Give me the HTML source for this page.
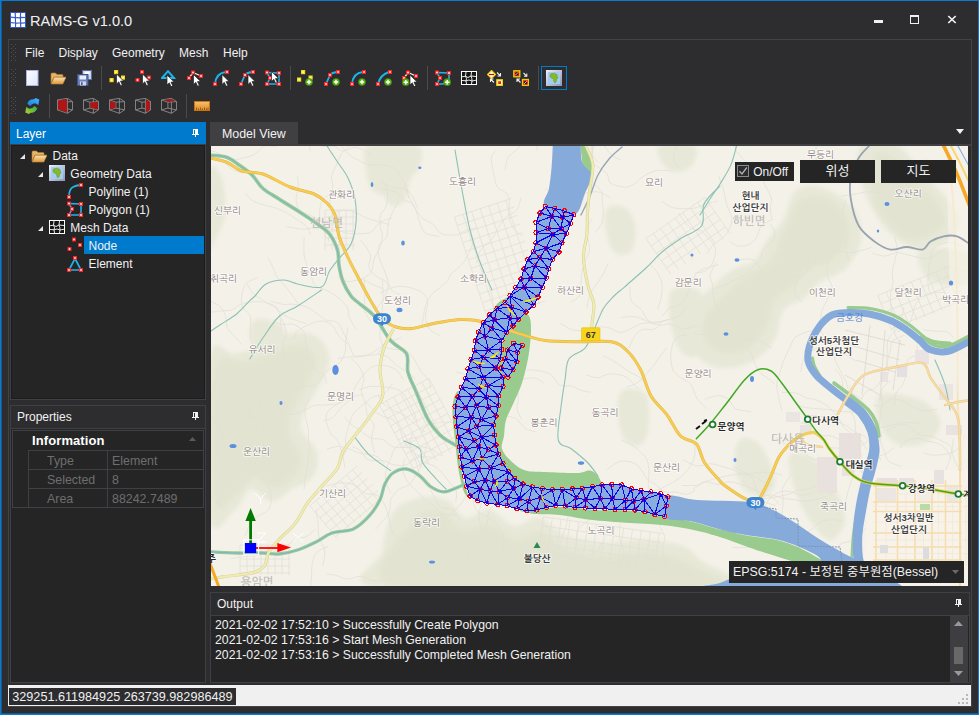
<!DOCTYPE html>
<html lang="ko">
<head>
<meta charset="utf-8">
<title>RAMS-G v1.0.0</title>
<style>
*{box-sizing:border-box;margin:0;padding:0}
html,body{width:979px;height:715px;overflow:hidden;background:#2d2d30}
body{font-family:"Liberation Sans","Noto Sans CJK KR",sans-serif;font-size:12px;color:#f1f1f1;position:relative}
.abs{position:absolute}
#win{position:absolute;left:0;top:0;width:979px;height:715px;border:1px solid #0a7bd4;background:#2d2d30;box-shadow:inset 1px -1px 0 0 #1c5587}
#title{position:absolute;left:30px;top:11px;font-size:14.6px;line-height:20px;color:#f1f1f1;white-space:nowrap}
#frame{position:absolute;left:8px;top:39px;width:964px;height:668px;border:1px solid #434346;background:#2d2d30}
.menu span{position:absolute;top:45px;font-size:12px;line-height:16px;color:#f1f1f1;white-space:nowrap}
.grip{position:absolute;width:5px;background-image:radial-gradient(circle at 1px 1px,#5a5a5f 0.8px,transparent 1px);background-size:3px 3px}
.sep{position:absolute;width:1px;background:#4a4a4f}
.phead{position:absolute;height:22px;line-height:24px;font-size:12px;padding-left:6px;white-space:nowrap}
.panel{position:absolute;background:#252526;border:1px solid #3f3f46}
.tree div{position:absolute;font-size:12px;line-height:18px;height:18px;white-space:nowrap;color:#f1f1f1}
.pg{position:absolute;font-size:12.4px;line-height:18px;color:#6e6e6e;white-space:nowrap}
.out{position:absolute;left:215px;font-size:12.25px;line-height:15px;color:#f1f1f1;white-space:nowrap}
.mapbtn{position:absolute;background:#252526;color:#f1f1f1;font-size:13px;text-align:center;white-space:nowrap}
</style>
</head>
<body>
<div id="win"></div>

<svg class="abs" style="left:10px;top:12px" width="16" height="16" viewBox="0 0 16 16"><rect width="16" height="16" fill="#3558c4"/><g fill="#fff"><path d="M1 1h3.6l.2 4L1 4.6z"/><path d="M5.8 1h4.2l-.2 4.2L6 5z"/><path d="M11.2 1H15v4l-4-.2z"/><path d="M1 5.8l3.8.4.2 4.200L1 10z"/><path d="M6 6.200l3.800.200.200 4L6 10.600z"/><path d="M11 6.200L15 6v4.200l-3.800.4z"/><path d="M1 11.200l4 .4V15H1z"/><path d="M6.200 11.800l3.800-.2.200 3.400H6z"/><path d="M11.200 11.800l3.800-.4V15h-3.600z"/></g></svg>
<div id="title">RAMS-G v1.0.0</div>
<div class="abs" style="left:874px;top:20px;width:9px;height:3px;background:#f1f1f1"></div>
<div class="abs" style="left:910px;top:15px;width:9px;height:9px;border:1px solid #f1f1f1;border-top-width:2px"></div>
<svg class="abs" style="left:947px;top:15px" width="10" height="9" viewBox="0 0 10 9"><path d="M1.300 1 L8.700 8 M8.700 1 L1.300 8" stroke="#f1f1f1" stroke-width="1.7" fill="none"/></svg>
<div id="frame"></div>
<svg class="abs" style="left:11px;top:44px" width="5" height="17" viewBox="0 0 5 17"><g fill="#505056"><rect x="0" y="0" width="1" height="1"/><rect x="4" y="0" width="1" height="1"/><rect x="2" y="2" width="1" height="1"/><rect x="0" y="4" width="1" height="1"/><rect x="4" y="4" width="1" height="1"/><rect x="2" y="6" width="1" height="1"/><rect x="0" y="8" width="1" height="1"/><rect x="4" y="8" width="1" height="1"/><rect x="2" y="10" width="1" height="1"/><rect x="0" y="12" width="1" height="1"/><rect x="4" y="12" width="1" height="1"/><rect x="2" y="14" width="1" height="1"/><rect x="0" y="16" width="1" height="1"/><rect x="4" y="16" width="1" height="1"/></g></svg>
<div class="menu">
<span style="left:25px">File</span>
<span style="left:58.5px">Display</span>
<span style="left:112px">Geometry</span>
<span style="left:179px">Mesh</span>
<span style="left:223px">Help</span>
</div>
<svg class="abs" style="left:11px;top:69px" width="5" height="17" viewBox="0 0 5 17"><g fill="#505056"><rect x="0" y="0" width="1" height="1"/><rect x="4" y="0" width="1" height="1"/><rect x="2" y="2" width="1" height="1"/><rect x="0" y="4" width="1" height="1"/><rect x="4" y="4" width="1" height="1"/><rect x="2" y="6" width="1" height="1"/><rect x="0" y="8" width="1" height="1"/><rect x="4" y="8" width="1" height="1"/><rect x="2" y="10" width="1" height="1"/><rect x="0" y="12" width="1" height="1"/><rect x="4" y="12" width="1" height="1"/><rect x="2" y="14" width="1" height="1"/><rect x="0" y="16" width="1" height="1"/><rect x="4" y="16" width="1" height="1"/></g></svg>
<svg class="abs" style="left:11px;top:97px" width="5" height="17" viewBox="0 0 5 17"><g fill="#505056"><rect x="0" y="0" width="1" height="1"/><rect x="4" y="0" width="1" height="1"/><rect x="2" y="2" width="1" height="1"/><rect x="0" y="4" width="1" height="1"/><rect x="4" y="4" width="1" height="1"/><rect x="2" y="6" width="1" height="1"/><rect x="0" y="8" width="1" height="1"/><rect x="4" y="8" width="1" height="1"/><rect x="2" y="10" width="1" height="1"/><rect x="0" y="12" width="1" height="1"/><rect x="4" y="12" width="1" height="1"/><rect x="2" y="14" width="1" height="1"/><rect x="0" y="16" width="1" height="1"/><rect x="4" y="16" width="1" height="1"/></g></svg>
<svg class="abs" style="left:24px;top:70px" width="16" height="16" viewBox="0 0 16 16"><defs><linearGradient id="gn" x1="0" y1="0" x2="1" y2="1"><stop offset="0" stop-color="#fff"/><stop offset="1" stop-color="#dfe4fb"/></linearGradient></defs><rect x="2.5" y="0.5" width="11.5" height="15" fill="url(#gn)" stroke="#a9b2e6"/></svg>
<svg class="abs" style="left:50px;top:70px" width="16" height="16" viewBox="0 0 16 16"><defs><linearGradient id="gf" x1="0" y1="0" x2="0" y2="1"><stop offset="0" stop-color="#fbe2b0"/><stop offset="1" stop-color="#e09a3c"/></linearGradient></defs><path d="M1 4 Q1 3 2 3 H5.5 L7 4.5 H12 Q13 4.5 13 5.5 V7 H4 L1 13 Z" fill="#e7b569" stroke="#b77a2a" stroke-width="0.6"/><path d="M4.2 7.2 H16 L12.8 14 H1.2 Z" fill="url(#gf)" stroke="#c48a3a" stroke-width="0.6"/></svg>
<svg class="abs" style="left:76px;top:70px" width="16" height="16" viewBox="0 0 16 16"><rect x="6.5" y="0.5" width="9" height="9" fill="#c9d4ec" stroke="#5b6e9e"/><rect x="8.5" y="1.5" width="5" height="4" fill="#fff"/><rect x="1.5" y="4.5" width="10.5" height="11" fill="#6c81b6" stroke="#3f5288"/><rect x="3.5" y="5.5" width="6.5" height="4" fill="#e8eefc"/><rect x="4" y="11.5" width="6" height="4" fill="#cfd8ee"/><rect x="5" y="12.3" width="1.6" height="2.6" fill="#3f5288"/></svg>
<svg class="abs" style="left:109px;top:70px" width="16" height="16" viewBox="0 0 16 16"><rect x="5" y="0" width="4.2" height="4.2" fill="#f2d91a"/><rect x="6.2" y="1.2" width="1.8000000000000003" height="1.8000000000000003" fill="#fff8a0"/><rect x="0.5" y="8" width="4.2" height="4.2" fill="#f2d91a"/><rect x="1.7" y="9.2" width="1.8000000000000003" height="1.8000000000000003" fill="#fff8a0"/><rect x="12" y="5.5" width="4.2" height="4.2" fill="#f2d91a"/><rect x="13.2" y="6.7" width="1.8000000000000003" height="1.8000000000000003" fill="#fff8a0"/><path d="M7.5 4 v10 l2.3 -2.2 l1.8 4 l1.7 -.8 l-1.8 -3.9 h3.2 z" fill="#fff" stroke="#222" stroke-width="0.7" stroke-linejoin="round"/></svg>
<svg class="abs" style="left:135px;top:70px" width="16" height="16" viewBox="0 0 16 16"><rect x="5" y="0" width="4" height="4" fill="#f22"/><rect x="6.2" y="1.2" width="1.6" height="1.6" fill="#fff"/><rect x="0.5" y="8" width="4" height="4" fill="#f22"/><rect x="1.7" y="9.2" width="1.6" height="1.6" fill="#fff"/><rect x="12" y="5.5" width="4" height="4" fill="#f22"/><rect x="13.2" y="6.7" width="1.6" height="1.6" fill="#fff"/><path d="M7.5 4 v10 l2.3 -2.2 l1.8 4 l1.7 -.8 l-1.8 -3.9 h3.2 z" fill="#fff" stroke="#222" stroke-width="0.7" stroke-linejoin="round"/></svg>
<svg class="abs" style="left:161px;top:70px" width="16" height="16" viewBox="0 0 16 16"><path d="M7 1.2 L13 8 H1 Z" fill="none" stroke="#1eb4ea" stroke-width="2"/><path d="M6 5 v10 l2.3 -2.2 l1.8 4 l1.7 -.8 l-1.8 -3.9 h3.2 z" fill="#fff" stroke="#222" stroke-width="0.7" stroke-linejoin="round"/></svg>
<svg class="abs" style="left:187px;top:70px" width="16" height="16" viewBox="0 0 16 16"><path d="M2 8 L6 2.5 L14 6" stroke="#eee" stroke-width="1.3" fill="none"/><rect x="0" y="6" width="4" height="4" fill="#f22"/><rect x="1.2" y="7.2" width="1.6" height="1.6" fill="#fff"/><rect x="4" y="0.5" width="4" height="4" fill="#f22"/><rect x="5.2" y="1.7" width="1.6" height="1.6" fill="#fff"/><rect x="12" y="4" width="4" height="4" fill="#f22"/><rect x="13.2" y="5.2" width="1.6" height="1.6" fill="#fff"/><path d="M6.5 4.5 v10 l2.3 -2.2 l1.8 4 l1.7 -.8 l-1.8 -3.9 h3.2 z" fill="#fff" stroke="#222" stroke-width="0.7" stroke-linejoin="round"/></svg>
<svg class="abs" style="left:213px;top:70px" width="16" height="16" viewBox="0 0 16 16"><path d="M2 14 Q3 3 13 2" stroke="#1eb4ea" stroke-width="1.8" fill="none"/><rect x="0" y="12" width="4" height="4" fill="#f22"/><rect x="1.2" y="13.2" width="1.6" height="1.6" fill="#fff"/><rect x="12" y="0" width="4" height="4" fill="#f22"/><rect x="13.2" y="1.2" width="1.6" height="1.6" fill="#fff"/><path d="M9 4.5 v10 l2.3 -2.2 l1.8 4 l1.7 -.8 l-1.8 -3.9 h3.2 z" fill="#fff" stroke="#222" stroke-width="0.7" stroke-linejoin="round"/></svg>
<svg class="abs" style="left:239px;top:70px" width="16" height="16" viewBox="0 0 16 16"><path d="M2 14 L6 5 Q8 2.5 13 2" stroke="#1eb4ea" stroke-width="1.8" fill="none"/><rect x="0" y="12" width="4" height="4" fill="#f22"/><rect x="1.2" y="13.2" width="1.6" height="1.6" fill="#fff"/><rect x="4" y="3" width="4" height="4" fill="#f22"/><rect x="5.2" y="4.2" width="1.6" height="1.6" fill="#fff"/><rect x="12" y="0" width="4" height="4" fill="#f22"/><rect x="13.2" y="1.2" width="1.6" height="1.6" fill="#fff"/><path d="M9 4.5 v10 l2.3 -2.2 l1.8 4 l1.7 -.8 l-1.8 -3.9 h3.2 z" fill="#fff" stroke="#222" stroke-width="0.7" stroke-linejoin="round"/></svg>
<svg class="abs" style="left:265px;top:70px" width="16" height="16" viewBox="0 0 16 16"><path d="M2 2.5 L14 3 V14 H2 L5 8 Z" stroke="#1eb4ea" stroke-width="1.6" fill="none"/><rect x="0" y="0.5" width="4" height="4" fill="#f22"/><rect x="1.2" y="1.7" width="1.6" height="1.6" fill="#fff"/><rect x="12" y="1" width="4" height="4" fill="#f22"/><rect x="13.2" y="2.2" width="1.6" height="1.6" fill="#fff"/><rect x="12" y="12" width="4" height="4" fill="#f22"/><rect x="13.2" y="13.2" width="1.6" height="1.6" fill="#fff"/><rect x="0" y="12" width="4" height="4" fill="#f22"/><rect x="1.2" y="13.2" width="1.6" height="1.6" fill="#fff"/><rect x="3" y="6" width="4" height="4" fill="#f22"/><rect x="4.2" y="7.2" width="1.6" height="1.6" fill="#fff"/><path d="M6.5 1.5 v10 l2.3 -2.2 l1.8 4 l1.7 -.8 l-1.8 -3.9 h3.2 z" fill="#fff" stroke="#222" stroke-width="0.7" stroke-linejoin="round"/></svg>
<svg class="abs" style="left:297px;top:70px" width="16" height="16" viewBox="0 0 16 16"><rect x="4" y="0" width="4.2" height="4.2" fill="#f2d91a"/><rect x="5.2" y="1.2" width="1.8000000000000003" height="1.8000000000000003" fill="#fff8a0"/><rect x="0" y="7.5" width="4.2" height="4.2" fill="#f2d91a"/><rect x="1.2" y="8.7" width="1.8000000000000003" height="1.8000000000000003" fill="#fff8a0"/><rect x="11.5" y="5.5" width="4.2" height="4.2" fill="#f2d91a"/><rect x="12.7" y="6.7" width="1.8000000000000003" height="1.8000000000000003" fill="#fff8a0"/><circle cx="12" cy="12" r="3.6" fill="#58b010" stroke="#3c8a08" stroke-width="0.6"/><path d="M12 9.8 V14.2 M9.8 12 H14.2" stroke="#fff" stroke-width="1.4"/></svg>
<svg class="abs" style="left:324px;top:70px" width="16" height="16" viewBox="0 0 16 16"><path d="M2 14 L6 5 Q8 2.5 13 2" stroke="#1eb4ea" stroke-width="1.8" fill="none"/><rect x="0" y="12" width="4" height="4" fill="#f22"/><rect x="1.2" y="13.2" width="1.6" height="1.6" fill="#fff"/><rect x="4" y="3" width="4" height="4" fill="#f22"/><rect x="5.2" y="4.2" width="1.6" height="1.6" fill="#fff"/><rect x="12" y="0" width="4" height="4" fill="#f22"/><rect x="13.2" y="1.2" width="1.6" height="1.6" fill="#fff"/><circle cx="12" cy="12" r="3.6" fill="#58b010" stroke="#3c8a08" stroke-width="0.6"/><path d="M12 9.8 V14.2 M9.8 12 H14.2" stroke="#fff" stroke-width="1.4"/></svg>
<svg class="abs" style="left:350px;top:70px" width="16" height="16" viewBox="0 0 16 16"><path d="M2 14 Q3 3 13 2" stroke="#1eb4ea" stroke-width="1.8" fill="none"/><rect x="0" y="12" width="4" height="4" fill="#f22"/><rect x="1.2" y="13.2" width="1.6" height="1.6" fill="#fff"/><rect x="12" y="0" width="4" height="4" fill="#f22"/><rect x="13.2" y="1.2" width="1.6" height="1.6" fill="#fff"/><circle cx="12" cy="12" r="3.6" fill="#58b010" stroke="#3c8a08" stroke-width="0.6"/><path d="M12 9.8 V14.2 M9.8 12 H14.2" stroke="#fff" stroke-width="1.4"/></svg>
<svg class="abs" style="left:376px;top:70px" width="16" height="16" viewBox="0 0 16 16"><path d="M2 14 Q4 5 13 2" stroke="#1eb4ea" stroke-width="2" fill="none"/><rect x="0" y="12" width="4" height="4" fill="#f22"/><rect x="1.2" y="13.2" width="1.6" height="1.6" fill="#fff"/><rect x="12" y="0" width="4" height="4" fill="#f22"/><rect x="13.2" y="1.2" width="1.6" height="1.6" fill="#fff"/><circle cx="12" cy="12" r="3.6" fill="#58b010" stroke="#3c8a08" stroke-width="0.6"/><path d="M12 9.8 V14.2 M9.8 12 H14.2" stroke="#fff" stroke-width="1.4"/></svg>
<svg class="abs" style="left:402px;top:70px" width="16" height="16" viewBox="0 0 16 16"><path d="M2 8 L6 2.5 L14 6" stroke="#eee" stroke-width="1.3" fill="none"/><rect x="0" y="6" width="4" height="4" fill="#f22"/><rect x="1.2" y="7.2" width="1.6" height="1.6" fill="#fff"/><rect x="4" y="0.5" width="4" height="4" fill="#f22"/><rect x="5.2" y="1.7" width="1.6" height="1.6" fill="#fff"/><rect x="12" y="4" width="4" height="4" fill="#f22"/><rect x="13.2" y="5.2" width="1.6" height="1.6" fill="#fff"/><circle cx="3.8" cy="12.2" r="3.6" fill="#58b010" stroke="#3c8a08" stroke-width="0.6"/><path d="M3.8 10.0 V14.399999999999999 M1.5999999999999996 12.2 H6.0" stroke="#fff" stroke-width="1.4"/><path d="M8 5 v10 l2.3 -2.2 l1.8 4 l1.7 -.8 l-1.8 -3.9 h3.2 z" fill="#fff" stroke="#222" stroke-width="0.7" stroke-linejoin="round"/></svg>
<svg class="abs" style="left:435px;top:70px" width="16" height="16" viewBox="0 0 16 16"><path d="M2 2.5 L14 3 V11 L8 14 H2 L5 8 Z" stroke="#1eb4ea" stroke-width="1.6" fill="none"/><rect x="0" y="0.5" width="4" height="4" fill="#f22"/><rect x="1.2" y="1.7" width="1.6" height="1.6" fill="#fff"/><rect x="12" y="1" width="4" height="4" fill="#f22"/><rect x="13.2" y="2.2" width="1.6" height="1.6" fill="#fff"/><rect x="0" y="12" width="4" height="4" fill="#f22"/><rect x="1.2" y="13.2" width="1.6" height="1.6" fill="#fff"/><rect x="3" y="6" width="4" height="4" fill="#f22"/><rect x="4.2" y="7.2" width="1.6" height="1.6" fill="#fff"/><circle cx="12.2" cy="12.2" r="3.6" fill="#58b010" stroke="#3c8a08" stroke-width="0.6"/><path d="M12.2 10.0 V14.399999999999999 M10.0 12.2 H14.399999999999999" stroke="#fff" stroke-width="1.4"/></svg>
<svg class="abs" style="left:461px;top:70px" width="16" height="16" viewBox="0 0 16 16"><rect x="0.5" y="1.5" width="15" height="13" fill="#151515" stroke="#fff" stroke-width="1"/><path d="M1 6.800 L4.500 6.200 L7 7.500 L10 6 L15 6.500 M1 10.500 L5 10.800 L8 10 L11 11 L15 10.200 M5 2 L4.500 6.200 L5.500 8.500 L5 10.800 L5.500 14 M10.500 2 L10 6 L10.800 8.500 L11 11 L10.500 14" stroke="#fff" stroke-width="0.9" fill="none"/></svg>
<svg class="abs" style="left:487px;top:70px" width="16" height="16" viewBox="0 0 16 16"><path d="M4.5 0.5 L8.5 4.5 L4.5 8.5 L0.5 4.5 Z" fill="#fff" stroke="#f2d000" stroke-width="1.2"/><path d="M2 4.5 H7" stroke="#c00" stroke-width="1.2"/><rect x="9.8" y="9.8" width="5.6" height="5.6" fill="#fff" stroke="#f2d000" stroke-width="1.3"/><rect x="11.2" y="11.2" width="2.8" height="2.8" fill="#e22"/><path d="M10 2.5 L13.5 6 M13.5 3 V6 H10.5 M7 12.5 L3.5 9 M3.5 12 V9 H6.5" stroke="#eee" stroke-width="1.1" fill="none"/></svg>
<svg class="abs" style="left:513px;top:70px" width="16" height="16" viewBox="0 0 16 16"><rect x="0.8" y="0.8" width="6" height="6" fill="#e22" stroke="#f2d000" stroke-width="1.3"/><circle cx="3.8" cy="3.8" r="1.6" fill="#111"/><path d="M2.5 5 L5 2.5" stroke="#fff" stroke-width="0.8"/><rect x="9.5" y="9.5" width="6" height="6" fill="#e22" stroke="#f2d000" stroke-width="1.3"/><circle cx="12.5" cy="12.5" r="1.6" fill="#111"/><path d="M11.2 13.8 L13.8 11.2" stroke="#fff" stroke-width="0.8"/><path d="M10.5 3 L13.8 6.3 M13.8 3.5 V6.3 H11 M7.5 12.5 L4 9 M4 12 V9 H7" stroke="#eee" stroke-width="1.1" fill="none"/></svg>
<svg class="abs" style="left:546px;top:70px" width="16" height="16" viewBox="0 0 16 16"><g transform="translate(0 0) scale(1)"><defs><linearGradient id="gaf" x1="0" y1="0" x2="1" y2="1"><stop offset="0" stop-color="#eef0fb"/><stop offset="1" stop-color="#9094b8"/></linearGradient></defs><rect x="0" y="0" width="16" height="16" fill="url(#gaf)"/><rect x="2" y="2" width="12" height="12" fill="#a2ccf0"/><path d="M4.800 3.800 L8.500 3.200 L11.200 4.800 L11 6.600 L12.200 7.200 L10.600 9.400 L10.200 11.800 L8.600 12.800 L7.600 10.800 L7.800 8.800 L6 8.400 L4.200 7 L4 5 Z" fill="#86b82c" stroke="#5f9a1c" stroke-width="0.5"/></g></svg>
<div class="sep" style="left:101px;top:66px;height:24px"></div>
<div class="sep" style="left:290px;top:66px;height:24px"></div>
<div class="sep" style="left:427px;top:66px;height:24px"></div>
<div class="sep" style="left:538px;top:66px;height:24px"></div>
<div class="abs" style="left:541px;top:66px;width:26px;height:24px;border:1px solid #007acc"></div>
<svg class="abs" style="left:24px;top:98px" width="16" height="16" viewBox="0 0 16 16"><defs><linearGradient id="grb" x1="0" y1="1" x2="1" y2="0"><stop offset="0" stop-color="#1680e0"/><stop offset="1" stop-color="#45b4ff"/></linearGradient><linearGradient id="grg" x1="1" y1="0" x2="0" y2="1"><stop offset="0" stop-color="#2aa848"/><stop offset="1" stop-color="#b4d22c"/></linearGradient></defs><path d="M3.300 5.700 Q5 1 10 1.300 L11.600 0.100 L15.300 1.500 L14.400 7 L11.200 5.200 Q8 5.500 6.100 7.900 Z" fill="url(#grb)"/><path d="M13.300 10.300 Q11.600 15 6.600 14.700 L5 15.900 L1.300 14.500 L2.200 9 L5.400 10.800 Q8.600 10.500 10.500 8.100 Z" fill="url(#grg)"/></svg>
<svg class="abs" style="left:57px;top:98px" width="16" height="16" viewBox="0 0 16 16"><path d="M0.500 2 L10.400 0.300 L15.500 3.600 V11.900 L10.400 15.300 L0.500 11.900 Z M10.400 0.300 V15.300 M0.500 2 L6.900 4.200 L15.500 3.600 M6.900 4.200 V10.100 M0.500 11.900 L6.900 10.100 L15.500 11.900" stroke="#8c8c8c" stroke-width="0.9" fill="none"/><path d="M1.100 2.600 L10 1 V14.600 L1.100 11.600 Z" fill="#b01515"/></svg>
<svg class="abs" style="left:83px;top:98px" width="16" height="16" viewBox="0 0 16 16"><path d="M0.500 2 L10.400 0.300 L15.500 3.600 V11.900 L10.400 15.300 L0.500 11.900 Z M10.400 0.300 V15.300 M0.500 2 L6.900 4.200 L15.500 3.600 M6.900 4.200 V10.100 M0.500 11.900 L6.900 10.100 L15.500 11.900" stroke="#8c8c8c" stroke-width="0.9" fill="none"/><path d="M7.400 4.600 L14.800 4.100 V11.400 L7.400 9.800 Z" fill="#b01515"/></svg>
<svg class="abs" style="left:109px;top:98px" width="16" height="16" viewBox="0 0 16 16"><path d="M0.500 2 L10.400 0.300 L15.500 3.600 V11.900 L10.400 15.300 L0.500 11.900 Z M10.400 0.300 V15.300 M0.500 2 L6.900 4.200 L15.500 3.600 M6.900 4.200 V10.100 M0.500 11.900 L6.900 10.100 L15.500 11.900" stroke="#8c8c8c" stroke-width="0.9" fill="none"/><path d="M1.200 2.800 L6.500 4.600 V9.800 L1.200 11.400 Z" fill="#b01515"/></svg>
<svg class="abs" style="left:135px;top:98px" width="16" height="16" viewBox="0 0 16 16"><path d="M0.500 2 L10.400 0.300 L15.500 3.600 V11.900 L10.400 15.300 L0.500 11.900 Z M10.400 0.300 V15.300 M0.500 2 L6.900 4.200 L15.500 3.600 M6.900 4.200 V10.100 M0.500 11.900 L6.900 10.100 L15.500 11.900" stroke="#8c8c8c" stroke-width="0.9" fill="none"/><path d="M10.900 1.200 L15 3.900 V11.600 L10.900 14.300 Z" fill="#b01515"/></svg>
<svg class="abs" style="left:161px;top:98px" width="16" height="16" viewBox="0 0 16 16"><path d="M0.500 2 L10.400 0.300 L15.500 3.600 V11.900 L10.400 15.300 L0.500 11.900 Z M10.400 0.300 V15.300 M0.500 2 L6.900 4.200 L15.500 3.600 M6.900 4.200 V10.100 M0.500 11.900 L6.900 10.100 L15.500 11.900" stroke="#8c8c8c" stroke-width="0.9" fill="none"/><path d="M2.600 2.100 L10.300 0.900 L14.200 3.300 L7 3.800 Z" fill="#b01515"/></svg>
<svg class="abs" style="left:193.5px;top:98px" width="16" height="16" viewBox="0 0 16 16"><defs><linearGradient id="gr" x1="0" y1="0" x2="0" y2="1"><stop offset="0" stop-color="#f6c073"/><stop offset="1" stop-color="#e08a1e"/></linearGradient></defs><rect x="0.5" y="3.5" width="15" height="9" fill="url(#gr)" stroke="#c87514"/><path d="M2.5 12 V9.5 M4.5 12 V10.5 M6.5 12 V9.5 M8.5 12 V10.5 M10.5 12 V9.5 M12.5 12 V10.5 M14 12 V9.5" stroke="#8a4d08" stroke-width="0.8"/></svg>
<div class="sep" style="left:49px;top:94px;height:24px"></div>
<div class="sep" style="left:186px;top:94px;height:24px"></div>
<div class="phead" style="left:10px;top:122px;width:196px;background:#007acc;color:#fff">Layer</div>
<svg class="abs" style="left:192px;top:129px" width="7" height="8" viewBox="0 0 7 8" shape-rendering="crispEdges"><path d="M1 0 H6 V5 H7 V6 H4 V8 H3 V6 H0 V5 H1 Z M2 1 V5 H3 V1 Z" fill="#ffffff" fill-rule="evenodd"/></svg>
<div class="panel" style="left:10px;top:144px;width:196px;height:256px"></div>
<div class="abs" style="left:11px;top:145px;width:194px;height:254px;border:1px solid #1c1c1c"></div>
<div class="tree">
<div style="left:84px;top:236px;width:120px;background:#007acc"></div>
<div style="left:52.5px;top:147px">Data</div>
<div style="left:70.3px;top:165px">Geometry Data</div>
<div style="left:88.5px;top:183px">Polyline (1)</div>
<div style="left:88.5px;top:201px">Polygon (1)</div>
<div style="left:70.3px;top:219px">Mesh Data</div>
<div style="left:88.5px;top:237px">Node</div>
<div style="left:88.5px;top:255px">Element</div>
</div>
<svg class="abs" style="left:20px;top:154px" width="5" height="5" viewBox="0 0 5 5"><path d="M5 0 V5 H0 Z" fill="#e8e8e8"/></svg>
<svg class="abs" style="left:38px;top:172px" width="5" height="5" viewBox="0 0 5 5"><path d="M5 0 V5 H0 Z" fill="#e8e8e8"/></svg>
<svg class="abs" style="left:38px;top:226px" width="5" height="5" viewBox="0 0 5 5"><path d="M5 0 V5 H0 Z" fill="#e8e8e8"/></svg>
<svg class="abs" style="left:31px;top:148px" width="16" height="16" viewBox="0 0 16 16"><defs><linearGradient id="gf" x1="0" y1="0" x2="0" y2="1"><stop offset="0" stop-color="#fbe2b0"/><stop offset="1" stop-color="#e09a3c"/></linearGradient></defs><path d="M1 4 Q1 3 2 3 H5.5 L7 4.5 H12 Q13 4.5 13 5.5 V7 H4 L1 13 Z" fill="#e7b569" stroke="#b77a2a" stroke-width="0.6"/><path d="M4.2 7.2 H16 L12.8 14 H1.2 Z" fill="url(#gf)" stroke="#c48a3a" stroke-width="0.6"/></svg>
<svg class="abs" style="left:49px;top:165px" width="16" height="16" viewBox="0 0 16 16"><g transform="translate(0 0) scale(1)"><defs><linearGradient id="gaf" x1="0" y1="0" x2="1" y2="1"><stop offset="0" stop-color="#eef0fb"/><stop offset="1" stop-color="#9094b8"/></linearGradient></defs><rect x="0" y="0" width="16" height="16" fill="url(#gaf)"/><rect x="2" y="2" width="12" height="12" fill="#a2ccf0"/><path d="M4.800 3.800 L8.500 3.200 L11.200 4.800 L11 6.600 L12.200 7.200 L10.600 9.400 L10.200 11.800 L8.600 12.800 L7.600 10.800 L7.800 8.800 L6 8.400 L4.200 7 L4 5 Z" fill="#86b82c" stroke="#5f9a1c" stroke-width="0.5"/></g></svg>
<svg class="abs" style="left:67px;top:183px" width="16" height="16" viewBox="0 0 16 16"><path d="M2 14 Q2 6 6 4 Q9 2.5 13 2" stroke="#1eb4ea" stroke-width="1.8" fill="none"/><rect x="0" y="12" width="4" height="4" fill="#f22"/><rect x="1.2" y="13.2" width="1.6" height="1.6" fill="#fff"/><rect x="12" y="0" width="4" height="4" fill="#f22"/><rect x="13.2" y="1.2" width="1.6" height="1.6" fill="#fff"/></svg>
<svg class="abs" style="left:67px;top:201px" width="16" height="16" viewBox="0 0 16 16"><path d="M2 2.5 L14 3 V14 H2 L5 8 Z" stroke="#1eb4ea" stroke-width="1.6" fill="none"/><rect x="0" y="0.5" width="4" height="4" fill="#f22"/><rect x="1.2" y="1.7" width="1.6" height="1.6" fill="#fff"/><rect x="12" y="1" width="4" height="4" fill="#f22"/><rect x="13.2" y="2.2" width="1.6" height="1.6" fill="#fff"/><rect x="12" y="12" width="4" height="4" fill="#f22"/><rect x="13.2" y="13.2" width="1.6" height="1.6" fill="#fff"/><rect x="0" y="12" width="4" height="4" fill="#f22"/><rect x="1.2" y="13.2" width="1.6" height="1.6" fill="#fff"/><rect x="3" y="6" width="4" height="4" fill="#f22"/><rect x="4.2" y="7.2" width="1.6" height="1.6" fill="#fff"/></svg>
<svg class="abs" style="left:49px;top:219px" width="16" height="16" viewBox="0 0 16 16"><rect x="0.5" y="1.5" width="15" height="13" fill="#151515" stroke="#fff" stroke-width="1"/><path d="M1 6.800 L4.500 6.200 L7 7.500 L10 6 L15 6.500 M1 10.500 L5 10.800 L8 10 L11 11 L15 10.200 M5 2 L4.500 6.200 L5.500 8.500 L5 10.800 L5.500 14 M10.500 2 L10 6 L10.800 8.500 L11 11 L10.500 14" stroke="#fff" stroke-width="0.9" fill="none"/></svg>
<svg class="abs" style="left:67px;top:237px" width="16" height="16" viewBox="0 0 16 16"><rect x="5" y="0.5" width="4" height="4" fill="#f22"/><rect x="6.2" y="1.7" width="1.6" height="1.6" fill="#fff"/><rect x="0.5" y="10" width="4" height="4" fill="#f22"/><rect x="1.7" y="11.2" width="1.6" height="1.6" fill="#fff"/><rect x="11" y="6" width="4" height="4" fill="#f22"/><rect x="12.2" y="7.2" width="1.6" height="1.6" fill="#fff"/></svg>
<svg class="abs" style="left:67px;top:255.5px" width="16" height="16" viewBox="0 0 16 16"><path d="M8 2.5 L14 14 H2 Z" stroke="#1eb4ea" stroke-width="1.7" fill="none"/><rect x="6" y="0" width="4" height="4" fill="#f22"/><rect x="7.2" y="1.2" width="1.6" height="1.6" fill="#fff"/><rect x="0" y="12" width="4" height="4" fill="#f22"/><rect x="1.2" y="13.2" width="1.6" height="1.6" fill="#fff"/><rect x="12" y="12" width="4" height="4" fill="#f22"/><rect x="13.2" y="13.2" width="1.6" height="1.6" fill="#fff"/></svg>
<div class="panel" style="left:10px;top:405px;width:196px;height:278px"></div>
<div class="phead" style="left:11px;top:406px;width:194px;background:#2d2d30;color:#f1f1f1;line-height:23px">Properties</div>
<svg class="abs" style="left:192px;top:412px" width="7" height="8" viewBox="0 0 7 8" shape-rendering="crispEdges"><path d="M1 0 H6 V5 H7 V6 H4 V8 H3 V6 H0 V5 H1 Z M2 1 V5 H3 V1 Z" fill="#f1f1f1" fill-rule="evenodd"/></svg>
<div class="abs" style="left:11px;top:428px;width:194px;height:1px;background:#3f3f46"></div>
<div class="abs" style="left:12px;top:430px;width:192px;height:78px;border:1px solid #3f3f46;border-bottom:none;background:#252526"></div>
<div class="abs" style="left:28px;top:450px;width:176px;height:58px;border-left:1px solid #3f3f46"></div>
<div class="abs" style="left:28px;top:450px;width:176px;height:1px;background:#3f3f46"></div>
<div class="abs" style="left:28px;top:469px;width:176px;height:1px;background:#3f3f46"></div>
<div class="abs" style="left:28px;top:488px;width:176px;height:1px;background:#3f3f46"></div>
<div class="abs" style="left:12px;top:507px;width:192px;height:1px;background:#3f3f46"></div>
<div class="abs" style="left:107px;top:450px;width:1px;height:58px;background:#3f3f46"></div>
<div class="abs" style="left:32px;top:431px;font-size:13px;font-weight:bold;line-height:19px;color:#fff;white-space:nowrap;letter-spacing:0.1px">Information</div>
<svg class="abs" style="left:189px;top:437px" width="7" height="4" viewBox="0 0 7 4"><path d="M0 4 H7 L3.5 0 Z" fill="#5a5a5a"/></svg>
<div class="pg" style="left:47px;top:452px">Type</div><div class="pg" style="left:112px;top:452px">Element</div>
<div class="pg" style="left:47px;top:471px">Selected</div><div class="pg" style="left:112px;top:471px">8</div>
<div class="pg" style="left:47px;top:490px">Area</div><div class="pg" style="left:112px;top:490px">88242.7489</div>
<div class="phead" style="left:210px;top:122px;width:88px;background:#404043;padding-left:12px;font-size:12.400px">Model View</div>
<div class="abs" style="left:210px;top:144px;width:761px;height:2px;background:#404043"></div>
<svg class="abs" style="left:956px;top:129px" width="8" height="5" viewBox="0 0 8 5"><path d="M0 0 H8 L4 5 Z" fill="#f1f1f1"/></svg>
<svg class="abs" style="left:211px;top:146px" width="757" height="440" viewBox="211 146 757 440" font-family="Liberation Sans, NanumGothic, Noto Sans CJK KR, sans-serif">
<defs><filter id="bl" x="-20%" y="-20%" width="140%" height="140%"><feGaussianBlur stdDeviation="2.2"/></filter></defs>
<rect x="200" y="140" width="780" height="460" fill="#f4f1e9"/>
<g fill="#e7e8d7" filter="url(#bl)">
<path d="M369.0 146.0C377.5 142.0 408.5 142.8 417.0 146.0C425.5 149.2 421.2 159.3 420.0 165.0C418.8 170.7 412.5 174.2 410.0 180.0C407.5 185.8 408.0 195.7 405.0 200.0C402.0 204.3 395.5 206.7 392.0 206.0C388.5 205.3 387.3 198.7 384.0 196.0C380.7 193.3 375.0 194.3 372.0 190.0C369.0 185.7 366.5 177.3 366.0 170.0C365.5 162.7 360.5 150.0 369.0 146.0Z"/>
<path d="M606.0 210.0C608.7 204.5 619.2 204.5 624.0 207.0C628.8 209.5 633.7 217.8 635.0 225.0C636.3 232.2 634.8 245.2 632.0 250.0C629.2 254.8 622.0 255.7 618.0 254.0C614.0 252.3 610.0 247.3 608.0 240.0C606.0 232.7 603.3 215.5 606.0 210.0Z"/>
<path d="M659.0 146.0C664.0 142.8 688.5 142.8 694.0 146.0C699.5 149.2 695.0 160.7 692.0 165.0C689.0 169.3 680.7 172.0 676.0 172.0C671.3 172.0 666.8 169.3 664.0 165.0C661.2 160.7 654.0 149.2 659.0 146.0Z"/>
<path d="M795.6 191.0C801.8 185.5 810.4 184.2 820.0 187.0C829.6 189.8 846.2 198.8 853.0 207.7C859.8 216.6 862.3 230.4 861.0 240.6C859.7 250.8 851.8 262.1 845.0 269.0C838.2 275.9 826.8 276.9 820.0 281.7C813.2 286.5 810.2 293.2 804.0 298.0C797.8 302.8 787.8 303.7 783.0 310.5C778.2 317.3 779.8 330.8 775.0 339.0C770.2 347.2 762.7 355.2 754.5 360.0C746.3 364.8 734.6 368.0 725.7 368.0C716.8 368.0 707.2 364.8 701.0 360.0C694.8 355.2 690.1 347.2 688.7 339.0C687.3 330.8 688.7 319.4 692.8 310.5C696.9 301.6 706.5 292.7 713.4 285.8C720.3 278.9 727.1 273.1 734.0 269.0C740.9 264.9 749.0 265.7 754.5 261.0C760.0 256.3 762.0 247.4 766.8 240.6C771.5 233.8 778.2 228.3 783.0 220.0C787.8 211.7 789.4 196.5 795.6 191.0Z"/>
<path d="M861.0 146.0C867.2 140.5 888.3 141.9 898.0 146.0C907.7 150.1 911.4 162.5 919.0 170.7C926.6 178.9 936.9 186.8 943.7 195.0C950.5 203.2 959.3 212.4 960.0 220.0C960.7 227.6 954.6 235.8 947.8 240.6C941.0 245.4 928.0 249.5 919.0 248.8C910.0 248.1 901.5 242.7 894.0 236.5C886.5 230.3 879.3 221.4 873.8 211.8C868.3 202.2 863.1 190.0 861.0 179.0C858.9 168.0 854.8 151.5 861.0 146.0Z"/>
<path d="M919.0 252.0C922.3 247.7 936.5 248.5 945.0 249.0C953.5 249.5 965.8 249.5 970.0 255.0C974.2 260.5 974.2 277.0 970.0 282.0C965.8 287.0 952.5 286.2 945.0 285.0C937.5 283.8 929.3 280.5 925.0 275.0C920.7 269.5 915.7 256.3 919.0 252.0Z"/>
<path d="M672.0 290.0C677.0 285.3 694.5 285.3 700.0 292.0C705.5 298.7 705.7 319.3 705.0 330.0C704.3 340.7 700.2 352.7 696.0 356.0C691.8 359.3 684.3 356.0 680.0 350.0C675.7 344.0 671.3 330.0 670.0 320.0C668.7 310.0 667.0 294.7 672.0 290.0Z"/>
<path d="M622.0 391.0C626.7 387.7 641.7 388.5 646.0 395.0C650.3 401.5 649.0 421.7 648.0 430.0C647.0 438.3 643.8 443.3 640.0 445.0C636.2 446.7 628.7 445.0 625.0 440.0C621.3 435.0 618.5 423.2 618.0 415.0C617.5 406.8 617.3 394.3 622.0 391.0Z"/>
<path d="M210.0 357.7C214.1 330.3 225.8 355.7 234.7 353.6C243.6 351.5 253.9 348.4 263.5 345.0C273.1 341.6 283.1 334.3 292.0 333.0C300.9 331.7 310.8 332.9 317.0 337.0C323.2 341.1 328.3 350.2 329.0 357.7C329.7 365.2 324.4 374.4 321.0 382.0C317.6 389.6 312.1 395.4 308.7 403.0C305.3 410.6 299.1 419.4 300.5 427.6C301.9 435.8 314.9 443.8 317.0 452.0C319.1 460.2 317.0 470.8 312.8 477.0C308.6 483.2 298.9 484.9 292.0 489.0C285.1 493.1 278.5 501.6 271.7 501.6C264.9 501.6 257.2 487.6 251.0 489.0C244.8 490.4 241.5 505.2 234.7 510.0C227.9 514.8 214.1 543.4 210.0 518.0C205.9 492.6 205.9 385.1 210.0 357.7Z"/>
<path d="M395.0 510.0C401.9 501.1 415.1 498.9 424.0 497.5C432.9 496.1 441.7 498.2 448.5 501.6C455.3 505.0 458.1 516.6 465.0 518.0C471.9 519.4 481.4 508.7 489.6 510.0C497.8 511.3 505.8 524.7 514.0 526.0C522.2 527.3 530.7 516.6 539.0 518.0C547.3 519.4 553.5 530.4 563.7 534.5C573.9 538.6 587.3 541.9 600.0 542.8C612.7 543.7 626.7 539.6 640.0 540.0C653.3 540.4 670.0 541.7 680.0 545.0C690.0 548.3 693.3 552.5 700.0 560.0C706.7 567.5 772.2 585.0 720.0 590.0C667.8 595.0 443.2 596.5 387.0 590.0C330.8 583.5 381.4 564.3 382.7 551.0C384.0 537.7 388.1 518.9 395.0 510.0Z"/>
<path d="M740.0 440.0C744.2 436.7 754.2 438.3 760.0 445.0C765.8 451.7 774.2 471.7 775.0 480.0C775.8 488.3 770.0 493.3 765.0 495.0C760.0 496.7 750.0 495.0 745.0 490.0C740.0 485.0 735.8 473.3 735.0 465.0C734.2 456.7 735.8 443.3 740.0 440.0Z"/>
<path d="M790.0 455.0C793.3 450.0 807.5 454.2 815.0 460.0C822.5 465.8 830.0 480.0 835.0 490.0C840.0 500.0 845.8 511.7 845.0 520.0C844.2 528.3 835.8 540.0 830.0 540.0C824.2 540.0 815.8 528.3 810.0 520.0C804.2 511.7 798.3 500.8 795.0 490.0C791.7 479.2 786.7 460.0 790.0 455.0Z"/>
<path d="M880.0 395.0C886.7 390.8 910.0 395.8 920.0 400.0C930.0 404.2 938.3 413.3 940.0 420.0C941.7 426.7 936.7 435.8 930.0 440.0C923.3 444.2 908.3 447.5 900.0 445.0C891.7 442.5 883.3 433.3 880.0 425.0C876.7 416.7 873.3 399.2 880.0 395.0Z"/>
<path d="M210.0 170.0C212.0 159.2 219.5 172.5 222.0 180.0C224.5 187.5 226.2 205.0 225.0 215.0C223.8 225.0 217.5 235.0 215.0 240.0C212.5 245.0 210.8 256.7 210.0 245.0C209.2 233.3 208.0 180.8 210.0 170.0Z"/>
<path d="M255.0 320.0C260.0 317.8 275.0 320.8 280.0 325.0C285.0 329.2 288.0 340.8 285.0 345.0C282.0 349.2 267.8 351.2 262.0 350.0C256.2 348.8 251.2 343.0 250.0 338.0C248.8 333.0 250.0 322.2 255.0 320.0Z"/>
</g>
<g fill="#dfe2cd" filter="url(#bl)" opacity="0.55">
<path d="M800.0 200.0C805.8 196.7 817.5 195.5 825.0 198.0C832.5 200.5 841.2 208.0 845.0 215.0C848.8 222.0 850.5 232.2 848.0 240.0C845.5 247.8 836.3 257.3 830.0 262.0C823.7 266.7 815.8 264.2 810.0 268.0C804.2 271.8 800.8 279.7 795.0 285.0C789.2 290.3 780.0 292.5 775.0 300.0C770.0 307.5 770.0 321.7 765.0 330.0C760.0 338.3 752.2 346.3 745.0 350.0C737.8 353.7 728.7 353.7 722.0 352.0C715.3 350.3 707.8 345.7 705.0 340.0C702.2 334.3 701.7 325.5 705.0 318.0C708.3 310.5 717.8 302.2 725.0 295.0C732.2 287.8 740.5 280.5 748.0 275.0C755.5 269.5 764.7 267.8 770.0 262.0C775.3 256.2 776.7 247.3 780.0 240.0C783.3 232.7 786.7 224.7 790.0 218.0C793.3 211.3 794.2 203.3 800.0 200.0Z"/>
<path d="M875.0 155.0C878.8 148.8 888.3 153.8 895.0 158.0C901.7 162.2 908.3 173.0 915.0 180.0C921.7 187.0 930.0 193.0 935.0 200.0C940.0 207.0 945.8 216.0 945.0 222.0C944.2 228.0 936.7 233.3 930.0 236.0C923.3 238.7 912.5 240.7 905.0 238.0C897.5 235.3 890.5 227.2 885.0 220.0C879.5 212.8 873.7 205.8 872.0 195.0C870.3 184.2 871.2 161.2 875.0 155.0Z"/>
<path d="M215.0 370.0C220.0 347.0 235.0 365.0 245.0 362.0C255.0 359.0 265.8 354.8 275.0 352.0C284.2 349.2 293.3 344.0 300.0 345.0C306.7 346.0 313.7 351.8 315.0 358.0C316.3 364.2 311.3 374.2 308.0 382.0C304.7 389.8 298.3 397.0 295.0 405.0C291.7 413.0 287.2 421.7 288.0 430.0C288.8 438.3 298.8 447.5 300.0 455.0C301.2 462.5 299.2 469.5 295.0 475.0C290.8 480.5 281.7 487.5 275.0 488.0C268.3 488.5 261.7 476.8 255.0 478.0C248.3 479.2 241.7 491.3 235.0 495.0C228.3 498.7 218.3 520.8 215.0 500.0C211.7 479.2 210.0 393.0 215.0 370.0Z"/>
<path d="M410.0 525.0C416.7 512.0 431.3 511.2 440.0 512.0C448.7 512.8 453.7 527.8 462.0 530.0C470.3 532.2 481.2 523.3 490.0 525.0C498.8 526.7 506.7 538.8 515.0 540.0C523.3 541.2 531.7 530.7 540.0 532.0C548.3 533.3 555.0 544.0 565.0 548.0C575.0 552.0 585.8 555.3 600.0 556.0C614.2 556.7 635.0 550.5 650.0 552.0C665.0 553.5 680.8 558.7 690.0 565.0C699.2 571.3 753.3 585.8 705.0 590.0C656.7 594.2 449.2 600.8 400.0 590.0C350.8 579.2 403.3 538.0 410.0 525.0Z"/>
</g>
<path d="M454.5 217.0L488.5 321.6M463.0 214.2L497.0 318.8M471.6 211.4L505.6 316.0M480.2 208.6L514.1 313.2M488.7 205.8L522.7 310.5M497.3 203.1L531.3 307.7M505.8 200.3L539.8 304.9M454.5 217.0L511.5 198.4M457.3 225.5L514.3 207.0M460.0 234.1L517.1 215.5M462.8 242.6L519.9 224.1M465.6 251.2L522.7 232.7M468.4 259.8L525.4 241.2M471.2 268.3L528.2 249.8M473.9 276.9L531.0 258.3M476.7 285.4L533.8 266.9M479.5 294.0L536.6 275.5M482.3 302.6L539.3 284.0M485.1 311.1L542.1 292.6M487.8 319.7L544.9 301.1M379.4 404.6L415.1 471.7M386.5 400.8L422.2 467.9M393.6 397.1L429.2 464.2M400.6 393.3L436.3 460.4M407.7 389.6L443.4 456.7M414.8 385.8L450.4 452.9M421.8 382.1L457.5 449.2M428.9 378.3L464.6 445.4M379.4 404.6L428.9 378.3M383.2 411.7L432.6 385.4M386.9 418.7L436.4 392.4M390.7 425.8L440.1 399.5M394.5 432.8L443.9 406.6M398.2 439.9L447.7 413.6M402.0 447.0L451.4 420.7M405.7 454.0L455.2 427.7M409.5 461.1L458.9 434.8M413.2 468.2L462.7 441.9M309.8 505.8L336.8 538.0M315.9 500.7L342.9 532.9M322.0 495.6L349.0 527.7M328.1 490.4L355.1 522.6M334.3 485.3L361.3 517.4M340.4 480.1L367.4 512.3M346.5 475.0L373.5 507.2M352.7 469.8L379.6 502.0M309.8 505.8L357.2 466.0M314.9 512.0L362.4 472.1M320.0 518.1L367.5 478.2M325.2 524.2L372.7 484.4M330.3 530.4L377.8 490.5M335.5 536.5L383.0 496.6M543.4 516.8L537.8 556.5M552.3 518.1L546.7 557.7M561.2 519.3L555.6 559.0M570.1 520.6L564.5 560.2M579.0 521.9L573.5 561.5M587.9 523.1L582.4 562.7M596.8 524.4L591.3 564.0M605.8 525.6L600.2 565.2M614.7 526.9L609.1 566.5M623.6 528.1L618.0 567.7M632.5 529.4L626.9 569.0M641.4 530.6L635.8 570.2M650.3 531.9L644.7 571.5M659.2 533.1L653.7 572.7M543.4 516.8L662.2 533.5M542.1 525.8L660.9 542.5M540.9 534.7L659.7 551.4M539.6 543.6L658.4 560.3M538.4 552.5L657.2 569.2M645.9 238.6L671.1 274.7M653.3 233.5L678.5 269.5M660.6 228.3L685.9 264.3M668.0 223.1L693.2 259.2M675.4 218.0L700.6 254.0M682.8 212.8L708.0 248.9M690.1 207.7L715.4 243.7M697.5 202.5L722.7 238.5M704.9 197.3L730.1 233.4M645.9 238.6L704.9 197.3M651.1 246.0L710.0 204.7M656.2 253.4L715.2 212.1M661.4 260.7L720.4 219.4M666.5 268.1L725.5 226.8M325.0 210.0L325.0 250.0M332.0 210.0L332.0 250.0M339.0 210.0L339.0 250.0M346.0 210.0L346.0 250.0M353.0 210.0L353.0 250.0M325.0 210.0L355.0 210.0M325.0 217.0L355.0 217.0M325.0 224.0L355.0 224.0M325.0 231.0L355.0 231.0M325.0 238.0L355.0 238.0M325.0 245.0L355.0 245.0M240.0 545.0L240.0 575.0M247.0 545.0L247.0 575.0M254.0 545.0L254.0 575.0M261.0 545.0L261.0 575.0M268.0 545.0L268.0 575.0M275.0 545.0L275.0 575.0M282.0 545.0L282.0 575.0M289.0 545.0L289.0 575.0M240.0 545.0L290.0 545.0M240.0 552.0L290.0 552.0M240.0 559.0L290.0 559.0M240.0 566.0L290.0 566.0M240.0 573.0L290.0 573.0M877.8 295.4L892.0 330.6M886.1 292.0L900.4 327.2M894.5 288.6L908.7 323.9M902.8 285.3L917.1 320.5M911.2 281.9L925.4 317.1M919.5 278.5L933.8 313.7M927.9 275.1L942.1 310.4M936.2 271.8L950.4 307.0M944.6 268.4L958.8 303.6M877.8 295.4L952.0 265.4M881.2 303.7L955.3 273.7M884.5 312.1L958.7 282.1M887.9 320.4L962.1 290.4M891.3 328.7L965.5 298.8M392.3 384.0C390.9 385.6 387.2 391.5 384.0 393.7C380.7 395.9 376.3 395.2 372.7 397.1C369.1 399.1 365.5 402.4 362.3 405.2C359.1 408.0 355.6 410.5 353.3 414.1C351.0 417.8 349.8 422.9 348.5 427.2C347.2 431.6 345.7 436.8 345.4 440.3C345.0 443.9 347.1 445.7 346.6 448.7C346.0 451.7 342.8 456.7 342.1 458.3M658.1 545.7C656.5 547.1 652.6 552.6 648.6 554.4C644.6 556.2 637.6 554.3 634.0 556.5C630.4 558.6 629.6 564.2 626.9 567.2C624.3 570.3 620.9 572.4 618.3 575.0C615.6 577.6 613.6 580.0 610.8 583.0C608.0 586.0 605.1 590.2 601.2 593.0C597.3 595.7 589.7 598.4 587.4 599.5M953.3 438.6C953.0 440.7 952.6 446.8 951.7 451.1C950.8 455.5 949.4 461.1 947.9 464.6C946.4 468.1 946.0 470.0 942.9 472.0C939.8 474.1 933.6 475.7 929.5 476.7C925.4 477.7 922.3 476.8 918.3 478.1C914.3 479.4 907.6 483.4 905.5 484.4M247.9 414.2C249.8 415.3 255.8 419.1 259.3 420.3C262.9 421.4 266.3 422.1 269.2 421.1C272.0 420.0 272.7 415.3 276.5 414.2C280.4 413.1 287.5 415.2 292.3 414.5C297.1 413.8 301.5 411.4 305.2 409.8C308.9 408.3 311.2 406.1 314.6 405.3C318.0 404.5 321.4 405.5 325.6 405.0C329.9 404.6 335.9 404.7 340.3 402.7C344.7 400.7 350.1 394.6 352.1 393.0M417.1 422.7C416.6 421.1 415.8 416.7 414.1 412.8C412.4 408.9 409.4 402.9 406.9 399.1C404.4 395.3 402.5 392.1 399.1 390.1C395.7 388.1 391.1 387.9 386.5 387.3C381.8 386.7 375.7 386.1 371.2 386.5C366.7 386.8 361.5 389.0 359.6 389.6M926.4 159.1C925.0 160.5 920.5 164.3 918.3 167.3C916.1 170.3 915.1 173.8 913.3 176.9C911.4 180.0 909.3 183.2 907.1 185.8C904.9 188.4 903.0 191.0 900.2 192.5C897.3 194.0 893.3 194.6 890.0 194.7C886.6 194.8 884.1 193.3 880.2 192.9C876.4 192.4 870.7 191.7 866.7 191.9C862.7 192.1 860.3 193.3 856.2 194.0C852.0 194.7 844.1 195.8 841.7 196.2M465.8 429.6C467.0 428.4 470.2 424.6 473.0 422.4C475.8 420.3 478.7 418.2 482.7 416.7C486.7 415.2 493.2 413.7 497.0 413.5C500.8 413.3 502.3 414.7 505.5 415.6C508.8 416.5 513.2 416.9 516.4 419.0C519.7 421.1 521.6 426.0 524.8 428.2C528.1 430.3 534.1 431.4 535.9 432.0M522.9 235.8C521.2 234.5 515.4 231.3 513.0 227.8C510.7 224.4 509.5 219.3 508.9 215.1C508.3 211.0 509.8 206.6 509.4 203.0C509.1 199.4 508.8 196.2 506.7 193.5C504.7 190.8 499.3 190.2 497.1 186.8C494.9 183.4 494.6 177.7 493.6 172.9C492.6 168.1 490.8 161.7 491.2 157.9C491.6 154.2 495.3 151.7 496.2 150.5M770.2 223.9C771.0 225.2 774.2 229.0 774.6 231.8C775.0 234.6 774.5 237.6 772.6 240.6C770.7 243.6 765.1 246.8 763.1 249.8C761.1 252.8 762.1 255.9 760.6 258.5C759.0 261.0 756.3 262.8 754.1 265.3C751.8 267.8 749.9 270.9 746.9 273.3C744.0 275.6 740.1 277.2 736.4 279.2C732.8 281.1 728.8 283.4 725.1 285.0C721.4 286.6 716.0 288.2 714.2 288.8M455.7 502.4C455.8 500.4 457.3 494.2 456.0 490.5C454.8 486.9 450.3 483.5 448.1 480.7C445.9 477.8 444.9 476.1 442.7 473.7C440.4 471.3 438.5 468.4 434.7 466.4C431.0 464.3 422.8 462.2 420.4 461.4M310.1 151.5C310.0 149.6 309.3 144.0 309.4 139.8C309.6 135.7 312.0 130.3 311.1 126.9C310.1 123.5 305.8 122.4 303.8 119.5C301.8 116.6 300.0 111.2 299.3 109.5M923.0 329.9C925.2 330.1 932.2 330.9 936.3 331.3C940.5 331.6 944.4 330.4 947.7 332.1C951.1 333.8 954.1 338.2 956.4 341.5C958.6 344.8 958.3 349.0 961.2 351.8C964.0 354.7 971.5 357.6 973.5 358.8M876.1 490.8C874.6 489.0 869.8 483.6 867.5 480.4C865.2 477.2 864.3 474.7 862.2 471.6C860.1 468.4 857.0 465.3 855.0 461.4C853.1 457.5 852.9 451.4 850.7 448.0C848.6 444.7 845.3 443.4 842.1 441.4C838.8 439.3 834.7 437.0 831.2 436.0C827.7 434.9 824.0 436.7 820.9 435.0C817.7 433.4 815.5 428.3 812.2 426.3C808.8 424.2 802.8 423.2 800.9 422.6M627.2 386.6C628.8 386.0 633.3 385.3 636.5 383.2C639.7 381.1 643.5 377.0 646.3 374.1C649.1 371.1 651.4 368.3 653.5 365.6C655.5 362.9 656.7 360.9 658.9 358.0C661.1 355.1 665.2 349.7 666.5 348.1M771.8 219.1C771.6 217.1 770.3 210.8 770.3 207.3C770.2 203.8 772.3 201.9 771.4 198.1C770.4 194.3 766.7 188.9 764.7 184.6C762.7 180.3 761.7 175.4 759.5 172.4C757.3 169.3 754.1 168.6 751.5 166.5C748.9 164.3 746.6 162.2 744.0 159.5C741.5 156.9 738.0 154.4 736.2 150.5C734.5 146.6 734.1 138.5 733.6 136.1M650.6 264.9C651.8 266.3 655.9 270.0 657.8 273.2C659.7 276.4 661.4 279.9 662.0 284.0C662.5 288.0 661.8 293.3 661.1 297.5C660.4 301.7 658.2 307.4 657.7 309.3M886.8 430.5C889.2 429.6 897.3 425.4 901.0 424.7C904.8 424.0 906.2 424.6 909.3 426.3C912.4 428.1 916.4 433.5 919.8 435.0C923.1 436.6 925.9 434.6 929.5 435.6C933.1 436.5 937.6 438.9 941.2 440.7C944.8 442.6 948.9 444.2 950.8 446.5C952.7 448.8 951.4 451.4 952.6 454.7C953.7 458.0 955.4 463.4 957.8 466.3C960.2 469.2 965.5 471.3 967.1 472.3M241.9 344.5C240.6 343.2 236.8 339.2 234.3 336.4C231.9 333.6 228.8 331.2 227.3 327.7C225.8 324.2 226.8 319.2 225.4 315.5C224.0 311.8 222.3 307.9 218.8 305.4C215.3 302.9 209.4 300.9 204.5 300.5C199.6 300.2 191.9 302.7 189.4 303.2M790.5 475.6C789.2 477.7 783.9 484.4 782.7 488.2C781.4 492.1 783.1 494.9 783.1 498.9C783.0 502.9 782.5 508.3 782.3 512.2C782.0 516.2 782.6 518.8 781.6 522.6C780.6 526.3 778.1 531.3 776.2 534.7C774.3 538.1 773.0 541.2 770.1 543.0C767.2 544.7 763.3 544.5 758.9 545.3C754.5 546.0 748.2 547.3 743.8 547.6C739.4 547.9 734.3 547.3 732.4 547.3M354.2 357.4C353.3 355.3 350.5 348.4 348.9 344.5C347.2 340.6 346.1 337.9 344.2 334.3C342.3 330.6 340.4 324.9 337.4 322.5C334.3 320.1 329.1 321.4 325.7 319.9C322.3 318.4 320.3 315.8 317.0 313.6C313.8 311.4 310.4 308.3 306.2 306.8C302.1 305.2 295.9 304.6 292.1 304.2C288.3 303.8 286.9 304.9 283.3 304.4C279.7 303.9 272.5 301.6 270.4 301.0M355.9 329.2C354.8 327.1 350.5 320.2 349.1 316.6C347.6 312.9 349.0 310.4 347.3 307.3C345.6 304.3 342.2 301.0 338.9 298.2C335.6 295.5 331.5 293.1 327.5 290.9C323.6 288.8 318.0 288.1 315.2 285.3C312.4 282.6 312.3 278.6 310.7 274.5C309.0 270.4 306.4 264.5 305.3 260.6C304.2 256.7 304.1 255.1 303.9 251.2C303.7 247.3 304.1 239.5 304.1 237.1M389.2 224.4C387.3 224.0 381.7 222.7 377.7 221.5C373.7 220.4 369.8 219.3 365.4 217.5C361.0 215.7 356.0 211.9 351.3 210.9C346.5 210.0 340.7 210.5 336.9 211.7C333.2 212.9 330.0 217.0 328.6 218.0M273.0 381.7C274.4 380.3 279.2 376.9 281.3 373.2C283.5 369.5 285.5 364.4 285.7 359.6C286.0 354.9 282.7 348.5 282.8 344.6C282.8 340.8 285.7 339.6 286.0 336.6C286.4 333.7 286.0 330.3 285.0 326.9C284.1 323.5 281.2 318.0 280.4 316.2M844.7 453.5C842.8 454.3 837.0 456.8 833.4 458.0C829.8 459.1 826.7 460.1 823.2 460.2C819.6 460.3 815.7 460.1 812.1 458.7C808.5 457.2 805.3 453.7 801.8 451.4C798.3 449.1 794.4 446.1 791.3 444.8C788.3 443.4 786.0 444.5 783.4 443.3C780.8 442.0 776.9 438.1 775.6 437.1M360.5 240.0C361.5 241.3 365.0 245.2 366.7 248.0C368.4 250.9 370.2 253.7 370.5 257.0C370.9 260.2 368.1 264.2 369.0 267.4C369.9 270.6 372.8 273.6 375.8 276.0C378.7 278.5 383.9 279.6 386.7 282.1C389.5 284.6 390.0 288.9 392.6 291.1C395.1 293.3 400.3 294.8 401.8 295.5M895.0 405.6C895.1 403.6 894.4 397.2 895.6 393.9C896.8 390.6 900.1 389.3 901.9 385.9C903.8 382.6 905.6 377.9 906.6 373.6C907.5 369.3 905.9 363.4 907.5 360.2C909.1 357.0 914.7 356.9 916.3 354.4C917.9 351.9 917.1 346.6 917.2 345.1M242.3 173.2C240.0 172.2 232.5 170.2 228.8 167.0C225.1 163.8 223.3 157.0 220.2 154.2C217.1 151.3 212.8 152.2 210.3 150.1C207.8 148.0 206.3 144.9 205.2 141.7C204.2 138.4 205.1 134.9 204.1 130.6C203.1 126.4 200.1 118.6 199.3 116.2M345.1 468.1C344.6 465.8 343.5 458.7 342.3 454.3C341.1 449.9 340.1 445.5 338.0 441.7C335.9 437.9 331.8 435.6 329.8 431.8C327.8 427.9 326.1 422.2 326.0 418.6C325.9 415.0 327.0 412.4 329.1 409.9C331.3 407.4 335.4 405.4 338.9 403.4C342.4 401.4 346.0 399.3 350.1 397.7C354.1 396.2 361.0 394.8 363.2 394.2M671.1 170.7C668.4 170.7 659.9 169.7 655.1 170.8C650.3 171.8 645.7 174.9 642.1 177.2C638.6 179.4 636.8 182.6 633.8 184.3C630.9 185.9 628.3 187.3 624.4 187.1C620.5 186.9 613.4 185.3 610.5 183.0C607.6 180.8 609.2 176.6 606.8 173.7C604.3 170.8 599.5 168.1 595.8 165.6C592.1 163.0 587.1 161.5 584.5 158.5C581.9 155.4 581.0 149.1 580.3 147.2M678.7 167.8C677.9 166.2 674.3 162.1 673.8 158.6C673.4 155.2 675.9 151.3 675.9 147.2C675.9 143.2 674.0 139.1 673.7 134.5C673.4 129.8 674.6 123.9 674.4 119.5C674.1 115.1 674.2 111.6 672.2 108.1C670.3 104.6 664.7 102.0 662.7 98.5C660.6 94.9 661.2 89.9 660.1 86.6C658.9 83.2 656.4 79.8 655.7 78.4M472.9 358.4C474.3 359.9 477.8 365.9 481.2 367.7C484.6 369.4 490.0 367.6 493.2 368.7C496.4 369.8 497.7 372.4 500.4 374.1C503.0 375.8 506.6 377.1 509.2 379.1C511.7 381.1 514.1 383.2 515.6 386.4C517.2 389.5 518.2 394.1 518.4 397.8C518.7 401.6 516.6 405.1 517.1 408.7C517.6 412.3 520.7 417.6 521.4 419.4M880.8 572.7C879.2 571.7 874.3 567.6 871.3 566.7C868.2 565.9 865.9 566.6 862.5 567.4C859.1 568.2 854.3 569.5 851.0 571.7C847.8 573.8 845.4 576.7 843.2 580.1C841.1 583.6 840.2 589.3 838.1 592.4C835.9 595.4 832.7 596.0 830.4 598.2C828.1 600.4 825.5 602.0 824.3 605.5C823.1 609.0 823.4 616.8 823.2 619.1M942.4 571.2C944.3 570.8 949.2 569.5 953.7 568.8C958.2 568.1 965.2 566.6 969.4 566.9C973.6 567.2 975.4 569.2 978.7 570.5C982.0 571.7 985.4 572.5 989.2 574.3C993.1 576.1 997.6 580.3 1001.8 581.3C1006.1 582.4 1012.7 580.8 1014.8 580.7M230.5 558.5C233.1 558.2 241.4 557.0 246.0 556.5C250.5 555.9 253.5 556.5 257.8 555.3C262.1 554.1 267.0 550.8 271.7 549.2C276.3 547.6 281.4 547.6 285.6 545.9C289.7 544.2 293.0 540.6 296.5 539.0C300.0 537.4 303.4 538.2 306.7 536.5C309.9 534.8 314.4 530.2 315.9 528.9M782.2 392.4C784.6 392.5 792.3 392.2 796.5 393.2C800.7 394.3 804.1 397.4 807.2 398.4C810.3 399.5 811.9 398.1 815.3 399.4C818.7 400.7 823.9 403.3 827.7 406.2C831.4 409.2 835.1 413.7 837.8 417.2C840.5 420.7 841.5 424.6 843.9 427.4C846.3 430.3 850.0 431.4 852.0 434.3C854.1 437.3 854.5 441.1 856.2 445.0C857.9 448.8 861.2 455.2 862.3 457.3M552.1 562.5C553.4 563.4 556.4 566.8 559.5 567.9C562.7 569.0 567.5 569.3 571.1 569.1C574.8 568.8 578.6 568.4 581.4 566.2C584.2 564.1 585.3 558.8 587.9 556.4C590.6 554.0 595.0 554.3 597.3 551.9C599.5 549.4 601.0 543.5 601.7 541.9M775.6 505.4C774.1 505.0 769.4 504.2 766.5 502.6C763.7 501.0 760.5 498.7 758.6 495.9C756.7 493.0 756.4 488.7 755.2 485.6C754.0 482.5 753.9 479.6 751.5 477.1C749.1 474.7 744.2 472.4 741.0 470.7C737.9 468.9 733.9 467.4 732.5 466.7M607.1 469.5C609.2 468.2 615.6 462.6 619.9 461.5C624.3 460.4 629.8 461.4 633.4 462.9C637.0 464.3 639.2 467.5 641.5 470.3C643.9 473.0 645.1 477.0 647.5 479.5C649.9 481.9 653.0 482.9 655.9 485.0C658.8 487.1 661.6 490.9 665.0 492.1C668.4 493.2 672.6 491.7 676.1 492.0C679.7 492.4 683.3 494.6 686.5 494.3C689.6 494.0 693.7 490.9 695.1 490.2M328.3 242.1C328.3 240.4 329.3 234.9 328.7 231.9C328.0 228.9 326.7 226.4 324.4 223.9C322.0 221.5 318.5 219.6 314.5 217.3C310.6 215.1 303.6 213.2 300.5 210.5C297.5 207.7 296.5 204.6 296.1 200.7C295.8 196.9 298.0 191.3 298.2 187.3C298.5 183.3 297.6 178.4 297.5 176.6M772.4 486.2C770.9 485.5 766.4 483.6 763.2 481.9C759.9 480.3 757.1 477.4 753.1 476.2C749.1 474.9 744.0 474.2 739.2 474.2C734.4 474.3 729.2 475.5 724.5 476.4C719.8 477.4 714.5 478.8 710.9 479.9C707.3 481.0 705.7 481.6 702.7 483.1C699.8 484.7 694.7 488.1 693.1 489.1M306.3 323.5C304.2 322.8 297.4 320.9 293.7 319.5C289.9 318.1 286.7 316.9 283.7 314.9C280.6 312.9 278.3 309.6 275.4 307.5C272.4 305.4 269.7 304.7 266.0 302.4C262.4 300.0 256.4 296.3 253.2 293.3C250.1 290.2 248.1 285.5 247.1 283.9M942.7 266.0C945.1 266.9 953.1 270.3 957.5 271.2C961.8 272.1 965.4 272.6 968.9 271.5C972.4 270.4 975.5 267.6 978.4 264.8C981.2 262.1 983.4 257.1 986.0 255.0C988.6 252.9 990.7 253.0 994.2 252.2C997.6 251.4 1003.2 251.5 1006.8 250.4C1010.5 249.2 1013.9 247.5 1016.3 245.3C1018.7 243.2 1020.5 238.9 1021.3 237.7M583.1 200.6C583.4 198.9 584.4 193.9 585.1 190.4C585.8 186.9 585.9 183.3 587.2 179.6C588.6 175.8 592.3 171.7 593.1 167.9C593.9 164.2 592.3 160.3 592.2 157.0C592.2 153.7 593.1 151.2 592.9 148.4C592.7 145.6 591.6 143.6 591.0 140.3C590.4 136.9 589.4 130.1 589.0 128.1M764.4 506.2C765.4 504.9 767.9 500.6 770.5 498.2C773.0 495.8 776.5 492.9 779.7 491.9C783.0 490.8 786.4 491.1 790.0 491.6C793.7 492.2 798.0 494.9 801.7 495.2C805.4 495.5 810.4 493.7 812.2 493.4M835.2 229.0C835.7 231.0 838.6 237.6 838.6 241.2C838.5 244.9 836.7 247.1 834.8 250.8C833.0 254.6 828.5 259.1 827.4 263.5C826.3 268.0 827.2 273.5 828.1 277.5C828.9 281.5 832.3 284.5 832.4 287.6C832.5 290.7 830.5 292.4 828.8 296.0C827.1 299.6 823.5 307.0 822.4 309.2M383.4 288.8C381.4 288.0 375.3 285.7 371.8 284.2C368.3 282.7 366.4 280.1 362.4 279.6C358.4 279.2 352.0 282.0 347.9 281.5C343.9 281.0 339.6 277.6 337.9 276.8M554.7 563.1C555.8 564.4 559.2 568.3 561.0 571.3C562.9 574.3 565.1 577.2 565.9 581.3C566.7 585.5 566.5 592.4 566.0 596.2C565.5 600.0 563.9 601.4 563.0 604.2C562.0 607.1 562.1 610.2 560.6 613.5C559.0 616.9 556.5 621.9 553.9 624.2C551.4 626.5 548.1 626.3 545.2 627.4C542.2 628.4 537.6 630.1 536.1 630.6M243.1 364.5C241.7 364.9 237.7 366.2 234.9 367.4C232.1 368.5 229.4 369.5 226.3 371.4C223.2 373.3 218.5 375.6 216.4 378.7C214.3 381.7 214.7 385.8 213.7 389.8C212.6 393.7 210.6 398.2 210.1 402.4C209.5 406.7 209.3 411.5 210.4 415.3C211.6 419.1 215.0 421.6 216.9 425.2C218.9 428.8 220.7 433.0 222.2 437.1C223.8 441.1 225.7 447.5 226.3 449.5M855.4 360.8C853.8 359.8 849.1 356.5 845.6 354.8C842.1 353.1 838.4 351.8 834.4 350.5C830.4 349.2 825.7 347.0 821.8 347.2C817.9 347.4 814.0 349.6 811.0 351.6C807.9 353.7 805.3 356.0 803.6 359.4C801.9 362.8 801.2 369.8 800.8 371.9M328.2 546.4C326.3 547.4 319.4 549.4 316.8 552.4C314.1 555.4 313.1 559.7 312.2 564.1C311.3 568.6 311.8 574.3 311.3 579.2C310.9 584.1 309.9 591.4 309.6 593.8M772.3 275.3C774.6 275.5 782.4 276.7 786.3 277.0C790.2 277.2 791.9 277.7 795.7 276.6C799.5 275.5 805.4 273.2 808.8 270.5C812.2 267.8 813.1 263.4 815.8 260.4C818.5 257.4 821.4 254.2 825.0 252.6C828.6 251.0 833.1 250.8 837.2 250.8C841.4 250.9 845.7 253.0 850.0 252.9C854.2 252.8 859.1 251.0 862.6 250.1C866.2 249.2 869.8 247.9 871.3 247.4M629.9 285.7C630.1 288.2 629.6 297.0 631.5 301.0C633.5 305.1 638.7 306.7 641.5 310.1C644.4 313.4 645.5 318.6 648.7 321.1C651.9 323.7 657.0 324.7 660.6 325.2C664.2 325.7 666.5 323.3 670.3 323.9C674.1 324.6 679.0 328.6 683.4 328.9C687.8 329.1 694.5 326.2 696.7 325.6M382.9 346.5C384.4 346.9 387.6 348.2 391.6 349.0C395.6 349.8 403.1 349.7 406.9 351.6C410.8 353.4 412.1 356.6 414.6 360.1C417.1 363.7 419.6 369.5 422.0 372.9C424.4 376.3 427.5 377.8 428.9 380.5C430.4 383.1 430.2 387.2 430.5 388.6M536.4 150.6C537.1 148.3 538.8 139.9 540.5 136.4C542.1 132.8 544.1 132.6 546.5 129.4C548.9 126.2 553.3 121.8 555.1 117.3C556.9 112.7 555.9 106.4 557.3 101.9C558.8 97.4 562.8 92.2 563.8 90.3M326.3 383.9C326.0 382.5 326.3 377.9 324.4 375.4C322.6 372.9 317.6 372.0 315.0 369.1C312.4 366.3 310.3 362.4 308.8 358.5C307.3 354.5 307.1 350.0 306.2 345.5C305.3 341.0 305.7 335.0 303.5 331.5C301.4 327.9 296.6 325.5 293.1 324.3C289.6 323.2 285.8 325.1 282.4 324.5C279.0 323.9 274.2 321.4 272.6 320.8M372.5 155.0C370.6 154.0 364.5 150.4 361.3 149.1C358.1 147.9 356.4 147.2 353.4 147.5C350.3 147.8 345.9 151.2 342.8 151.0C339.6 150.8 337.3 147.1 334.4 146.3C331.6 145.5 328.7 146.5 325.6 146.3C322.6 146.1 319.7 145.5 315.9 144.9C312.1 144.2 307.6 143.0 302.9 142.6C298.2 142.3 292.5 143.1 287.8 142.9C283.1 142.7 276.9 141.8 274.7 141.6M347.4 344.4C345.9 342.8 341.1 338.4 338.5 335.2C335.9 331.9 334.5 327.2 331.6 324.8C328.7 322.5 324.7 321.1 321.0 321.0C317.3 321.0 313.5 322.7 309.5 324.4C305.6 326.1 299.7 328.8 297.2 331.2C294.7 333.7 294.8 337.7 294.4 339.0M742.8 523.7C744.0 521.9 747.2 516.7 750.0 513.2C752.8 509.6 757.1 506.0 759.7 502.6C762.2 499.2 763.5 496.0 765.4 492.6C767.4 489.2 770.2 484.0 771.1 482.3M391.9 218.2C390.0 218.8 383.7 219.9 380.4 222.1C377.1 224.3 374.7 229.6 372.0 231.5C369.3 233.4 368.0 233.2 364.2 233.5C360.3 233.9 353.3 234.0 348.7 233.5C344.2 232.9 340.9 231.1 336.8 230.2C332.8 229.3 328.8 228.5 324.4 228.2C320.0 227.9 314.5 228.2 310.5 228.4C306.5 228.5 304.4 229.3 300.5 229.0C296.5 228.7 289.0 227.0 286.7 226.6M570.2 237.2C568.4 238.2 562.0 240.8 559.0 243.2C556.1 245.6 555.5 249.0 552.4 251.7C549.4 254.3 544.1 256.5 540.9 259.3C537.7 262.1 534.4 266.9 533.1 268.5M496.0 502.2C494.8 503.6 490.4 507.9 489.0 511.0C487.6 514.0 488.5 516.7 487.7 520.4C486.8 524.2 484.0 529.6 484.0 533.7C484.0 537.8 486.3 541.5 487.8 545.1C489.2 548.7 490.6 552.3 492.9 555.5C495.2 558.6 498.6 561.3 501.4 564.1C504.1 566.8 508.1 570.8 509.5 572.2M878.8 494.1C878.0 492.8 876.4 488.8 874.3 485.9C872.3 482.9 869.0 479.5 866.5 476.7C864.1 473.9 861.1 472.8 859.7 469.3C858.3 465.9 858.3 460.4 858.1 456.0C857.8 451.6 858.1 445.1 858.1 443.0M597.9 162.5C596.9 161.0 592.7 156.4 591.7 153.5C590.7 150.6 591.1 147.6 592.1 144.8C593.1 142.0 595.1 139.0 597.5 136.7C600.0 134.4 603.7 132.9 606.7 131.0C609.6 129.2 612.0 127.4 615.2 125.5C618.4 123.6 622.6 121.8 625.9 119.6C629.1 117.4 630.9 113.1 634.8 112.0C638.6 110.9 646.4 112.8 648.8 113.0M267.7 257.6C268.5 259.0 270.9 262.8 272.4 266.0C274.0 269.3 275.0 273.8 277.1 277.0C279.2 280.3 282.2 282.5 284.8 285.7C287.4 288.9 290.5 292.8 292.7 296.0C295.0 299.1 297.5 303.2 298.5 304.6M281.0 331.4C280.9 329.3 280.9 322.7 280.1 318.7C279.3 314.6 279.3 309.9 276.4 307.2C273.6 304.4 267.2 303.0 263.2 302.1C259.2 301.3 256.3 301.5 252.6 301.9C248.8 302.3 244.1 303.2 240.6 304.5C237.0 305.9 234.8 308.8 231.3 309.9C227.9 311.0 223.3 310.6 219.9 311.0C216.5 311.3 214.3 312.4 211.0 311.9C207.6 311.3 201.8 308.4 200.0 307.7M599.2 513.9C597.1 515.1 590.6 518.8 587.1 521.4C583.5 524.0 579.6 526.6 577.9 529.7C576.1 532.8 576.4 536.2 576.7 540.1C576.9 543.9 577.5 548.8 579.5 553.0C581.4 557.2 585.4 562.3 588.3 565.1C591.3 567.9 595.7 569.0 597.2 569.8M379.8 293.3C381.4 292.5 385.8 289.9 389.3 288.8C392.8 287.6 396.3 286.2 400.8 286.3C405.3 286.4 412.2 288.0 416.3 289.5C420.4 291.0 423.4 293.1 425.2 295.5C427.1 297.9 427.5 300.3 427.5 303.9C427.5 307.4 425.1 312.7 425.4 316.9C425.8 321.1 427.2 326.0 429.7 329.2C432.2 332.4 438.7 335.0 440.5 336.2M374.7 453.1C374.1 450.6 371.5 442.8 371.4 438.2C371.3 433.5 374.7 429.1 374.0 425.3C373.3 421.4 368.9 418.8 367.4 415.1C365.9 411.4 366.2 407.2 365.2 403.2C364.2 399.2 361.6 395.1 361.3 391.0C361.1 386.8 364.3 382.4 363.9 378.3C363.5 374.3 361.3 370.0 359.2 366.7C357.1 363.4 352.6 359.7 351.3 358.4M891.1 380.3C889.7 381.7 884.1 384.9 882.6 388.6C881.1 392.3 882.5 397.6 882.0 402.5C881.6 407.3 880.6 413.9 880.1 417.9C879.7 421.9 879.3 423.4 879.4 426.7C879.6 430.0 881.9 434.0 881.2 437.5C880.4 441.0 876.0 446.1 874.9 447.8M706.9 408.8C705.3 407.1 699.8 402.8 697.1 398.7C694.4 394.6 693.7 387.9 690.7 384.2C687.7 380.6 682.2 379.2 679.2 376.7C676.2 374.2 674.0 373.0 672.6 369.1C671.3 365.3 670.4 358.6 670.9 353.6C671.3 348.6 672.6 342.4 675.2 339.2C677.8 335.9 684.6 335.1 686.5 334.3M717.9 201.0C715.8 201.5 709.4 203.0 705.6 204.1C701.7 205.3 698.5 207.2 695.0 207.9C691.5 208.7 688.3 208.8 684.5 208.7C680.6 208.6 675.6 208.7 671.8 207.4C668.1 206.2 663.5 202.3 661.9 201.3M263.0 387.7C262.7 389.3 261.7 394.0 261.3 397.1C260.8 400.2 260.3 402.9 260.4 406.4C260.5 410.0 261.6 414.9 262.0 418.2C262.5 421.5 262.9 423.1 263.2 426.2C263.5 429.3 263.7 433.2 263.7 436.8C263.6 440.3 263.8 444.1 262.8 447.6C261.9 451.0 259.7 454.0 258.0 457.4C256.3 460.8 253.7 466.0 252.8 467.8M560.3 323.3C562.3 324.4 568.4 328.5 572.1 329.7C575.8 330.9 578.6 330.9 582.5 330.5C586.5 330.2 591.9 328.0 596.0 327.5C600.1 326.9 603.2 326.5 607.2 327.3C611.2 328.1 616.1 332.0 619.9 332.3C623.6 332.6 625.9 330.7 629.6 329.2C633.3 327.7 637.3 324.5 641.9 323.5C646.6 322.4 652.8 323.5 657.3 322.7C661.9 322.0 667.1 319.8 669.0 319.2M822.1 309.1C821.8 311.3 820.2 318.8 820.1 322.7C820.0 326.6 819.9 329.0 821.7 332.7C823.5 336.4 828.9 340.6 831.1 345.0C833.3 349.3 833.3 354.4 834.9 358.8C836.5 363.3 838.9 368.0 840.8 371.8C842.6 375.5 844.4 378.0 845.9 381.3C847.3 384.5 846.8 388.4 849.5 391.3C852.2 394.2 859.9 397.5 861.9 398.7M484.7 490.7C484.2 492.7 482.6 498.7 481.6 502.7C480.7 506.7 479.2 510.1 479.1 514.6C478.9 519.1 480.9 525.6 480.7 529.6C480.6 533.6 479.9 535.4 478.1 538.8C476.3 542.2 471.9 546.0 470.1 549.9C468.4 553.7 468.1 557.9 467.6 561.9C467.2 565.8 468.1 568.9 467.6 573.5C467.1 578.0 464.5 583.9 464.7 589.0C464.9 594.0 468.1 601.2 468.8 603.7M704.5 399.3C706.8 398.7 714.5 395.7 718.5 395.7C722.5 395.7 725.6 397.1 728.4 399.2C731.3 401.4 731.8 406.6 735.6 408.7C739.3 410.7 748.5 411.1 751.1 411.6M716.1 262.3C715.1 264.4 710.7 271.6 710.1 275.0C709.4 278.5 711.7 280.3 712.2 283.0C712.6 285.8 712.3 287.9 712.8 291.5C713.3 295.0 713.9 300.5 715.3 304.3C716.7 308.1 720.5 311.1 721.2 314.2C722.0 317.3 721.0 320.1 719.7 322.7C718.5 325.3 716.0 327.8 713.6 329.8C711.2 331.7 708.9 333.9 705.4 334.6C701.9 335.2 694.9 333.6 692.8 333.4M779.7 505.0C778.5 503.8 775.7 499.6 772.6 497.6C769.6 495.7 765.1 495.0 761.5 493.4C757.9 491.8 754.6 489.5 751.0 488.0C747.4 486.4 743.7 485.2 740.0 484.2C736.2 483.1 732.1 481.7 728.5 481.7C724.9 481.7 722.2 484.4 718.2 484.4C714.3 484.4 708.3 481.5 704.7 481.7C701.1 481.8 700.3 484.6 696.4 485.3C692.6 485.9 684.1 485.4 681.7 485.5M352.1 446.4C353.5 447.1 357.7 448.5 360.4 450.7C363.1 453.0 364.6 458.3 368.5 459.9C372.3 461.6 379.3 459.7 383.4 460.5C387.5 461.3 389.2 463.8 393.0 464.5C396.7 465.3 401.7 466.0 406.0 464.8C410.2 463.6 413.9 458.7 418.4 457.5C422.9 456.2 430.7 457.3 433.1 457.3M867.1 450.0C866.1 448.4 863.1 443.6 861.2 440.5C859.3 437.3 856.8 434.8 855.7 431.2C854.5 427.5 855.8 422.6 854.4 418.4C852.9 414.1 849.1 409.5 847.1 405.8C845.2 402.0 843.4 400.0 842.6 395.7C841.8 391.3 843.4 384.3 842.2 379.8C841.0 375.3 836.3 370.4 835.1 368.5M620.3 522.7C620.2 525.3 619.1 533.5 619.7 538.4C620.4 543.4 624.0 547.9 624.1 552.3C624.2 556.8 621.0 561.5 620.3 565.2C619.5 568.8 619.8 572.5 619.7 574.0M873.4 404.7C874.8 404.9 879.0 407.0 881.9 406.0C884.7 405.1 887.1 399.9 890.7 399.1C894.3 398.3 899.6 399.9 903.6 401.4C907.6 402.8 911.5 406.1 914.9 407.7C918.3 409.2 920.0 410.6 923.8 410.8C927.6 411.1 935.3 409.4 937.6 409.2M646.6 385.0C645.4 383.7 642.4 379.4 639.7 377.3C636.9 375.2 632.9 373.9 629.9 372.1C627.0 370.4 624.9 368.8 621.9 366.8C619.0 364.8 615.5 362.0 612.3 360.2C609.2 358.3 604.6 356.4 603.1 355.7M508.2 560.3C507.4 558.8 504.5 555.6 503.7 551.6C502.9 547.5 504.4 540.6 503.3 536.1C502.2 531.5 499.9 527.5 497.1 524.2C494.2 521.0 489.8 518.7 486.3 516.4C482.9 514.0 478.8 513.4 476.4 510.1C474.0 506.9 472.7 499.0 471.9 496.8M441.1 456.0C439.7 455.1 436.1 451.6 432.9 450.1C429.7 448.6 426.4 447.3 421.9 446.9C417.4 446.4 410.7 447.4 405.9 447.4C401.1 447.4 397.0 448.1 393.0 446.8C389.1 445.5 386.0 440.9 382.3 439.4C378.7 438.0 374.9 439.8 371.0 438.1C367.0 436.5 362.2 432.0 358.7 429.6C355.3 427.2 352.8 425.9 350.3 423.7C347.9 421.5 345.1 417.6 344.0 416.4M504.5 495.6C505.9 495.0 509.5 492.3 512.7 491.9C515.9 491.6 519.8 493.6 523.8 493.5C527.9 493.3 532.7 492.1 536.9 490.9C541.1 489.7 544.4 487.5 549.0 486.1C553.5 484.7 559.4 483.4 564.1 482.7C568.8 482.0 572.7 481.9 577.1 482.0C581.4 482.2 588.0 483.5 590.2 483.7M580.6 473.2C580.5 475.7 581.2 484.3 580.4 488.2C579.5 492.0 577.1 493.1 575.6 496.2C574.0 499.4 572.3 504.1 571.2 507.2C570.0 510.3 569.4 511.8 568.5 515.1C567.6 518.5 566.9 523.6 565.8 527.4C564.7 531.2 563.0 533.9 561.8 537.9C560.6 542.0 559.1 547.1 558.4 551.6C557.8 556.2 557.6 561.5 558.0 565.1C558.4 568.8 560.5 572.0 560.9 573.3M383.8 182.3C384.3 183.8 386.9 187.1 387.3 191.1C387.7 195.1 387.3 202.1 386.2 206.1C385.0 210.2 381.3 211.8 380.4 215.2C379.4 218.6 380.0 223.2 380.4 226.7C380.7 230.2 382.5 232.7 382.4 236.3C382.3 239.9 381.1 244.4 379.7 248.2C378.3 251.9 375.6 254.8 374.1 258.8C372.7 262.9 373.2 269.3 371.0 272.6C368.9 276.0 362.9 277.9 361.3 278.9M894.6 236.7C895.0 238.8 896.9 245.2 897.1 248.8C897.2 252.4 896.2 254.2 895.4 258.3C894.6 262.3 892.6 269.0 892.2 273.0C891.8 277.0 893.3 279.2 893.1 282.4C892.8 285.6 891.0 288.0 890.7 292.3C890.4 296.6 890.5 303.9 891.0 308.3C891.5 312.7 892.9 314.5 893.5 318.8C894.2 323.0 893.5 329.6 894.8 333.9C896.2 338.2 900.4 342.9 901.5 344.7M735.0 262.0C736.7 261.5 741.6 259.1 745.0 259.0C748.4 258.9 752.6 259.1 755.5 261.3C758.5 263.4 760.4 269.1 762.8 272.0C765.1 275.0 768.0 275.4 769.8 278.9C771.6 282.4 773.1 290.6 773.8 293.0M441.8 535.7C442.3 537.4 445.4 542.5 444.9 546.0C444.5 549.5 441.7 553.6 439.0 556.8C436.3 559.9 432.4 562.8 428.6 565.0C424.8 567.2 419.7 569.4 416.2 569.9C412.6 570.4 410.9 569.3 407.3 567.9C403.7 566.5 398.2 563.5 394.7 561.6C391.2 559.6 387.5 557.1 386.0 556.2M370.6 321.7C369.5 319.7 365.2 313.4 364.2 309.9C363.2 306.3 364.5 303.9 364.6 300.6C364.8 297.3 365.1 293.6 365.0 290.0C364.9 286.3 364.2 280.7 364.1 278.8M222.9 507.5C221.5 506.1 217.4 501.2 214.5 499.3C211.5 497.4 208.4 496.3 205.3 496.2C202.2 496.1 199.2 497.6 195.7 498.7C192.3 499.8 188.7 502.9 184.6 503.0C180.6 503.1 175.6 500.2 171.5 499.4C167.3 498.6 161.5 498.3 159.5 498.1M473.6 241.4C472.8 243.4 470.8 249.4 468.8 253.3C466.8 257.2 464.4 261.7 461.5 265.0C458.7 268.3 454.3 270.4 451.9 273.0C449.5 275.7 449.2 278.3 447.1 280.8C445.0 283.3 441.8 285.9 439.2 288.2C436.5 290.6 433.7 291.7 431.4 294.7C429.1 297.8 426.6 302.7 425.3 306.4C424.0 310.0 424.0 313.2 423.4 316.6C422.8 320.0 422.0 325.1 421.7 326.9M481.4 269.1C482.4 270.9 485.7 277.0 487.0 280.1C488.4 283.2 488.7 284.9 489.6 287.8C490.4 290.8 491.7 293.9 492.4 297.8C493.1 301.8 493.1 306.9 493.9 311.3C494.7 315.8 496.1 320.4 496.9 324.5C497.8 328.6 497.5 332.7 499.2 335.7C501.0 338.8 505.0 340.0 507.6 342.7C510.2 345.3 511.5 349.2 514.6 351.6C517.8 354.0 524.4 356.3 526.3 357.2M923.8 452.7C925.2 453.1 928.3 454.9 932.3 455.1C936.4 455.2 943.6 455.0 948.1 453.7C952.6 452.5 956.4 451.0 959.3 447.6C962.2 444.3 964.4 436.0 965.5 433.7M801.1 423.7C802.7 422.4 807.3 416.9 810.9 415.8C814.5 414.6 819.1 416.1 822.8 416.8C826.4 417.5 829.1 418.6 832.8 420.0C836.6 421.4 841.5 423.0 845.4 425.1C849.3 427.3 852.7 431.0 856.2 433.1C859.6 435.1 863.1 434.7 866.1 437.3C869.1 440.0 871.9 445.1 874.4 449.0C876.9 452.9 880.2 458.7 881.3 460.6M556.8 185.1C559.2 185.1 566.7 185.3 570.8 185.2C574.8 185.0 578.1 186.1 581.1 184.3C584.0 182.6 586.9 178.6 588.6 174.6C590.3 170.7 590.5 165.0 591.3 160.6C592.0 156.1 591.9 152.2 592.9 148.0C593.9 143.8 597.3 139.0 597.4 135.2C597.5 131.4 594.4 129.1 593.6 125.1C592.9 121.0 593.5 115.1 592.8 111.1C592.1 107.1 590.1 102.6 589.5 100.9M835.2 484.1C834.7 485.6 834.7 490.7 832.2 493.1C829.6 495.6 824.3 497.3 819.7 498.7C815.1 500.0 809.0 501.2 804.8 501.3C800.6 501.5 798.2 500.1 794.5 499.6C790.9 499.1 786.9 499.1 782.8 498.3C778.8 497.6 773.6 494.9 770.1 494.8C766.5 494.7 763.1 497.2 761.7 497.7M957.5 469.8C959.3 468.1 964.6 461.8 968.4 459.4C972.2 457.0 977.4 457.8 980.4 455.5C983.4 453.1 984.3 448.6 986.5 445.3C988.7 442.0 992.0 439.4 993.5 435.7C995.1 431.9 995.5 427.3 995.9 422.9C996.2 418.5 995.5 414.0 995.7 409.4C995.8 404.9 995.2 399.7 996.7 395.8C998.3 391.9 1002.5 389.2 1005.0 386.0C1007.5 382.7 1010.7 377.9 1011.8 376.3M545.2 188.6C546.9 189.3 551.3 192.0 555.2 193.2C559.1 194.3 564.9 195.3 568.8 195.5C572.8 195.7 575.6 194.8 578.8 194.3C582.0 193.8 584.6 193.1 587.9 192.7C591.3 192.3 595.1 191.2 598.9 192.0C602.7 192.9 608.8 197.0 610.8 198.0M441.0 523.9C442.7 522.1 447.9 516.5 451.2 513.2C454.5 509.9 457.9 507.8 460.7 504.1C463.5 500.4 466.8 495.4 467.9 491.2C469.1 487.0 467.7 482.9 467.6 478.7C467.5 474.5 467.8 470.5 467.3 465.9C466.7 461.4 464.0 455.2 464.2 451.5C464.4 447.7 466.0 445.6 468.2 443.3C470.4 441.0 475.9 438.8 477.5 437.8M377.5 354.0C378.3 352.7 382.1 349.0 382.5 346.2C383.0 343.3 380.3 340.5 380.0 336.8C379.7 333.1 380.3 328.7 380.7 324.2C381.1 319.6 381.9 314.1 382.3 309.5C382.7 304.8 383.1 301.0 383.1 296.2C383.1 291.4 382.5 283.2 382.4 280.6M775.1 384.6C773.9 383.6 770.5 380.4 768.1 378.5C765.8 376.7 763.0 375.7 760.9 373.4C758.8 371.1 757.2 367.9 755.4 364.5C753.7 361.0 752.9 356.1 750.5 352.7C748.1 349.3 744.6 346.9 741.2 343.9C737.7 340.9 733.5 337.5 729.9 334.6C726.3 331.6 723.3 328.5 719.5 326.4C715.8 324.2 709.5 322.4 707.4 321.6M872.4 253.1C874.6 253.6 881.1 256.2 885.2 256.1C889.3 256.0 892.6 252.6 897.0 252.6C901.4 252.5 906.5 254.8 911.4 255.8C916.3 256.8 922.4 258.7 926.4 258.6C930.5 258.4 932.0 256.6 935.5 254.8C939.0 253.0 945.4 248.7 947.4 247.5M817.2 167.2C817.0 164.7 815.8 157.2 815.7 152.7C815.6 148.2 817.2 144.7 816.5 140.4C815.9 136.0 813.8 130.9 811.7 126.7C809.6 122.6 806.3 119.1 803.9 115.5C801.6 111.8 798.6 106.7 797.5 104.9M593.3 183.2C594.7 184.6 600.3 188.8 601.7 191.6C603.2 194.4 601.8 196.8 602.1 199.8C602.3 202.8 603.2 205.7 603.2 209.6C603.2 213.4 603.3 219.0 601.9 222.9C600.6 226.7 596.1 231.1 594.9 232.8M760.2 498.8C762.4 498.6 768.8 498.2 773.6 497.4C778.4 496.7 784.9 495.3 788.8 494.1C792.8 492.9 794.2 490.9 797.1 490.0C800.1 489.2 802.9 490.2 806.5 489.3C810.2 488.3 815.5 486.6 819.1 484.3C822.7 482.0 826.6 476.9 828.1 475.5M415.5 378.8C414.1 377.7 410.5 374.5 407.1 372.1C403.8 369.7 398.5 366.8 395.4 364.3C392.3 361.9 390.9 359.0 388.3 357.3C385.7 355.7 383.0 354.6 379.9 354.3C376.7 354.0 373.3 355.2 369.2 355.5C365.1 355.8 357.7 355.9 355.4 356.0M384.5 463.5C383.0 462.2 379.5 457.6 375.5 455.9C371.5 454.2 365.5 454.6 360.6 453.3C355.8 452.0 350.6 449.3 346.7 448.1C342.8 447.0 340.7 446.3 337.4 446.5C334.1 446.6 328.8 448.7 327.0 449.2M245.3 535.9C246.1 534.0 247.9 527.8 250.0 524.5C252.0 521.3 254.4 518.7 257.5 516.2C260.7 513.7 266.6 513.0 268.9 509.3C271.1 505.7 271.2 498.4 270.9 494.5C270.7 490.6 269.3 488.5 267.5 485.8C265.7 483.1 262.7 481.2 260.2 478.5C257.7 475.8 254.5 472.8 252.5 469.7C250.5 466.6 248.9 461.5 248.2 459.9M781.8 474.9C779.8 474.5 773.9 472.7 769.6 472.3C765.4 472.0 760.9 472.6 756.3 472.8C751.8 473.0 746.0 474.2 742.2 473.7C738.4 473.2 736.8 471.2 733.5 470.0C730.2 468.8 726.3 467.5 722.5 466.5C718.7 465.5 715.0 463.9 710.7 463.8C706.5 463.7 701.6 466.5 697.0 465.9C692.4 465.2 685.3 460.7 682.9 459.6M365.7 401.6C366.9 402.8 370.0 406.7 372.6 409.0C375.2 411.3 377.7 413.5 381.4 415.5C385.0 417.4 391.3 418.2 394.5 420.9C397.7 423.7 399.1 428.3 400.8 432.0C402.5 435.6 402.4 439.3 404.6 442.7C406.8 446.2 410.5 450.2 413.8 452.7C417.1 455.3 422.6 457.1 424.4 457.9M798.9 536.3C800.8 535.2 807.2 532.2 810.7 529.8C814.2 527.5 816.2 523.8 819.8 522.1C823.5 520.4 828.9 519.8 832.6 519.6C836.3 519.4 840.5 520.8 842.1 521.0M505.1 170.0C505.6 167.8 506.2 160.3 508.4 156.8C510.6 153.2 515.7 151.4 518.1 148.8C520.6 146.2 520.6 143.2 523.1 141.2C525.6 139.1 529.7 137.6 533.2 136.5C536.6 135.3 540.0 135.2 544.0 134.4C547.9 133.6 552.3 132.7 556.8 131.7C561.2 130.7 566.1 130.0 570.6 128.2C575.1 126.5 579.9 123.4 583.9 121.4C587.9 119.3 592.9 116.8 594.8 115.8M901.0 466.6C899.0 465.6 891.3 463.4 888.6 460.9C885.8 458.3 885.9 455.2 884.4 451.4C882.8 447.7 880.8 443.0 879.5 438.5C878.2 434.0 877.8 428.3 876.4 424.3C874.9 420.3 872.9 417.8 870.9 414.3C868.8 410.8 866.9 406.5 864.1 403.4C861.4 400.2 856.9 398.5 854.4 395.5C851.9 392.5 849.9 387.1 849.0 385.4M628.8 348.2C629.9 346.0 632.7 338.5 635.1 335.3C637.4 332.2 639.9 330.4 643.1 329.4C646.3 328.4 651.2 330.4 654.4 329.2C657.5 328.0 660.7 323.3 662.0 322.1M931.7 295.5C931.2 294.0 928.8 290.8 928.3 286.8C927.7 282.9 927.8 276.2 928.2 271.6C928.6 267.1 929.9 262.9 930.5 259.5C931.2 256.1 930.6 253.6 931.9 251.1C933.3 248.7 935.6 246.4 938.7 244.9C941.9 243.5 946.7 242.3 950.8 242.5C955.0 242.8 961.5 245.8 963.6 246.4M426.0 432.2C424.3 431.1 419.8 428.3 416.2 425.5C412.7 422.7 408.4 418.0 404.5 415.4C400.5 412.8 396.0 412.0 392.5 410.0C389.0 408.0 385.7 406.1 383.3 403.6C380.9 401.1 378.9 396.4 378.0 394.9M729.6 241.4C730.8 242.1 734.1 245.2 737.0 245.8C739.9 246.5 743.8 246.4 746.9 245.3C750.0 244.1 753.2 242.3 755.7 239.0C758.1 235.7 758.8 228.7 761.7 225.4C764.7 222.1 771.3 220.3 773.2 219.3M707.3 253.6C708.4 252.1 710.7 247.4 713.5 244.5C716.3 241.7 721.4 239.3 724.1 236.5C726.8 233.6 728.6 230.6 729.9 227.5C731.2 224.3 732.2 221.5 731.7 217.6C731.2 213.8 728.0 209.2 726.7 204.5C725.3 199.9 724.9 194.6 723.5 189.7C722.1 184.9 719.2 177.9 718.4 175.5M659.0 517.0C659.2 518.5 659.3 522.9 660.3 526.3C661.2 529.7 664.4 534.0 664.8 537.6C665.2 541.1 662.8 543.3 662.7 547.3C662.6 551.3 663.4 557.1 664.3 561.5C665.1 566.0 666.2 570.0 667.8 574.2C669.3 578.4 672.9 582.7 673.8 586.7C674.7 590.6 673.2 593.4 673.1 597.8C673.1 602.3 673.5 609.3 673.3 613.4C673.2 617.4 672.5 620.5 672.4 621.9M854.1 412.3C851.6 412.1 843.2 411.7 838.7 411.2C834.2 410.8 830.6 409.9 827.3 409.5C824.1 409.1 822.6 409.2 819.2 408.9C815.7 408.5 810.1 408.2 806.4 407.6C802.8 407.0 798.8 405.5 797.3 405.1M304.1 489.3C304.3 487.4 304.7 481.7 305.3 477.5C305.9 473.4 306.9 469.1 307.7 464.4C308.4 459.7 309.4 453.4 309.6 449.4C309.7 445.3 308.5 443.3 308.3 440.0C308.1 436.7 308.7 433.3 308.3 429.5C307.8 425.8 306.1 421.2 305.6 417.5C305.0 413.9 304.5 410.7 305.1 407.6C305.8 404.5 308.6 400.4 309.3 398.9M951.0 458.2C950.2 456.8 948.4 452.2 946.4 449.8C944.3 447.4 941.8 445.3 938.6 443.8C935.3 442.3 930.3 441.8 927.0 440.9C923.6 440.0 921.9 438.3 918.4 438.4C914.8 438.5 908.6 439.7 905.6 441.3C902.5 442.9 901.0 446.9 900.1 448.0M348.0 327.8C347.6 330.2 346.0 338.2 345.5 342.2C345.1 346.2 346.2 348.6 345.3 351.9C344.5 355.1 342.4 359.1 340.5 361.6C338.5 364.0 336.1 364.6 333.5 366.5C331.0 368.3 328.0 369.6 325.2 372.6C322.3 375.6 320.2 382.1 316.5 384.5C312.8 386.9 306.8 386.1 302.8 387.2C298.9 388.3 296.1 390.3 292.7 391.2C289.3 392.1 284.2 392.5 282.6 392.8M718.3 264.7C716.5 265.2 711.0 266.5 707.5 267.7C704.0 269.0 700.1 269.4 697.4 272.1C694.6 274.8 693.1 279.7 691.2 283.8C689.4 288.0 688.4 293.5 686.4 297.0C684.4 300.5 681.9 303.1 679.1 304.9C676.3 306.8 672.5 306.1 669.6 308.1C666.7 310.1 663.0 315.5 661.7 316.9M426.5 443.3C426.1 445.4 425.3 451.6 424.2 455.6C423.1 459.5 421.3 463.7 419.9 467.0C418.5 470.3 417.9 472.4 416.0 475.4C414.0 478.5 411.4 482.7 408.5 485.1C405.5 487.4 401.3 487.3 398.4 489.7C395.5 492.1 392.5 495.6 390.9 499.4C389.4 503.2 390.6 509.1 389.3 512.7C387.9 516.3 385.0 518.1 382.7 520.9C380.4 523.6 376.7 527.9 375.5 529.3M845.1 503.9C845.8 501.4 847.5 493.0 848.8 488.7C850.0 484.5 851.4 481.8 852.5 478.4C853.7 475.1 853.6 471.3 855.5 468.6C857.4 466.0 861.5 464.4 864.1 462.6C866.7 460.8 867.9 459.3 871.3 457.9C874.8 456.5 881.3 456.0 885.0 454.3C888.7 452.5 892.2 448.6 893.6 447.5M526.7 369.9C528.4 370.0 533.1 369.9 537.1 370.6C541.1 371.3 546.9 371.9 550.6 374.3C554.3 376.6 555.8 382.8 559.5 384.8C563.1 386.8 569.0 385.4 572.5 386.3C576.0 387.1 577.4 389.2 580.4 390.2C583.4 391.2 588.8 391.9 590.5 392.3M638.9 389.2C637.7 388.0 634.0 384.1 631.5 381.9C629.0 379.6 627.6 377.2 623.8 375.9C620.0 374.6 613.2 373.7 608.8 374.0C604.5 374.3 601.7 377.6 597.8 377.8C594.0 377.9 587.9 375.3 585.9 374.8M608.2 262.8C607.4 264.6 605.5 270.0 603.6 273.4C601.8 276.8 599.3 279.9 597.0 283.4C594.8 286.8 591.8 290.1 590.1 294.2C588.4 298.3 587.4 305.7 586.9 308.1M627.6 568.5C629.0 569.3 633.5 571.2 636.1 573.2C638.7 575.2 641.1 577.6 643.1 580.4C645.1 583.3 647.3 586.3 647.9 590.4C648.4 594.6 645.2 601.0 646.3 605.3C647.4 609.5 653.2 614.2 654.5 616.0M326.8 573.9C328.2 574.1 331.9 574.4 335.3 575.2C338.8 576.1 343.3 578.9 347.6 579.1C351.8 579.2 356.6 575.9 360.8 576.2C365.1 576.5 368.5 580.4 373.0 580.9C377.6 581.4 384.0 580.8 388.1 579.2C392.3 577.7 394.8 574.4 397.7 571.6C400.7 568.8 404.5 563.8 405.8 562.2M399.1 201.0C398.1 202.7 394.9 207.5 393.1 211.1C391.4 214.7 389.6 218.4 388.5 222.8C387.4 227.2 388.1 233.7 386.5 237.4C385.0 241.1 380.5 241.8 379.2 245.0C377.9 248.1 377.9 252.2 378.7 256.3C379.6 260.4 382.5 265.1 384.1 269.8C385.7 274.6 388.4 279.9 388.3 284.7C388.2 289.5 385.9 294.6 383.6 298.8C381.4 303.1 376.5 308.3 375.0 310.2M326.2 486.2C328.6 485.7 335.8 483.0 340.6 482.8C345.5 482.7 351.3 483.5 355.3 485.3C359.4 487.0 361.2 491.6 364.8 493.3C368.5 495.0 374.2 493.6 377.4 495.4C380.6 497.2 382.3 500.3 384.2 504.1C386.2 507.9 387.6 513.4 389.0 518.1C390.4 522.9 390.4 528.7 392.6 532.5C394.8 536.4 400.7 539.7 402.3 541.1M543.6 383.0C542.2 382.2 538.9 378.7 535.0 378.1C531.2 377.6 524.8 378.8 520.4 379.6C516.0 380.5 512.8 383.0 508.5 383.3C504.1 383.6 499.0 381.7 494.4 381.2C489.8 380.6 484.6 380.7 480.6 379.9C476.6 379.1 474.4 377.6 470.3 376.3C466.3 374.9 458.8 372.6 456.5 371.8M811.3 242.0C811.0 244.5 810.2 251.9 809.6 256.6C809.0 261.2 809.9 266.0 807.9 270.1C805.8 274.1 799.5 277.2 797.4 281.0C795.3 284.7 794.6 288.9 795.3 292.5C795.9 296.0 800.3 300.6 801.3 302.2M257.6 277.8C255.7 278.8 248.9 280.4 246.2 283.3C243.6 286.2 242.2 291.2 241.7 295.3C241.1 299.4 241.4 304.7 242.7 307.8C244.1 311.0 248.3 311.7 249.6 314.3C250.9 316.9 250.5 319.9 250.7 323.5C250.8 327.1 249.9 331.9 250.3 336.1C250.8 340.2 252.9 346.4 253.4 348.4M478.0 227.6C476.1 228.0 470.0 228.9 466.6 230.0C463.2 231.2 460.6 233.8 457.6 234.6C454.6 235.4 451.4 235.2 448.5 235.0C445.7 234.8 442.9 235.0 440.3 233.2C437.7 231.4 436.0 226.6 433.1 224.2C430.2 221.7 426.0 221.1 423.1 218.6C420.1 216.0 417.6 212.8 415.3 209.1C412.9 205.4 410.7 200.4 408.8 196.3C406.9 192.3 404.6 186.8 403.8 184.9M310.4 235.3C309.9 233.9 309.7 229.8 307.3 227.1C305.0 224.4 299.7 221.4 296.4 219.1C293.1 216.9 290.8 215.3 287.5 213.5C284.3 211.7 280.6 209.7 277.1 208.4C273.6 207.1 270.8 206.9 266.8 205.7C262.9 204.5 256.9 203.1 253.3 201.1C249.6 199.1 246.4 194.7 245.0 193.4M316.0 509.6C316.3 511.9 317.6 518.9 318.0 523.4C318.5 527.9 317.8 532.0 318.9 536.6C320.0 541.2 324.0 546.0 324.7 550.8C325.3 555.7 323.1 563.3 322.7 565.8M332.3 210.5C331.9 208.9 329.7 205.0 329.8 201.1C329.9 197.2 332.7 191.1 333.0 187.1C333.2 183.1 331.0 180.6 331.4 177.1C331.9 173.6 334.0 170.2 335.9 166.1C337.8 161.9 340.1 155.5 342.7 151.9C345.3 148.3 350.0 145.8 351.4 144.6M678.3 213.2C679.5 214.7 683.0 219.8 685.4 222.4C687.7 225.1 689.8 227.8 692.5 229.2C695.2 230.7 698.6 229.4 701.5 231.2C704.4 233.0 707.5 236.9 709.8 239.8C712.1 242.8 715.0 245.0 715.5 248.9C715.9 252.8 714.4 259.6 712.6 263.3C710.9 267.0 708.1 269.4 705.1 271.0C702.2 272.6 696.8 272.6 695.1 273.0M243.4 389.2C244.0 391.3 245.9 397.8 247.0 402.1C248.0 406.5 250.0 410.6 249.5 415.1C249.1 419.6 246.0 425.0 244.2 429.1C242.5 433.3 240.0 436.1 239.0 440.0C237.9 443.8 238.2 448.6 238.0 452.1C237.8 455.5 237.9 459.3 237.9 460.7M945.9 292.8C944.1 292.7 938.5 292.0 935.1 292.4C931.7 292.8 928.5 293.4 925.4 295.2C922.2 296.9 918.4 299.8 916.2 303.0C914.1 306.2 913.8 310.7 912.5 314.4C911.3 318.0 911.3 321.8 908.7 324.7C906.1 327.6 899.1 330.6 897.1 331.8M621.0 159.8C619.5 159.1 614.9 157.9 612.1 155.7C609.4 153.4 606.5 148.9 604.6 146.1C602.6 143.3 602.3 141.4 600.5 138.9C598.6 136.4 595.9 133.6 593.5 131.2C591.1 128.7 588.1 127.5 586.3 124.2C584.4 120.9 582.8 115.8 582.2 111.3C581.7 106.8 583.9 101.3 582.9 97.1C581.9 92.9 577.3 88.1 576.2 86.4M439.4 236.4C437.2 235.9 429.3 235.6 426.1 233.5C422.9 231.4 421.6 226.9 420.1 223.8C418.7 220.7 418.6 218.4 417.4 215.1C416.2 211.8 415.2 206.5 412.9 203.9C410.7 201.4 406.6 202.0 403.7 199.9C400.8 197.9 398.9 193.5 395.3 191.7C391.7 189.8 384.2 189.4 382.0 188.9M644.6 502.4C645.7 500.8 648.7 495.0 651.5 492.7C654.3 490.3 658.0 490.0 661.5 488.3C665.0 486.5 668.9 484.5 672.5 482.3C676.1 480.2 679.7 478.4 682.9 475.3C686.1 472.2 689.6 467.2 691.6 463.8C693.6 460.3 694.2 458.0 694.8 454.7C695.3 451.5 694.7 446.0 694.7 444.2M620.9 439.9C622.2 440.5 625.9 441.7 628.6 443.3C631.4 444.8 634.5 446.6 637.5 449.3C640.5 451.9 644.8 455.2 646.7 459.2C648.7 463.1 648.7 468.3 649.0 473.0C649.3 477.7 647.3 482.8 648.5 487.3C649.7 491.7 653.9 495.7 656.1 499.9C658.2 504.0 660.3 510.1 661.2 512.2M521.0 197.6C520.3 199.7 519.2 206.7 516.6 210.0C514.0 213.4 508.4 214.7 505.4 217.6C502.4 220.4 500.9 223.5 498.7 227.1C496.4 230.6 494.9 235.3 491.9 239.1C489.0 242.9 483.5 245.7 480.9 249.8C478.3 253.8 477.0 261.1 476.3 263.4M845.8 200.3C845.4 202.2 843.2 206.9 843.1 211.3C842.9 215.8 844.1 222.9 844.7 227.0C845.3 231.2 846.5 232.2 846.8 236.2C847.0 240.1 845.7 246.8 846.1 251.0C846.6 255.2 849.0 259.6 849.6 261.4M516.7 486.6C518.9 486.2 525.9 485.2 529.7 484.3C533.5 483.4 535.5 480.6 539.3 481.1C543.2 481.5 548.9 486.1 552.9 487.0C556.9 488.0 559.1 486.6 563.4 486.6C567.7 486.7 574.2 486.9 578.6 487.3C583.0 487.6 585.4 489.0 589.9 488.8C594.3 488.7 600.7 486.7 605.5 486.4C610.4 486.1 616.7 486.8 619.0 486.9M232.2 160.6C233.8 160.2 238.4 159.2 241.8 158.3C245.3 157.4 249.2 157.2 253.0 155.2C256.7 153.2 260.3 147.9 264.2 146.3C268.1 144.8 272.5 147.1 276.6 146.1C280.6 145.0 286.3 140.9 288.3 139.8M403.4 380.0C402.2 378.3 399.2 372.2 396.0 369.8C392.8 367.4 388.1 366.0 384.2 365.5C380.4 365.0 376.3 365.1 372.9 366.6C369.5 368.0 366.8 370.9 363.9 374.2C361.0 377.6 357.8 382.3 355.6 386.4C353.3 390.5 352.9 395.4 350.5 398.8C348.2 402.3 344.2 404.1 341.3 407.2C338.4 410.3 336.0 415.1 333.1 417.3C330.1 419.6 325.2 420.3 323.6 420.8M859.9 401.9C861.0 400.2 864.1 393.7 866.5 391.4C869.0 389.2 872.0 390.7 874.6 388.6C877.1 386.5 879.8 382.5 881.8 378.7C883.8 374.9 885.5 370.3 886.4 365.8C887.3 361.2 886.9 355.9 887.2 351.4C887.5 346.9 886.7 342.4 888.4 338.6C890.0 334.8 894.8 332.5 897.0 328.7C899.3 324.9 900.9 319.3 902.1 315.7C903.2 312.2 903.6 308.8 904.0 307.4M404.7 458.7C404.4 460.9 402.3 467.9 403.1 472.1C403.9 476.3 407.1 480.8 409.3 483.9C411.6 487.0 413.9 488.2 416.5 490.8C419.1 493.4 421.6 496.7 424.7 499.4C427.8 502.1 432.3 504.7 435.0 507.0C437.8 509.3 437.9 511.9 441.4 513.2C444.9 514.6 453.8 514.7 456.2 515.0M904.8 335.1C902.7 336.1 895.0 338.4 892.6 340.9C890.2 343.4 891.3 346.7 890.4 350.0C889.6 353.3 887.9 356.9 887.6 360.9C887.3 364.8 888.3 371.7 888.4 373.8M870.7 524.2C868.9 525.8 863.2 531.1 859.8 533.9C856.5 536.7 853.9 539.1 850.6 540.9C847.3 542.6 842.5 542.3 839.9 544.5C837.4 546.7 836.2 549.7 835.4 554.0C834.6 558.2 834.6 565.2 835.2 569.9C835.8 574.6 838.1 578.1 839.0 582.1C839.9 586.1 840.8 589.9 840.6 593.9C840.3 598.0 838.5 603.0 837.4 606.6C836.3 610.2 834.4 614.2 833.8 615.7M921.2 423.7C919.1 423.5 912.8 422.2 908.6 422.3C904.4 422.4 900.1 423.6 895.8 424.4C891.4 425.2 886.1 426.2 882.4 427.1C878.8 428.1 876.3 427.6 873.7 430.0C871.1 432.5 870.2 438.8 866.8 441.8C863.5 444.9 858.2 447.2 853.7 448.2C849.2 449.3 844.3 448.3 840.0 448.2C835.7 448.1 829.9 447.7 827.9 447.6M408.6 198.3C408.3 196.2 407.6 189.4 406.4 186.0C405.3 182.6 403.4 180.5 401.6 177.8C399.9 175.0 399.2 171.5 396.1 169.4C393.0 167.2 387.5 165.7 383.1 164.9C378.6 164.2 373.4 165.5 369.3 164.7C365.2 163.9 362.3 162.3 358.6 160.3C354.9 158.4 350.5 156.1 347.2 152.9C344.0 149.7 340.6 144.9 339.2 141.1C337.8 137.3 339.0 131.9 338.9 130.1M816.6 330.0C815.0 330.3 811.0 330.4 807.4 331.7C803.8 332.9 798.3 334.5 795.1 337.6C791.9 340.8 790.3 346.8 788.4 350.6C786.5 354.5 785.0 357.3 783.6 360.8C782.2 364.4 781.3 367.8 780.2 371.7C779.0 375.6 777.1 380.1 776.8 384.3C776.5 388.4 777.6 392.2 778.5 396.6C779.3 401.1 781.4 408.5 782.0 410.9M715.8 346.5C717.3 345.4 721.8 341.5 724.8 340.1C727.9 338.6 730.5 338.0 734.1 337.8C737.6 337.6 741.8 338.5 745.9 338.9C750.0 339.3 754.6 338.5 758.9 340.0C763.3 341.6 769.8 346.9 772.0 348.3M570.6 302.6C572.1 301.2 578.3 298.4 580.1 294.5C581.9 290.7 580.7 284.4 581.3 279.4C581.9 274.5 582.2 269.4 583.5 264.9C584.8 260.3 588.2 255.6 589.1 252.0C590.0 248.4 589.4 247.1 588.9 243.3C588.5 239.5 585.7 233.2 586.3 229.0C586.9 224.9 591.4 220.2 592.4 218.4M338.0 358.6C339.5 358.3 343.3 357.4 347.3 357.0C351.2 356.7 357.3 357.3 361.7 356.5C366.1 355.7 369.9 354.2 373.7 352.0C377.5 349.9 381.2 345.6 384.4 343.7C387.7 341.8 390.4 341.7 393.2 340.7C396.0 339.6 400.0 337.9 401.4 337.4M412.0 434.0C411.7 436.3 409.1 443.5 409.7 448.1C410.4 452.7 414.3 457.0 416.1 461.7C417.9 466.4 418.7 472.8 420.6 476.6C422.4 480.4 425.0 481.5 427.2 484.5C429.3 487.6 431.3 491.0 433.5 494.8C435.6 498.5 437.1 504.4 440.3 506.9C443.6 509.4 449.6 507.5 452.9 509.8C456.1 512.0 458.6 518.5 459.8 520.2M453.0 422.6C451.0 422.5 445.4 421.8 440.9 422.3C436.5 422.9 429.8 423.6 426.3 425.8C422.7 428.1 422.8 433.6 419.7 435.9C416.5 438.2 411.4 437.8 407.3 439.8C403.3 441.9 398.0 445.3 395.2 448.3C392.5 451.4 392.4 454.4 390.8 458.1C389.3 461.9 386.9 466.9 386.0 470.8C385.2 474.6 384.9 477.7 385.7 481.4C386.5 485.1 389.8 491.1 390.6 493.0M417.9 208.6C417.3 207.2 415.8 202.9 413.9 199.8C412.1 196.6 410.5 191.8 406.8 189.7C403.1 187.6 396.2 188.7 391.7 187.2C387.2 185.8 381.8 182.0 379.8 181.0M687.4 305.7C685.8 307.5 681.9 313.8 677.9 316.3C673.9 318.8 667.9 319.9 663.3 320.8C658.6 321.8 654.6 322.5 650.0 321.8C645.4 321.2 640.5 317.5 635.6 316.8C630.8 316.1 623.5 317.3 621.1 317.5M339.9 188.3C338.3 189.2 333.6 191.4 330.5 193.7C327.5 195.9 323.3 198.1 321.5 201.9C319.7 205.7 319.5 212.5 319.7 216.2C319.9 220.0 321.9 221.1 322.9 224.6C323.9 228.2 325.2 235.3 325.6 237.4" stroke="#e2dfd6" stroke-width="0.8" fill="none"/>
<path d="M873 470 L970 470 L970 586 L862 586 L866 530 Z" fill="#f7f3ea"/>
<path d="M876 480V566M897.5 480V566M915 480V566M932 480V566M945.5 480V566M873 486H962M873 502H962M873 511.6H962M873 533H962M873 547H962M873 560H962" stroke="#f5dcaa" stroke-width="1.500" fill="none"/>
<path d="M848.0 400.0C849.3 402.0 854.2 407.0 856.0 412.0C857.8 417.0 841.7 424.5 859.0 430.0C876.3 435.5 943.2 419.0 960.0 445.0C976.8 471.0 960.0 562.5 960.0 586.0" stroke="#f5dcaa" stroke-width="0.01" fill="none" stroke-linecap="round" stroke-linejoin="round" />
<path d="M946.0 146.0C947.2 155.0 951.2 174.3 953.0 200.0C954.8 225.7 956.2 266.7 957.0 300.0C957.8 333.3 957.5 376.7 958.0 400.0C958.5 423.3 959.7 408.3 960.0 440.0C960.3 471.7 960.0 565.0 960.0 590.0" stroke="#f5dcaa" stroke-width="2" fill="none" stroke-linecap="round" stroke-linejoin="round" />
<path d="M886 486V566M906 486V566M923.5 486V566M938.5 486V566M952.5 486V566M966 486V566M873 494H970M873 506.5H970M873 522H970M873 540H970M873 553.5H970" stroke="#efe6d2" stroke-width="0.700" fill="none"/>
<path d="M946 146 L970 146 L970 470 L960 470 L958 400 L950 300 Z" fill="#f7f3ea" opacity="0.6"/>
<rect x="877" y="478" width="20" height="7" fill="#e6dfdd"/>
<rect x="899" y="478" width="15" height="7" fill="#e6e0de"/>
<rect x="877" y="488" width="19" height="13" fill="#ece6e2"/>
<rect x="917" y="489" width="14" height="12" fill="#f1ede6"/>
<rect x="934" y="470" width="10" height="14" fill="#e6e2e0"/>
<rect x="947" y="487" width="11" height="14" fill="#ebe7e4"/>
<rect x="839" y="433" width="22" height="26" fill="#e7e0dd"/>
<rect x="817" y="457" width="20" height="36" fill="#e8e1de"/>
<rect x="800" y="425" width="12" height="10" fill="#e9e3e0"/>
<rect x="786" y="412" width="14" height="10" fill="#ebe5e2"/>
<rect x="842" y="462" width="12" height="14" fill="#e9e3e0"/>
<rect x="897" y="365" width="10" height="12" fill="#e3e0e4"/>
<rect x="915" y="350" width="14" height="14" fill="#ebe3e3"/>
<rect x="880" y="372" width="8" height="10" fill="#e9e3e3"/>
<rect x="939" y="384" width="14" height="16" fill="#ebe5e2"/>
<rect x="923" y="547" width="6" height="12" fill="#dcdcdc"/>
<rect x="880" y="545" width="8" height="8" fill="#dedede"/>
<rect x="946" y="425" width="16" height="10" fill="#e8e2e0"/>
<rect x="920" y="504" width="10" height="6" fill="#b9dba8"/>
<path d="M845 330 L905 345M850 345 L900 360M856 360 L895 372M845 375 L880 395M870 325 L862 395M885 330 L880 400M900 340 L893 390" stroke="#dcd8cf" stroke-width="0.8" fill="none"/>
<g fill="#9acb8e">
<path d="M521.0 311.0C523.7 309.3 527.3 312.8 529.0 316.0C530.7 319.2 531.1 323.3 531.0 330.0C530.9 336.7 530.0 347.2 528.5 356.0C527.0 364.8 524.4 375.3 522.0 383.0C519.6 390.7 516.7 395.8 514.0 402.0C511.3 408.2 507.7 414.3 506.0 420.0C504.3 425.7 504.7 431.2 504.0 436.0C503.3 440.8 500.7 444.7 502.0 449.0C503.3 453.3 508.1 458.4 512.0 462.0C515.9 465.6 519.9 468.8 525.6 470.5C531.3 472.2 537.4 471.6 546.0 472.0C554.6 472.4 569.7 473.2 577.0 473.0C584.3 472.8 586.5 470.0 590.0 470.5C593.5 471.0 595.7 473.4 598.0 476.0C600.3 478.6 601.8 484.5 604.0 486.0C606.2 487.5 618.3 484.0 611.0 485.0C603.7 486.0 575.2 491.8 560.0 492.0C544.8 492.2 529.2 489.7 520.0 486.0C510.8 482.3 509.2 476.8 505.0 470.0C500.8 463.2 497.0 452.5 495.0 445.0C493.0 437.5 492.5 432.5 493.0 425.0C493.5 417.5 496.5 406.7 498.0 400.0C499.5 393.3 502.2 390.3 502.0 385.0C501.8 379.7 497.2 373.8 497.0 368.0C496.8 362.2 499.7 355.7 501.0 350.0C502.3 344.3 503.0 338.0 505.0 334.0C507.0 330.0 510.3 329.8 513.0 326.0C515.7 322.2 518.3 312.7 521.0 311.0Z"/>
<path d="M497.0 304.0C499.5 301.2 503.8 299.3 506.0 298.0C508.2 296.7 511.3 294.2 510.0 296.0C508.7 297.8 501.2 305.8 498.0 309.0C494.8 312.2 491.2 315.8 491.0 315.0C490.8 314.2 494.5 306.8 497.0 304.0Z"/>
<path d="M454.0 398.0C455.1 394.2 458.5 388.3 459.0 392.0C459.5 395.7 457.0 410.3 457.0 420.0C457.0 429.7 458.0 440.3 459.0 450.0C460.0 459.7 461.5 470.5 463.0 478.0C464.5 485.5 467.8 492.7 468.0 495.0C468.2 497.3 465.6 496.2 464.0 492.0C462.4 487.8 460.0 478.7 458.5 470.0C457.0 461.3 456.0 449.2 455.0 440.0C454.0 430.8 452.7 422.0 452.5 415.0C452.3 408.0 452.9 401.8 454.0 398.0Z"/>
<path d="M520.0 510.0C521.7 509.0 537.4 508.5 545.0 508.0C552.6 507.5 557.3 506.7 565.6 507.0C573.9 507.3 583.4 509.3 595.0 510.0C606.6 510.7 623.3 509.8 635.0 511.0C646.7 512.2 655.3 515.2 665.0 517.0C674.7 518.8 683.7 519.8 693.0 522.0C702.3 524.2 711.7 527.7 721.0 530.0C730.3 532.3 739.7 534.3 749.0 536.0C758.3 537.7 768.5 538.0 777.0 540.0C785.5 542.0 792.8 544.8 800.0 548.0C807.2 551.2 814.0 556.0 820.0 559.0C826.0 562.0 837.3 564.8 836.0 566.0C834.7 567.2 821.3 567.4 812.0 566.0C802.7 564.6 790.5 560.6 780.0 557.5C769.5 554.4 760.8 551.5 749.0 547.5C737.2 543.5 722.3 537.2 709.0 533.6C695.7 530.0 682.2 527.5 669.0 525.7C655.8 523.9 643.2 524.0 630.0 523.0C616.8 522.0 601.7 521.0 590.0 519.7C578.3 518.4 569.2 516.0 560.0 515.0C550.8 514.0 541.7 514.8 535.0 514.0C528.3 513.2 518.3 511.0 520.0 510.0Z"/>
<path d="M581.0 146.0C581.7 143.7 584.3 143.7 586.0 146.0C587.7 148.3 590.0 155.3 591.0 160.0C592.0 164.7 593.2 172.0 592.0 174.0C590.8 176.0 585.7 174.3 584.0 172.0C582.3 169.7 582.5 164.3 582.0 160.0C581.5 155.7 580.3 148.3 581.0 146.0Z"/>
<path d="M710.0 530.0C713.3 529.5 724.2 529.7 730.0 531.0C735.8 532.3 740.0 536.0 745.0 538.0C750.0 540.0 754.2 542.2 760.0 543.0C765.8 543.8 773.3 542.2 780.0 543.0C786.7 543.8 798.3 546.5 800.0 548.0C801.7 549.5 796.7 552.0 790.0 552.0C783.3 552.0 769.2 550.0 760.0 548.0C750.8 546.0 743.3 542.3 735.0 540.0C726.7 537.7 714.2 535.7 710.0 534.0C705.8 532.3 706.7 530.5 710.0 530.0Z"/>
</g>
<path d="M553.0 140.0C552.8 144.5 552.3 158.9 551.6 167.0C550.9 175.1 550.1 182.0 549.0 188.5C547.9 195.0 540.8 201.6 545.0 206.0C549.2 210.4 567.4 217.0 574.0 215.0C580.6 213.0 581.9 200.5 584.8 193.8C587.7 187.1 592.0 180.3 591.5 175.0C591.0 169.7 583.8 167.8 582.0 162.0C580.2 156.2 581.0 143.7 580.8 140.0Z" fill="#86abdb"/>
<path d="M545.5 206.4 L540.0 213.0 L536.0 222.3 L536.0 232.7 L536.0 242.8 L533.4 251.7 L527.8 259.6 L524.0 269.0 L521.0 279.0 L515.7 287.3 L510.0 295.7 L505.0 302.5 L497.0 308.4 L489.5 314.8 L483.3 322.7 L478.6 332.0 L475.5 340.8 L474.4 350.4 L471.0 359.6 L468.0 368.8 L465.5 378.5 L461.4 387.3 L458.0 397.0 L455.0 406.7 L456.0 416.8 L456.7 426.9 L458.4 437.0 L459.3 447.0 L460.4 457.0 L461.8 467.0 L464.3 476.4 L466.8 486.4 L470.0 496.0 L477.7 500.7 L487.0 503.2 L497.9 504.4 L507.0 505.7 L517.0 508.8 L527.0 510.8 L536.5 510.0 L546.5 507.4 L555.8 505.4 L565.4 506.0 L575.0 507.5 L585.3 508.0 L595.0 508.5 L605.0 508.8 L615.0 509.4 L625.0 509.7 L635.0 510.0 L645.0 511.8 L654.9 514.4 L664.6 516.4 L666.3 506.0 L668.0 496.8 L660.8 493.8 L650.9 491.9 L641.0 490.6 L631.4 488.9 L621.8 484.9 L611.8 484.5 L602.0 484.9 L592.5 486.6 L582.2 488.2 L572.3 488.9 L562.3 489.5 L552.4 489.8 L542.3 488.6 L532.3 487.0 L523.0 484.0 L514.7 478.5 L508.4 471.8 L503.0 463.4 L498.7 454.0 L496.0 445.0 L494.5 435.0 L493.7 425.0 L496.0 416.0 L498.4 405.7 L498.7 396.0 L503.0 386.4 L503.0 377.2 L496.0 368.0 L500.4 359.0 L501.7 349.5 L502.0 340.3 L506.8 332.2 L513.0 326.0 L518.3 319.3 L526.0 312.0 L533.6 305.4 L538.0 297.0 L542.4 287.3 L546.3 278.0 L548.8 268.8 L552.5 259.6 L559.0 252.0 L562.0 242.8 L566.4 233.6 L570.6 223.5 L573.7 214.8 L564.4 210.9 L554.7 208.4Z" fill="#86abdb"/>
<path d="M666.0 496.0C671.2 496.7 683.2 499.0 697.0 500.0C710.8 501.0 736.4 500.4 749.0 502.0C761.6 503.6 764.9 506.2 772.8 509.8C780.7 513.4 788.7 518.7 796.6 523.7C804.5 528.7 812.1 534.6 820.0 539.6C827.9 544.6 837.0 549.8 844.0 553.5C851.0 557.2 856.0 558.4 862.0 562.0C868.0 565.6 875.3 570.3 880.0 575.0C884.7 579.7 888.3 587.5 890.0 590.0 L700 590 " fill="none"/>
<path d="M666.0 496.0C671.7 493.2 683.2 499.0 697.0 500.0C710.8 501.0 736.4 500.4 749.0 502.0C761.6 503.6 764.9 506.2 772.8 509.8C780.7 513.4 788.7 518.7 796.6 523.7C804.5 528.7 812.1 534.6 820.0 539.6C827.9 544.6 837.0 549.8 844.0 553.5C851.0 557.2 856.0 558.4 862.0 562.0C868.0 565.6 875.3 570.3 880.0 575.0C884.7 579.7 920.0 587.5 890.0 590.0C860.0 592.5 728.3 591.2 700.0 590.0C671.7 588.8 713.3 585.5 720.0 583.0C726.7 580.5 731.7 577.2 740.0 575.0C748.3 572.8 760.0 570.8 770.0 570.0C780.0 569.2 791.5 571.7 800.0 570.0C808.5 568.3 820.9 563.8 821.0 560.0C821.1 556.2 808.0 550.9 800.6 547.5C793.2 544.1 785.3 541.6 776.7 539.6C768.1 537.6 758.3 537.2 749.0 535.6C739.7 534.0 730.3 532.0 721.0 529.7C711.7 527.4 702.7 523.8 693.0 521.7C683.3 519.6 667.5 521.3 663.0 517.0C658.5 512.7 660.3 498.8 666.0 496.0Z" fill="#86abdb"/>
<path d="M848.0 307.5C851.7 307.7 862.5 307.2 870.0 308.5C877.5 309.8 886.4 312.2 893.0 315.0C899.6 317.8 904.5 321.5 909.5 325.0C914.5 328.5 919.2 332.8 923.0 336.0C926.8 339.2 927.8 342.8 932.0 344.5C936.2 346.2 942.0 347.3 948.0 346.0C954.0 344.7 964.7 338.1 968.0 336.5" stroke="#9acb8e" stroke-width="3.2" fill="none" stroke-linecap="round" stroke-linejoin="round" />
<path d="M922.0 337.0C924.0 337.8 929.3 340.9 934.0 342.0C938.7 343.1 947.3 343.2 950.0 343.5" stroke="#9acb8e" stroke-width="4" fill="none" stroke-linecap="round" stroke-linejoin="round" />
<path d="M812.5 358.0C812.8 359.3 813.2 363.0 814.5 366.0C815.8 369.0 819.1 374.3 820.0 376.0" stroke="#9acb8e" stroke-width="3" fill="none" stroke-linecap="round" stroke-linejoin="round" />
<path d="M834.0 383.0C837.0 385.2 846.2 392.0 852.0 396.5C857.8 401.0 864.5 405.8 868.5 410.0C872.5 414.2 874.2 417.7 876.0 422.0C877.8 426.3 878.5 433.7 879.0 436.0" stroke="#9acb8e" stroke-width="3.6" fill="none" stroke-linecap="round" stroke-linejoin="round" />
<path d="M866.5 470.0C865.7 473.2 863.0 482.3 861.5 489.0C860.0 495.7 858.8 502.5 857.5 510.0C856.2 517.5 854.4 526.3 853.5 534.0C852.6 541.7 852.2 552.3 852.0 556.0" stroke="#9acb8e" stroke-width="3" fill="none" stroke-linecap="round" stroke-linejoin="round" />
<path d="M975.0 338.0C970.7 340.2 956.4 349.0 949.0 351.0C941.6 353.0 935.4 351.6 930.5 349.8C925.6 348.1 923.8 343.8 919.8 340.5C915.8 337.2 911.4 333.1 906.5 329.8C901.6 326.5 896.8 323.1 890.6 320.5C884.4 317.9 876.5 315.3 869.4 314.0C862.3 312.7 854.2 312.4 848.0 312.6C841.8 312.8 836.8 312.6 832.0 315.0C827.2 317.4 822.7 321.9 819.0 327.0C815.3 332.1 811.4 340.0 809.6 345.8C807.8 351.6 807.2 356.8 808.3 361.7C809.4 366.6 812.5 370.8 816.0 375.0C819.5 379.2 824.2 382.6 829.5 387.0C834.8 391.4 842.2 396.9 848.0 401.5C853.8 406.1 860.0 410.4 864.0 414.8C868.0 419.2 870.2 423.8 872.0 428.0C873.8 432.2 874.0 436.0 874.7 440.0C875.4 444.0 876.5 446.9 876.0 452.0C875.5 457.1 873.5 464.3 872.0 470.5C870.5 476.7 868.2 482.4 866.7 489.0C865.2 495.6 864.0 502.5 862.7 510.0C861.4 517.5 859.6 526.8 858.7 534.0C857.8 541.2 857.2 547.3 857.4 553.0C857.6 558.7 859.6 565.5 860.0 568.0" stroke="#86abdb" stroke-width="7" fill="none" stroke-linecap="round" stroke-linejoin="round" />
<path d="M848.0 401.5C850.4 403.5 858.3 408.7 862.3 413.7C866.3 418.7 870.0 425.4 872.0 431.3C874.0 437.2 874.4 443.1 874.0 449.0C873.6 454.9 871.2 460.7 869.7 466.6C868.2 472.5 866.6 478.3 865.2 484.2C863.8 490.1 862.4 495.7 861.3 501.9C860.2 508.1 859.0 515.0 858.4 521.4C857.8 527.8 857.5 534.2 857.4 540.0C857.3 545.8 857.4 551.0 858.0 556.0C858.6 561.0 860.5 567.7 861.0 570.0" stroke="#86abdb" stroke-width="9.5" fill="none" stroke-linecap="round" stroke-linejoin="round" />
<path d="M205.0 155.0C208.5 155.3 220.3 155.3 226.0 157.0C231.7 158.7 234.7 162.0 239.0 165.0C243.3 168.0 248.0 171.1 252.0 175.0C256.0 178.9 258.5 184.5 263.0 188.5C267.5 192.5 273.2 195.2 279.0 199.0C284.8 202.8 291.8 207.0 298.0 211.0C304.2 215.0 310.8 219.2 316.0 223.0C321.2 226.8 325.9 229.5 329.5 234.0C333.1 238.5 335.9 244.8 337.5 250.0C339.1 255.2 338.1 260.2 339.0 265.5C339.9 270.8 341.0 276.4 343.0 281.5C345.0 286.6 348.4 292.4 351.0 296.0C353.6 299.6 354.8 299.6 358.7 303.0C362.6 306.4 369.4 310.4 374.7 316.6C380.0 322.9 385.3 334.3 390.6 340.5C395.9 346.7 403.6 348.4 406.5 353.7C409.4 358.9 406.4 365.9 407.9 372.0C409.4 378.1 412.2 382.7 415.6 390.6C419.0 398.5 423.9 412.0 428.0 419.4C432.1 426.8 436.3 431.2 440.0 435.0C443.7 438.8 446.5 439.8 450.0 442.0C453.5 444.2 459.2 447.0 461.0 448.0" stroke="#98cc93" stroke-width="3.6" fill="none" stroke-linecap="round" stroke-linejoin="round" />
<path d="M205.0 155.0C208.5 155.3 220.3 155.3 226.0 157.0C231.7 158.7 234.7 162.0 239.0 165.0C243.3 168.0 248.0 171.1 252.0 175.0C256.0 178.9 258.5 184.5 263.0 188.5C267.5 192.5 273.2 195.2 279.0 199.0C284.8 202.8 291.8 207.0 298.0 211.0C304.2 215.0 310.8 219.2 316.0 223.0C321.2 226.8 325.9 229.5 329.5 234.0C333.1 238.5 335.9 244.8 337.5 250.0C339.1 255.2 338.1 260.2 339.0 265.5C339.9 270.8 341.0 276.4 343.0 281.5C345.0 286.6 348.4 292.4 351.0 296.0C353.6 299.6 354.8 299.6 358.7 303.0C362.6 306.4 369.4 310.4 374.7 316.6C380.0 322.9 385.3 334.3 390.6 340.5C395.9 346.7 403.6 348.4 406.5 353.7C409.4 358.9 406.4 365.9 407.9 372.0C409.4 378.1 412.2 382.7 415.6 390.6C419.0 398.5 423.9 412.0 428.0 419.4C432.1 426.8 436.3 431.2 440.0 435.0C443.7 438.8 446.5 439.8 450.0 442.0C453.5 444.2 459.2 447.0 461.0 448.0" stroke="#78aadf" stroke-width="0.9" fill="none" stroke-linecap="round" stroke-linejoin="round" />
<path d="M205.0 551.5C210.3 551.8 226.9 552.8 236.6 553.0C246.3 553.2 255.9 552.8 263.0 553.0C270.1 553.2 273.2 554.5 279.0 554.0C284.8 553.5 291.4 552.0 297.6 550.0C303.8 548.0 310.3 544.8 316.0 542.0C321.7 539.2 325.8 535.2 332.0 533.0C338.2 530.8 347.2 531.9 353.4 529.0C359.6 526.1 365.0 520.6 369.4 515.7C373.8 510.8 377.4 505.0 380.0 499.7C382.6 494.4 382.8 488.2 385.0 483.8C387.2 479.4 389.4 475.5 393.0 473.0C396.6 470.5 402.0 468.5 406.5 469.0C411.0 469.5 415.8 472.9 419.8 475.8C423.8 478.7 426.5 483.8 430.5 486.5C434.5 489.2 438.8 491.8 443.7 491.8C448.6 491.8 455.3 488.3 459.7 486.5C464.1 484.7 468.3 481.9 470.0 481.0" stroke="#98cc93" stroke-width="3.3" fill="none" stroke-linecap="round" stroke-linejoin="round" />
<path d="M205.0 551.5C210.3 551.8 226.9 552.8 236.6 553.0C246.3 553.2 255.9 552.8 263.0 553.0C270.1 553.2 273.2 554.5 279.0 554.0C284.8 553.5 291.4 552.0 297.6 550.0C303.8 548.0 310.3 544.8 316.0 542.0C321.7 539.2 325.8 535.2 332.0 533.0C338.2 530.8 347.2 531.9 353.4 529.0C359.6 526.1 365.0 520.6 369.4 515.7C373.8 510.8 377.4 505.0 380.0 499.7C382.6 494.4 382.8 488.2 385.0 483.8C387.2 479.4 389.4 475.5 393.0 473.0C396.6 470.5 402.0 468.5 406.5 469.0C411.0 469.5 415.8 472.9 419.8 475.8C423.8 478.7 426.5 483.8 430.5 486.5C434.5 489.2 438.8 491.8 443.7 491.8C448.6 491.8 455.3 488.3 459.7 486.5C464.1 484.7 468.3 481.9 470.0 481.0" stroke="#78aadf" stroke-width="0.9" fill="none" stroke-linecap="round" stroke-linejoin="round" />
<path d="M327.0 146.0C328.8 148.7 334.0 156.7 337.5 162.0C341.0 167.3 345.1 171.8 348.0 178.0C350.9 184.2 353.7 191.5 355.0 199.0C356.3 206.5 356.7 215.5 356.0 223.0C355.3 230.5 353.7 238.2 351.0 244.0C348.3 249.8 343.6 253.0 340.0 257.5C336.4 262.0 332.6 266.1 329.5 271.0C326.4 275.9 326.8 284.8 321.5 287.0C316.2 289.2 303.9 285.2 297.6 284.0C291.4 282.8 289.3 280.0 284.0 280.0C278.7 280.0 270.8 281.3 266.0 284.0C261.2 286.7 257.7 293.2 255.0 296.0C252.3 298.8 252.9 297.6 249.8 300.6C246.7 303.6 241.5 310.0 236.6 314.0C231.7 318.0 225.4 321.3 220.6 324.5C215.8 327.7 210.1 331.6 208.0 333.0" stroke="#8cc2b4" stroke-width="1.1" fill="none" stroke-linecap="round" stroke-linejoin="round" />
<path d="M321.5 290.0C317.5 292.7 304.7 301.6 297.6 306.0C290.5 310.4 284.8 311.2 279.0 316.5C273.2 321.8 267.9 330.7 263.0 337.8C258.1 344.9 252.0 355.5 249.8 359.0" stroke="#8cc2b4" stroke-width="1.1" fill="none" stroke-linecap="round" stroke-linejoin="round" />
<path d="M720.0 186.0C717.3 189.0 707.0 197.4 704.0 204.0C701.0 210.6 705.7 219.9 701.7 225.7C697.7 231.5 686.6 234.6 680.0 239.0C673.4 243.4 667.7 247.2 662.0 252.0C656.3 256.8 652.2 262.2 646.0 268.0C639.8 273.8 630.0 282.1 624.7 286.8C619.4 291.5 617.5 292.4 614.0 296.0C610.5 299.6 606.9 302.5 603.4 308.6C599.9 314.7 595.9 325.9 592.8 332.5C589.7 339.1 588.8 344.0 584.8 348.4C580.8 352.8 572.2 353.7 568.9 359.0C565.6 364.3 566.3 372.0 565.0 380.0C563.7 388.0 562.1 397.0 561.0 407.0C559.9 417.0 556.5 433.0 558.3 440.0C560.0 447.0 566.6 445.2 571.5 449.0C576.4 452.8 583.1 458.0 587.5 462.5C591.9 467.0 596.2 473.6 598.0 475.8" stroke="#8cc2b4" stroke-width="1.1" fill="none" stroke-linecap="round" stroke-linejoin="round" />
<path d="M736.5 146.0C735.6 149.1 733.6 158.4 731.0 164.6C728.4 170.8 724.1 177.3 720.6 183.0C717.1 188.7 713.4 193.7 710.0 199.0C706.6 204.3 701.7 212.3 700.0 215.0" stroke="#8cc2b4" stroke-width="1.1" fill="none" stroke-linecap="round" stroke-linejoin="round" />
<path d="M354.7 437.0C357.1 439.9 363.0 449.0 369.0 454.6C375.0 460.2 387.0 467.9 390.6 470.5" stroke="#8cc2b4" stroke-width="1.1" fill="none" stroke-linecap="round" stroke-linejoin="round" />
<path d="M404.0 441.0C406.6 442.3 416.7 445.4 419.8 449.0C422.9 452.6 419.8 457.6 422.5 462.5C425.2 467.4 431.9 474.1 435.8 478.5C439.7 482.9 444.3 487.2 446.0 489.0" stroke="#8cc2b4" stroke-width="1.1" fill="none" stroke-linecap="round" stroke-linejoin="round" />
<path d="M455.0 150.0C456.2 156.7 459.5 176.7 462.0 190.0C464.5 203.3 467.0 218.0 470.0 230.0C473.0 242.0 476.3 252.0 480.0 262.0C483.7 272.0 490.0 285.3 492.0 290.0" stroke="#8cc2b4" stroke-width="1.1" fill="none" stroke-linecap="round" stroke-linejoin="round" />
<path d="M935.0 360.0C936.7 364.2 942.5 376.7 945.0 385.0C947.5 393.3 949.2 405.8 950.0 410.0" stroke="#8cc2b4" stroke-width="1.1" fill="none" stroke-linecap="round" stroke-linejoin="round" />
<ellipse cx="335.5" cy="370" rx="3.2" ry="5" fill="#5b8fe0"/>
<ellipse cx="372" cy="184.5" rx="1.3" ry="2.6" fill="#5b8fe0"/>
<ellipse cx="419.8" cy="167.8" rx="1.6" ry="1.2" fill="#5b8fe0"/>
<ellipse cx="403" cy="243" rx="1.8" ry="2.5" fill="#5b8fe0"/>
<ellipse cx="281" cy="403" rx="1.5" ry="2" fill="#5b8fe0"/>
<ellipse cx="399.5" cy="310" rx="3" ry="2.2" fill="#5b8fe0"/>
<ellipse cx="581" cy="463" rx="3.2" ry="1.8" fill="#5b8fe0"/>
<ellipse cx="735" cy="460" rx="1.5" ry="2" fill="#5b8fe0"/>
<ellipse cx="887" cy="204" rx="2.5" ry="2" fill="#5b8fe0"/>
<ellipse cx="737" cy="260" rx="2.5" ry="1.8" fill="#5b8fe0"/>
<ellipse cx="951" cy="283" rx="2.2" ry="2.5" fill="#5b8fe0"/>
<ellipse cx="726" cy="334" rx="2.5" ry="1.8" fill="#5b8fe0"/>
<ellipse cx="752" cy="379" rx="2" ry="3" fill="#5b8fe0"/>
<ellipse cx="233" cy="446" rx="3.5" ry="2" fill="#5b8fe0"/>
<ellipse cx="432" cy="562" rx="3" ry="1.5" fill="#5b8fe0"/>
<ellipse cx="692" cy="255" rx="1.5" ry="1.5" fill="#5b8fe0"/>
<ellipse cx="878" cy="231" rx="1.2" ry="1.5" fill="#5b8fe0"/>
<path d="M622.0 147.0C619.8 149.0 613.0 154.3 609.0 159.0C605.0 163.7 601.2 168.8 598.0 175.0C594.8 181.2 592.8 189.3 590.0 196.0C587.2 202.7 582.5 211.8 581.0 215.0" stroke="#9aa6b6" stroke-width="1.4" fill="none" stroke-linecap="round" stroke-linejoin="round" />
<path d="M869.0 146.0C867.3 148.0 861.7 152.7 858.7 158.0C855.7 163.3 852.1 171.2 850.8 178.0C849.5 184.8 849.5 191.1 850.8 199.0C852.1 206.9 854.7 218.6 858.7 225.7C862.7 232.8 869.4 237.6 874.7 241.6C880.0 245.6 885.3 248.7 890.6 249.6C895.9 250.5 901.2 247.0 906.5 247.0C911.8 247.0 918.5 250.5 922.5 249.6C926.5 248.7 927.0 243.8 930.5 241.6C934.0 239.4 939.3 237.2 943.7 236.3C948.1 235.4 952.6 235.0 957.0 236.3C961.4 237.6 967.8 243.0 970.0 244.3" stroke="#98a3b0" stroke-width="1.8" fill="none" stroke-linecap="round" stroke-linejoin="round" />
<path d="M760 507 L776 509 L776 518 L798 519 L798 546 L840 547 L842 562" stroke="#7f93b8" stroke-width="1" fill="none" stroke-dasharray="2 1"/>
<path d="M586.0 146.0C587.1 149.1 592.1 157.5 592.8 164.6C593.5 171.7 590.9 180.5 590.0 188.5C589.1 196.5 588.0 204.9 587.5 212.4C587.0 219.9 587.7 226.1 587.0 233.6C586.3 241.1 583.4 249.1 583.5 257.5C583.6 265.9 586.2 277.6 587.5 284.0C588.8 290.4 590.4 292.3 591.5 296.0C592.6 299.7 594.0 300.8 594.0 306.0C594.0 311.2 591.9 323.5 591.5 327.0" stroke="#d3cf98" stroke-width="3.0" fill="none" stroke-linecap="round" stroke-linejoin="round" /><path d="M586.0 146.0C587.1 149.1 592.1 157.5 592.8 164.6C593.5 171.7 590.9 180.5 590.0 188.5C589.1 196.5 588.0 204.9 587.5 212.4C587.0 219.9 587.7 226.1 587.0 233.6C586.3 241.1 583.4 249.1 583.5 257.5C583.6 265.9 586.2 277.6 587.5 284.0C588.8 290.4 590.4 292.3 591.5 296.0C592.6 299.7 594.0 300.8 594.0 306.0C594.0 311.2 591.9 323.5 591.5 327.0" stroke="#f0ecb0" stroke-width="2.1" fill="none" stroke-linecap="round" stroke-linejoin="round" />
<path d="M393.0 330.0C391.5 333.0 386.2 341.3 384.0 348.0C381.8 354.7 380.2 362.0 380.0 370.0C379.8 378.0 384.4 388.1 382.6 396.0C380.8 403.9 373.6 410.8 369.0 417.5C364.4 424.2 359.1 430.2 354.7 436.0C350.3 441.8 345.7 446.7 342.8 452.0C339.9 457.3 340.6 462.6 337.5 467.9C334.4 473.2 328.9 478.1 324.0 483.8C319.1 489.6 312.8 495.8 308.0 502.4C303.2 509.0 299.8 517.4 295.0 523.6C290.2 529.8 283.4 534.7 279.0 539.6C274.6 544.5 270.8 548.6 268.4 553.0C266.0 557.4 267.0 562.7 264.4 566.0C261.8 569.3 259.4 571.0 252.5 572.8C245.6 574.6 230.4 575.7 223.0 576.8C215.6 577.9 210.5 579.0 208.0 579.4" stroke="#d3cf98" stroke-width="3.0" fill="none" stroke-linecap="round" stroke-linejoin="round" /><path d="M393.0 330.0C391.5 333.0 386.2 341.3 384.0 348.0C381.8 354.7 380.2 362.0 380.0 370.0C379.8 378.0 384.4 388.1 382.6 396.0C380.8 403.9 373.6 410.8 369.0 417.5C364.4 424.2 359.1 430.2 354.7 436.0C350.3 441.8 345.7 446.7 342.8 452.0C339.9 457.3 340.6 462.6 337.5 467.9C334.4 473.2 328.9 478.1 324.0 483.8C319.1 489.6 312.8 495.8 308.0 502.4C303.2 509.0 299.8 517.4 295.0 523.6C290.2 529.8 283.4 534.7 279.0 539.6C274.6 544.5 270.8 548.6 268.4 553.0C266.0 557.4 267.0 562.7 264.4 566.0C261.8 569.3 259.4 571.0 252.5 572.8C245.6 574.6 230.4 575.7 223.0 576.8C215.6 577.9 210.5 579.0 208.0 579.4" stroke="#f0ecb0" stroke-width="2.1" fill="none" stroke-linecap="round" stroke-linejoin="round" />
<path d="M837.5 414.8C839.2 411.7 843.6 402.6 848.0 396.0C852.4 389.4 856.0 379.8 864.0 375.0C872.0 370.2 886.2 369.0 896.0 367.0C905.8 365.0 916.8 361.2 922.5 363.0C928.2 364.8 927.0 372.1 930.5 377.6C934.0 383.1 939.3 389.8 943.7 396.0C948.1 402.2 954.3 407.5 957.0 414.8C959.7 422.1 959.2 430.8 959.7 440.0C960.2 449.2 960.0 465.0 960.0 470.0" stroke="#e8c98c" stroke-width="2.5" fill="none" stroke-linecap="round" stroke-linejoin="round" /><path d="M837.5 414.8C839.2 411.7 843.6 402.6 848.0 396.0C852.4 389.4 856.0 379.8 864.0 375.0C872.0 370.2 886.2 369.0 896.0 367.0C905.8 365.0 916.8 361.2 922.5 363.0C928.2 364.8 927.0 372.1 930.5 377.6C934.0 383.1 939.3 389.8 943.7 396.0C948.1 402.2 954.3 407.5 957.0 414.8C959.7 422.1 959.2 430.8 959.7 440.0C960.2 449.2 960.0 465.0 960.0 470.0" stroke="#f7dca6" stroke-width="1.6" fill="none" stroke-linecap="round" stroke-linejoin="round" />
<path d="M945.0 405.0C947.2 404.5 953.5 402.8 958.0 402.0C962.5 401.2 969.7 400.3 972.0 400.0" stroke="#e8c98c" stroke-width="2.5" fill="none" stroke-linecap="round" stroke-linejoin="round" /><path d="M945.0 405.0C947.2 404.5 953.5 402.8 958.0 402.0C962.5 401.2 969.7 400.3 972.0 400.0" stroke="#f7dca6" stroke-width="1.6" fill="none" stroke-linecap="round" stroke-linejoin="round" />
<path d="M800.0 436.0C801.0 437.3 802.3 442.2 806.0 444.0C809.7 445.8 819.3 446.5 822.0 447.0" stroke="#e8c98c" stroke-width="2.5" fill="none" stroke-linecap="round" stroke-linejoin="round" /><path d="M800.0 436.0C801.0 437.3 802.3 442.2 806.0 444.0C809.7 445.8 819.3 446.5 822.0 447.0" stroke="#f7dca6" stroke-width="1.6" fill="none" stroke-linecap="round" stroke-linejoin="round" />
<path d="M205.0 157.0C208.5 157.8 219.8 159.7 226.0 162.0C232.2 164.3 235.8 169.0 242.0 171.0C248.2 173.0 255.0 171.3 263.0 174.0C271.0 176.7 281.5 183.7 290.0 187.0C298.5 190.3 307.8 191.3 314.0 194.0C320.2 196.7 323.5 199.5 327.0 203.0C330.5 206.5 333.0 209.5 335.0 215.0C337.0 220.5 336.8 228.9 339.0 236.0C341.2 243.1 344.7 250.3 348.0 257.5C351.3 264.7 355.7 272.6 359.0 279.0C362.3 285.4 365.8 292.0 368.0 296.0C370.2 300.0 369.6 299.2 372.0 303.0C374.4 306.8 378.6 315.0 382.6 319.0C386.6 323.0 391.1 325.4 396.0 327.0C400.9 328.6 405.3 329.2 411.9 328.5C418.5 327.8 427.8 324.5 435.8 323.0C443.8 321.5 453.3 319.9 460.0 319.5C466.7 319.1 471.6 319.9 476.0 320.5C480.4 321.1 481.7 321.6 486.5 323.0C491.3 324.4 498.8 327.0 505.0 329.0C511.2 331.0 517.0 333.1 523.7 335.0C530.4 336.9 535.7 339.4 545.0 340.5C554.3 341.6 568.4 341.6 579.5 341.8C590.6 342.0 603.4 340.3 611.4 341.8C619.4 343.3 622.4 346.4 627.3 351.0C632.2 355.6 636.6 362.2 640.6 369.7C644.6 377.2 646.6 388.5 651.0 396.0C655.4 403.5 662.1 408.1 667.0 414.8C671.9 421.5 675.6 431.1 680.5 436.0C685.4 440.9 692.4 439.6 696.4 444.0C700.4 448.4 700.5 456.3 704.4 462.5C708.3 468.7 716.4 477.0 720.0 481.0C723.6 485.0 721.9 483.6 726.0 486.5C730.1 489.4 739.5 496.0 744.5 498.4C749.5 500.8 754.1 500.6 756.0 501.0" stroke="#e0b440" stroke-width="3.0" fill="none" stroke-linecap="round" stroke-linejoin="round" /><path d="M205.0 157.0C208.5 157.8 219.8 159.7 226.0 162.0C232.2 164.3 235.8 169.0 242.0 171.0C248.2 173.0 255.0 171.3 263.0 174.0C271.0 176.7 281.5 183.7 290.0 187.0C298.5 190.3 307.8 191.3 314.0 194.0C320.2 196.7 323.5 199.5 327.0 203.0C330.5 206.5 333.0 209.5 335.0 215.0C337.0 220.5 336.8 228.9 339.0 236.0C341.2 243.1 344.7 250.3 348.0 257.5C351.3 264.7 355.7 272.6 359.0 279.0C362.3 285.4 365.8 292.0 368.0 296.0C370.2 300.0 369.6 299.2 372.0 303.0C374.4 306.8 378.6 315.0 382.6 319.0C386.6 323.0 391.1 325.4 396.0 327.0C400.9 328.6 405.3 329.2 411.9 328.5C418.5 327.8 427.8 324.5 435.8 323.0C443.8 321.5 453.3 319.9 460.0 319.5C466.7 319.1 471.6 319.9 476.0 320.5C480.4 321.1 481.7 321.6 486.5 323.0C491.3 324.4 498.8 327.0 505.0 329.0C511.2 331.0 517.0 333.1 523.7 335.0C530.4 336.9 535.7 339.4 545.0 340.5C554.3 341.6 568.4 341.6 579.5 341.8C590.6 342.0 603.4 340.3 611.4 341.8C619.4 343.3 622.4 346.4 627.3 351.0C632.2 355.6 636.6 362.2 640.6 369.7C644.6 377.2 646.6 388.5 651.0 396.0C655.4 403.5 662.1 408.1 667.0 414.8C671.9 421.5 675.6 431.1 680.5 436.0C685.4 440.9 692.4 439.6 696.4 444.0C700.4 448.4 700.5 456.3 704.4 462.5C708.3 468.7 716.4 477.0 720.0 481.0C723.6 485.0 721.9 483.6 726.0 486.5C730.1 489.4 739.5 496.0 744.5 498.4C749.5 500.8 754.1 500.6 756.0 501.0" stroke="#f6cd52" stroke-width="2.1" fill="none" stroke-linecap="round" stroke-linejoin="round" />
<path d="M756.0 501.0C756.8 500.3 758.0 501.2 760.5 497.0C763.0 492.8 767.9 482.5 771.0 475.8C774.1 469.1 775.9 462.3 779.0 457.0C782.1 451.7 786.2 447.5 789.7 444.0C793.2 440.5 798.3 437.3 800.0 436.0" stroke="#e0b440" stroke-width="3.0" fill="none" stroke-linecap="round" stroke-linejoin="round" /><path d="M756.0 501.0C756.8 500.3 758.0 501.2 760.5 497.0C763.0 492.8 767.9 482.5 771.0 475.8C774.1 469.1 775.9 462.3 779.0 457.0C782.1 451.7 786.2 447.5 789.7 444.0C793.2 440.5 798.3 437.3 800.0 436.0" stroke="#f6cd52" stroke-width="2.1" fill="none" stroke-linecap="round" stroke-linejoin="round" />
<path d="M943.7 146.0C945.1 148.8 949.3 157.2 952.0 163.0C954.7 168.8 956.4 172.3 959.7 180.5C963.0 188.7 970.0 206.8 972.0 212.0" stroke="#f5a825" stroke-width="3.6" fill="none" stroke-linecap="round" stroke-linejoin="round" />
<path d="M951.0 146.0C952.5 148.8 957.2 157.3 960.0 163.0C962.8 168.7 966.7 177.2 968.0 180.0" stroke="#f7d774" stroke-width="2" fill="none" stroke-linecap="round" stroke-linejoin="round" />
<path d="M958.0 146.0C959.0 147.8 962.0 153.3 964.0 157.0C966.0 160.7 969.0 166.2 970.0 168.0" stroke="#8fb2e0" stroke-width="1.2" fill="none" stroke-linecap="round" stroke-linejoin="round" />
<path d="M208.0 558.0C209.0 560.7 212.0 568.7 214.0 574.0C216.0 579.3 219.0 587.3 220.0 590.0" stroke="#f5a825" stroke-width="3" fill="none" stroke-linecap="round" stroke-linejoin="round" />
<path d="M800.0 436.0C802.2 435.4 809.5 431.8 813.3 432.3C817.1 432.8 820.3 436.2 823.0 439.0C825.7 441.8 826.7 445.2 829.5 449.0C832.3 452.8 836.0 457.3 840.0 461.8C844.0 466.3 848.5 472.3 853.4 475.8C858.3 479.3 861.2 481.4 869.4 483.0C877.6 484.6 893.8 484.9 902.6 485.7C911.5 486.5 913.2 486.4 922.5 487.8C931.8 489.2 950.0 492.6 958.3 494.0C966.5 495.4 969.7 495.7 972.0 496.0" stroke="#f2cf58" stroke-width="3.2" fill="none" stroke-linecap="round" stroke-linejoin="round" />
<path d="M696.4 438.7C698.7 436.2 705.1 429.8 710.0 424.0C714.9 418.2 720.2 411.3 726.0 404.0C731.8 396.7 739.2 385.7 744.5 380.0C749.8 374.3 753.4 371.2 757.8 369.7C762.2 368.2 767.0 368.8 771.0 371.0C775.0 373.2 777.7 377.9 781.7 383.0C785.7 388.1 790.7 395.5 795.0 401.5C799.3 407.5 804.2 414.1 807.7 419.0C811.2 423.9 813.3 427.3 816.0 430.8C818.7 434.3 821.8 437.0 824.0 440.0C826.2 443.0 826.8 445.4 829.5 449.0C832.2 452.6 836.0 457.3 840.0 461.8C844.0 466.3 848.5 472.3 853.4 475.8C858.3 479.3 861.2 481.4 869.4 483.0C877.6 484.6 893.8 484.9 902.6 485.7C911.5 486.5 913.2 486.4 922.5 487.8C931.8 489.2 950.0 492.6 958.3 494.0C966.5 495.4 969.7 495.7 972.0 496.0" stroke="#41a823" stroke-width="1.5" fill="none" stroke-linecap="round" stroke-linejoin="round" />
<circle cx="712.6" cy="424.5" r="2.9" fill="#fff" stroke="#1f7a33" stroke-width="1.8"/>
<circle cx="807.7" cy="419.3" r="2.9" fill="#fff" stroke="#1f7a33" stroke-width="1.8"/>
<circle cx="840" cy="461.8" r="2.9" fill="#fff" stroke="#1f7a33" stroke-width="1.8"/>
<circle cx="902.6" cy="485.7" r="2.9" fill="#fff" stroke="#1f7a33" stroke-width="1.8"/>
<circle cx="958.3" cy="494" r="2.9" fill="#fff" stroke="#1f7a33" stroke-width="1.8"/>
<path d="M696 429 l4 -3 M702 424 l4 -3 M704 421 l3 -1" stroke="#111" stroke-width="2" fill="none"/>
<rect x="373" y="313.2" width="18" height="11" rx="5.5" fill="#3d84cf"/><path d="M380 323.7 l2 2.5 l2 -2.5z" fill="#3d84cf"/>
<text x="382" y="322.09999999999997" font-size="9" font-weight="bold" fill="#fff" text-anchor="middle">30</text>
<rect x="746.4" y="496.9" width="18" height="11" rx="5.5" fill="#3d84cf"/><path d="M753.4 507.4 l2 2.5 l2 -2.5z" fill="#3d84cf"/>
<text x="755.4" y="505.79999999999995" font-size="9" font-weight="bold" fill="#fff" text-anchor="middle">30</text>
<rect x="581.5" y="327.7" width="18.5" height="13" rx="1" fill="#f8d51c" stroke="#e6bf10" stroke-width="0.6"/>
<text x="590.8" y="337.8" font-size="9" font-weight="bold" fill="#333" text-anchor="middle">67</text>
<path d="M533.5 548 l3.5 -6 l3.5 6z" fill="#2d8a4e"/>
<g font-family="Liberation Sans, NanumGothic, Noto Sans CJK KR, sans-serif">
<text x="214" y="214" font-size="9.6" fill="#8a7c78" font-weight="normal" text-anchor="start" stroke="#ffffff" stroke-width="2" stroke-opacity="0.7" paint-order="stroke" >신부리</text>
<text x="328" y="198" font-size="9.6" fill="#8a7c78" font-weight="normal" text-anchor="start" stroke="#ffffff" stroke-width="2" stroke-opacity="0.7" paint-order="stroke" >관화리</text>
<text x="300" y="275" font-size="9.6" fill="#8a7c78" font-weight="normal" text-anchor="start" stroke="#ffffff" stroke-width="2" stroke-opacity="0.7" paint-order="stroke" >동암리</text>
<text x="449" y="185" font-size="9.6" fill="#8a7c78" font-weight="normal" text-anchor="start" stroke="#ffffff" stroke-width="2" stroke-opacity="0.7" paint-order="stroke" >도흥리</text>
<text x="210" y="282" font-size="9.6" fill="#8a7c78" font-weight="normal" text-anchor="start" stroke="#ffffff" stroke-width="2" stroke-opacity="0.7" paint-order="stroke" >취곡리</text>
<text x="645" y="186" font-size="9.6" fill="#8a7c78" font-weight="normal" text-anchor="start" stroke="#ffffff" stroke-width="2" stroke-opacity="0.7" paint-order="stroke" >묘리</text>
<text x="557" y="293.5" font-size="9.6" fill="#8a7c78" font-weight="normal" text-anchor="start" stroke="#ffffff" stroke-width="2" stroke-opacity="0.7" paint-order="stroke" >하산리</text>
<text x="674.6" y="286" font-size="9.6" fill="#8a7c78" font-weight="normal" text-anchor="start" stroke="#ffffff" stroke-width="2" stroke-opacity="0.7" paint-order="stroke" >감문리</text>
<text x="460" y="281.5" font-size="9.6" fill="#8a7c78" font-weight="normal" text-anchor="start" stroke="#ffffff" stroke-width="2" stroke-opacity="0.7" paint-order="stroke" >소학리</text>
<text x="807" y="158" font-size="9.6" fill="#8a7c78" font-weight="normal" text-anchor="start" stroke="#ffffff" stroke-width="2" stroke-opacity="0.7" paint-order="stroke" >무등리</text>
<text x="894.6" y="197" font-size="9.6" fill="#8a7c78" font-weight="normal" text-anchor="start" stroke="#ffffff" stroke-width="2" stroke-opacity="0.7" paint-order="stroke" >오산리</text>
<text x="808.8" y="296" font-size="9.6" fill="#8a7c78" font-weight="normal" text-anchor="start" stroke="#ffffff" stroke-width="2" stroke-opacity="0.7" paint-order="stroke" >이천리</text>
<text x="894.6" y="296" font-size="9.6" fill="#8a7c78" font-weight="normal" text-anchor="start" stroke="#ffffff" stroke-width="2" stroke-opacity="0.7" paint-order="stroke" >달천리</text>
<text x="942" y="303" font-size="9.6" fill="#8a7c78" font-weight="normal" text-anchor="start" stroke="#ffffff" stroke-width="2" stroke-opacity="0.7" paint-order="stroke" >박곡리</text>
<text x="384" y="304" font-size="9.6" fill="#8a7c78" font-weight="normal" text-anchor="start" stroke="#ffffff" stroke-width="2" stroke-opacity="0.7" paint-order="stroke" >도성리</text>
<text x="248.5" y="353" font-size="9.6" fill="#8a7c78" font-weight="normal" text-anchor="start" stroke="#ffffff" stroke-width="2" stroke-opacity="0.7" paint-order="stroke" >유서리</text>
<text x="326.9" y="400" font-size="9.6" fill="#8a7c78" font-weight="normal" text-anchor="start" stroke="#ffffff" stroke-width="2" stroke-opacity="0.7" paint-order="stroke" >문명리</text>
<text x="591.5" y="415.5" font-size="9.6" fill="#8a7c78" font-weight="normal" text-anchor="start" stroke="#ffffff" stroke-width="2" stroke-opacity="0.7" paint-order="stroke" >동곡리</text>
<text x="530.4" y="426" font-size="9.6" fill="#8a7c78" font-weight="normal" text-anchor="start" stroke="#ffffff" stroke-width="2" stroke-opacity="0.7" paint-order="stroke" >봉촌리</text>
<text x="684.4" y="377" font-size="9.6" fill="#8a7c78" font-weight="normal" text-anchor="start" stroke="#ffffff" stroke-width="2" stroke-opacity="0.7" paint-order="stroke" >문양리</text>
<text x="243" y="454.5" font-size="9.6" fill="#8a7c78" font-weight="normal" text-anchor="start" stroke="#ffffff" stroke-width="2" stroke-opacity="0.7" paint-order="stroke" >운산리</text>
<text x="319" y="497" font-size="9.6" fill="#8a7c78" font-weight="normal" text-anchor="start" stroke="#ffffff" stroke-width="2" stroke-opacity="0.7" paint-order="stroke" >기산리</text>
<text x="413" y="525.5" font-size="9.6" fill="#8a7c78" font-weight="normal" text-anchor="start" stroke="#ffffff" stroke-width="2" stroke-opacity="0.7" paint-order="stroke" >동락리</text>
<text x="653" y="470.5" font-size="9.6" fill="#8a7c78" font-weight="normal" text-anchor="start" stroke="#ffffff" stroke-width="2" stroke-opacity="0.7" paint-order="stroke" >문산리</text>
<text x="587.5" y="533.5" font-size="9.6" fill="#8a7c78" font-weight="normal" text-anchor="start" stroke="#ffffff" stroke-width="2" stroke-opacity="0.7" paint-order="stroke" >노곡리</text>
<text x="789" y="452" font-size="9.6" fill="#8a7c78" font-weight="normal" text-anchor="start" stroke="#ffffff" stroke-width="2" stroke-opacity="0.7" paint-order="stroke" >매곡리</text>
<text x="820" y="509.5" font-size="9.6" fill="#8a7c78" font-weight="normal" text-anchor="start" stroke="#ffffff" stroke-width="2" stroke-opacity="0.7" paint-order="stroke" >죽곡리</text>
<text x="310" y="227" font-size="11.8" fill="#bdbbb9" font-weight="bold" text-anchor="start" opacity="0.85">선남면</text>
<text x="732.6" y="225" font-size="11.8" fill="#bdbbb9" font-weight="bold" text-anchor="start" opacity="0.85">하빈면</text>
<text x="240.5" y="585.5" font-size="11.8" fill="#bdbbb9" font-weight="bold" text-anchor="start" opacity="0.85">용암면</text>
<text x="771" y="443" font-size="11.8" fill="#bdbbb9" font-weight="bold" text-anchor="start" opacity="0.85">다사읍</text>
<text x="750.5" y="199" font-size="9.6" fill="#3c3c3c" font-weight="bold" text-anchor="middle" stroke="#ffffff" stroke-width="2" stroke-opacity="0.7" paint-order="stroke" >현내</text>
<text x="750.5" y="211" font-size="9.6" fill="#3c3c3c" font-weight="bold" text-anchor="middle" stroke="#ffffff" stroke-width="2" stroke-opacity="0.7" paint-order="stroke" >산업단지</text>
<text x="834" y="343.5" font-size="9.6" fill="#3c3c3c" font-weight="bold" text-anchor="middle" stroke="#ffffff" stroke-width="2" stroke-opacity="0.7" paint-order="stroke" >성서5차첨단</text>
<text x="834" y="355" font-size="9.6" fill="#3c3c3c" font-weight="bold" text-anchor="middle" stroke="#ffffff" stroke-width="2" stroke-opacity="0.7" paint-order="stroke" >산업단지</text>
<text x="908.6" y="521" font-size="9.6" fill="#3c3c3c" font-weight="bold" text-anchor="middle" stroke="#ffffff" stroke-width="2" stroke-opacity="0.7" paint-order="stroke" >성서3차일반</text>
<text x="909" y="532.5" font-size="9.6" fill="#3c3c3c" font-weight="bold" text-anchor="middle" stroke="#ffffff" stroke-width="2" stroke-opacity="0.7" paint-order="stroke" >산업단지</text>
<text x="523.7" y="561.5" font-size="9.6" fill="#3c3c3c" font-weight="bold" text-anchor="start" stroke="#ffffff" stroke-width="2" stroke-opacity="0.7" paint-order="stroke" >불당산</text>
<text x="812" y="424" font-size="9.6" fill="#222" font-weight="bold" text-anchor="start" stroke="#ffffff" stroke-width="2" stroke-opacity="0.7" paint-order="stroke" >다사역</text>
<text x="717.4" y="430" font-size="9.6" fill="#222" font-weight="bold" text-anchor="start" stroke="#ffffff" stroke-width="2" stroke-opacity="0.7" paint-order="stroke" >문양역</text>
<text x="845.5" y="468" font-size="9.6" fill="#222" font-weight="bold" text-anchor="start" stroke="#ffffff" stroke-width="2" stroke-opacity="0.7" paint-order="stroke" >대실역</text>
<text x="908" y="492" font-size="9.6" fill="#222" font-weight="bold" text-anchor="start" stroke="#ffffff" stroke-width="2" stroke-opacity="0.7" paint-order="stroke" >강창역</text>
<text x="963" y="498" font-size="9.6" fill="#222" font-weight="bold" text-anchor="start" stroke="#ffffff" stroke-width="2" stroke-opacity="0.7" paint-order="stroke" >계</text>
<text x="207" y="562" font-size="9.6" fill="#222" font-weight="bold" text-anchor="start" stroke="#ffffff" stroke-width="2" stroke-opacity="0.7" paint-order="stroke" >주</text>
<text x="836" y="320.5" font-size="9.6" fill="#4a7fd0" font-weight="normal" text-anchor="start" >금호강</text>
</g>
<path d="M545.5 206.4 L540.0 213.0 L536.0 222.3 L536.0 232.7 L536.0 242.8 L533.4 251.7 L527.8 259.6 L524.0 269.0 L521.0 279.0 L515.7 287.3 L510.0 295.7 L505.0 302.5 L497.0 308.4 L489.5 314.8 L483.3 322.7 L478.6 332.0 L475.5 340.8 L474.4 350.4 L471.0 359.6 L468.0 368.8 L465.5 378.5 L461.4 387.3 L458.0 397.0 L455.0 406.7 L456.0 416.8 L456.7 426.9 L458.4 437.0 L459.3 447.0 L460.4 457.0 L461.8 467.0 L464.3 476.4 L466.8 486.4 L470.0 496.0 L477.7 500.7 L487.0 503.2 L497.9 504.4 L507.0 505.7 L517.0 508.8 L527.0 510.8 L536.5 510.0 L546.5 507.4 L555.8 505.4 L565.4 506.0 L575.0 507.5 L585.3 508.0 L595.0 508.5 L605.0 508.8 L615.0 509.4 L625.0 509.7 L635.0 510.0 L645.0 511.8 L654.9 514.4 L664.6 516.4 L666.3 506.0 L668.0 496.8 L660.8 493.8 L650.9 491.9 L641.0 490.6 L631.4 488.9 L621.8 484.9 L611.8 484.5 L602.0 484.9 L592.5 486.6 L582.2 488.2 L572.3 488.9 L562.3 489.5 L552.4 489.8 L542.3 488.6 L532.3 487.0 L523.0 484.0 L514.7 478.5 L508.4 471.8 L503.0 463.4 L498.7 454.0 L496.0 445.0 L494.5 435.0 L493.7 425.0 L496.0 416.0 L498.4 405.7 L498.7 396.0 L503.0 386.4 L503.0 377.2 L496.0 368.0 L500.4 359.0 L501.7 349.5 L502.0 340.3 L506.8 332.2 L513.0 326.0 L518.3 319.3 L526.0 312.0 L533.6 305.4 L538.0 297.0 L542.4 287.3 L546.3 278.0 L548.8 268.8 L552.5 259.6 L559.0 252.0 L562.0 242.8 L566.4 233.6 L570.6 223.5 L573.7 214.8 L564.4 210.9 L554.7 208.4Z M513.5 343.3 L507.4 350.0 L505.4 358.7 L501.0 368.0 L503.0 377.2 L508.0 377.2 L513.0 369.7 L517.0 361.8 L517.5 352.4 L522.2 345.3Z" fill="#8aaedb"/>
<g fill="none" stroke="#ff0000" stroke-width="1" shape-rendering="crispEdges"><circle cx="545.5" cy="206.4" r="2.1"/><circle cx="540.0" cy="213.0" r="2.1"/><circle cx="536.0" cy="222.3" r="2.1"/><circle cx="536.0" cy="232.7" r="2.1"/><circle cx="536.0" cy="242.8" r="2.1"/><circle cx="533.4" cy="251.7" r="2.1"/><circle cx="527.8" cy="259.6" r="2.1"/><circle cx="524.0" cy="269.0" r="2.1"/><circle cx="521.0" cy="279.0" r="2.1"/><circle cx="515.7" cy="287.3" r="2.1"/><circle cx="510.0" cy="295.7" r="2.1"/><circle cx="505.0" cy="302.5" r="2.1"/><circle cx="497.0" cy="308.4" r="2.1"/><circle cx="489.5" cy="314.8" r="2.1"/><circle cx="483.3" cy="322.7" r="2.1"/><circle cx="478.6" cy="332.0" r="2.1"/><circle cx="475.5" cy="340.8" r="2.1"/><circle cx="474.4" cy="350.4" r="2.1"/><circle cx="471.0" cy="359.6" r="2.1"/><circle cx="468.0" cy="368.8" r="2.1"/><circle cx="465.5" cy="378.5" r="2.1"/><circle cx="461.4" cy="387.3" r="2.1"/><circle cx="458.0" cy="397.0" r="2.1"/><circle cx="455.0" cy="406.7" r="2.1"/><circle cx="456.0" cy="416.8" r="2.1"/><circle cx="456.7" cy="426.9" r="2.1"/><circle cx="458.4" cy="437.0" r="2.1"/><circle cx="459.3" cy="447.0" r="2.1"/><circle cx="460.4" cy="457.0" r="2.1"/><circle cx="461.8" cy="467.0" r="2.1"/><circle cx="464.3" cy="476.4" r="2.1"/><circle cx="466.8" cy="486.4" r="2.1"/><circle cx="470.0" cy="496.0" r="2.1"/><circle cx="477.7" cy="500.7" r="2.1"/><circle cx="487.0" cy="503.2" r="2.1"/><circle cx="497.9" cy="504.4" r="2.1"/><circle cx="507.0" cy="505.7" r="2.1"/><circle cx="517.0" cy="508.8" r="2.1"/><circle cx="527.0" cy="510.8" r="2.1"/><circle cx="536.5" cy="510.0" r="2.1"/><circle cx="546.5" cy="507.4" r="2.1"/><circle cx="555.8" cy="505.4" r="2.1"/><circle cx="565.4" cy="506.0" r="2.1"/><circle cx="575.0" cy="507.5" r="2.1"/><circle cx="585.3" cy="508.0" r="2.1"/><circle cx="595.0" cy="508.5" r="2.1"/><circle cx="605.0" cy="508.8" r="2.1"/><circle cx="615.0" cy="509.4" r="2.1"/><circle cx="625.0" cy="509.7" r="2.1"/><circle cx="635.0" cy="510.0" r="2.1"/><circle cx="645.0" cy="511.8" r="2.1"/><circle cx="654.9" cy="514.4" r="2.1"/><circle cx="664.6" cy="516.4" r="2.1"/><circle cx="666.3" cy="506.0" r="2.1"/><circle cx="668.0" cy="496.8" r="2.1"/><circle cx="660.8" cy="493.8" r="2.1"/><circle cx="650.9" cy="491.9" r="2.1"/><circle cx="641.0" cy="490.6" r="2.1"/><circle cx="631.4" cy="488.9" r="2.1"/><circle cx="621.8" cy="484.9" r="2.1"/><circle cx="611.8" cy="484.5" r="2.1"/><circle cx="602.0" cy="484.9" r="2.1"/><circle cx="592.5" cy="486.6" r="2.1"/><circle cx="582.2" cy="488.2" r="2.1"/><circle cx="572.3" cy="488.9" r="2.1"/><circle cx="562.3" cy="489.5" r="2.1"/><circle cx="552.4" cy="489.8" r="2.1"/><circle cx="542.3" cy="488.6" r="2.1"/><circle cx="532.3" cy="487.0" r="2.1"/><circle cx="523.0" cy="484.0" r="2.1"/><circle cx="514.7" cy="478.5" r="2.1"/><circle cx="508.4" cy="471.8" r="2.1"/><circle cx="503.0" cy="463.4" r="2.1"/><circle cx="498.7" cy="454.0" r="2.1"/><circle cx="496.0" cy="445.0" r="2.1"/><circle cx="494.5" cy="435.0" r="2.1"/><circle cx="493.7" cy="425.0" r="2.1"/><circle cx="496.0" cy="416.0" r="2.1"/><circle cx="498.4" cy="405.7" r="2.1"/><circle cx="498.7" cy="396.0" r="2.1"/><circle cx="503.0" cy="386.4" r="2.1"/><circle cx="503.0" cy="377.2" r="2.1"/><circle cx="496.0" cy="368.0" r="2.1"/><circle cx="500.4" cy="359.0" r="2.1"/><circle cx="501.7" cy="349.5" r="2.1"/><circle cx="502.0" cy="340.3" r="2.1"/><circle cx="506.8" cy="332.2" r="2.1"/><circle cx="513.0" cy="326.0" r="2.1"/><circle cx="518.3" cy="319.3" r="2.1"/><circle cx="526.0" cy="312.0" r="2.1"/><circle cx="533.6" cy="305.4" r="2.1"/><circle cx="538.0" cy="297.0" r="2.1"/><circle cx="542.4" cy="287.3" r="2.1"/><circle cx="546.3" cy="278.0" r="2.1"/><circle cx="548.8" cy="268.8" r="2.1"/><circle cx="552.5" cy="259.6" r="2.1"/><circle cx="559.0" cy="252.0" r="2.1"/><circle cx="562.0" cy="242.8" r="2.1"/><circle cx="566.4" cy="233.6" r="2.1"/><circle cx="570.6" cy="223.5" r="2.1"/><circle cx="573.7" cy="214.8" r="2.1"/><circle cx="564.4" cy="210.9" r="2.1"/><circle cx="554.7" cy="208.4" r="2.1"/><circle cx="551.8" cy="216.4" r="2.1"/><circle cx="562.8" cy="217.4" r="2.1"/><circle cx="548.1" cy="228.6" r="2.1"/><circle cx="561.1" cy="228.5" r="2.1"/><circle cx="552.8" cy="234.3" r="2.1"/><circle cx="546.1" cy="248.2" r="2.1"/><circle cx="539.8" cy="257.7" r="2.1"/><circle cx="534.9" cy="265.9" r="2.1"/><circle cx="530.7" cy="278.4" r="2.1"/><circle cx="524.1" cy="287.1" r="2.1"/><circle cx="511.4" cy="307.2" r="2.1"/><circle cx="494.4" cy="319.8" r="2.1"/><circle cx="509.7" cy="317.7" r="2.1"/><circle cx="491.8" cy="328.2" r="2.1"/><circle cx="485.2" cy="336.1" r="2.1"/><circle cx="488.3" cy="350.0" r="2.1"/><circle cx="483.3" cy="357.4" r="2.1"/><circle cx="479.0" cy="366.8" r="2.1"/><circle cx="483.5" cy="377.7" r="2.1"/><circle cx="478.9" cy="389.1" r="2.1"/><circle cx="487.8" cy="385.8" r="2.1"/><circle cx="472.4" cy="396.6" r="2.1"/><circle cx="486.4" cy="397.2" r="2.1"/><circle cx="465.9" cy="407.4" r="2.1"/><circle cx="476.5" cy="405.7" r="2.1"/><circle cx="488.7" cy="407.5" r="2.1"/><circle cx="471.4" cy="417.2" r="2.1"/><circle cx="481.4" cy="419.7" r="2.1"/><circle cx="468.6" cy="431.0" r="2.1"/><circle cx="477.0" cy="426.3" r="2.1"/><circle cx="474.2" cy="440.7" r="2.1"/><circle cx="481.6" cy="437.4" r="2.1"/><circle cx="466.1" cy="448.9" r="2.1"/><circle cx="478.9" cy="446.5" r="2.1"/><circle cx="488.1" cy="449.6" r="2.1"/><circle cx="472.5" cy="460.9" r="2.1"/><circle cx="482.0" cy="458.7" r="2.1"/><circle cx="478.7" cy="469.1" r="2.1"/><circle cx="490.5" cy="467.8" r="2.1"/><circle cx="474.3" cy="481.5" r="2.1"/><circle cx="485.2" cy="480.5" r="2.1"/><circle cx="494.0" cy="481.4" r="2.1"/><circle cx="507.2" cy="481.3" r="2.1"/><circle cx="480.1" cy="489.3" r="2.1"/><circle cx="490.2" cy="491.0" r="2.1"/><circle cx="499.3" cy="491.5" r="2.1"/><circle cx="513.7" cy="488.4" r="2.1"/><circle cx="507.7" cy="497.5" r="2.1"/><circle cx="519.4" cy="498.9" r="2.1"/><circle cx="528.5" cy="501.3" r="2.1"/><circle cx="540.7" cy="497.2" r="2.1"/><circle cx="576.3" cy="497.8" r="2.1"/><circle cx="585.9" cy="499.8" r="2.1"/><circle cx="600.3" cy="498.3" r="2.1"/><circle cx="612.4" cy="498.8" r="2.1"/><circle cx="625.5" cy="500.3" r="2.1"/><circle cx="633.5" cy="501.2" r="2.1"/><circle cx="644.0" cy="499.2" r="2.1"/><circle cx="513.5" cy="343.3" r="2.1"/><circle cx="507.4" cy="350.0" r="2.1"/><circle cx="505.4" cy="358.7" r="2.1"/><circle cx="501.0" cy="368.0" r="2.1"/><circle cx="522.2" cy="345.3" r="2.1"/><circle cx="517.5" cy="352.4" r="2.1"/><circle cx="517.0" cy="361.8" r="2.1"/><circle cx="513.0" cy="369.7" r="2.1"/><circle cx="508.0" cy="377.2" r="2.1"/></g>
<path d="M545.5 206.4L540.0 213.0M545.5 206.4L554.7 208.4M545.5 206.4L551.8 216.4M540.0 213.0L536.0 222.3M540.0 213.0L551.8 216.4M536.0 222.3L536.0 232.7M536.0 222.3L551.8 216.4M536.0 222.3L548.1 228.6M536.0 232.7L536.0 242.8M536.0 232.7L548.1 228.6M536.0 232.7L552.8 234.3M536.0 242.8L533.4 251.7M536.0 242.8L552.8 234.3M536.0 242.8L546.1 248.2M533.4 251.7L527.8 259.6M533.4 251.7L546.1 248.2M533.4 251.7L539.8 257.7M527.8 259.6L524.0 269.0M527.8 259.6L539.8 257.7M527.8 259.6L534.9 265.9M524.0 269.0L521.0 279.0M524.0 269.0L534.9 265.9M524.0 269.0L530.7 278.4M521.0 279.0L515.7 287.3M521.0 279.0L530.7 278.4M521.0 279.0L524.1 287.1M515.7 287.3L510.0 295.7M515.7 287.3L524.1 287.1M510.0 295.7L505.0 302.5M510.0 295.7L526.0 312.0M510.0 295.7L533.6 305.4M510.0 295.7L524.1 287.1M510.0 295.7L511.4 307.2M505.0 302.5L497.0 308.4M505.0 302.5L511.4 307.2M497.0 308.4L489.5 314.8M497.0 308.4L511.4 307.2M497.0 308.4L494.4 319.8M497.0 308.4L509.7 317.7M489.5 314.8L483.3 322.7M489.5 314.8L494.4 319.8M483.3 322.7L478.6 332.0M483.3 322.7L494.4 319.8M483.3 322.7L491.8 328.2M483.3 322.7L485.2 336.1M478.6 332.0L475.5 340.8M478.6 332.0L485.2 336.1M475.5 340.8L474.4 350.4M475.5 340.8L485.2 336.1M475.5 340.8L488.3 350.0M474.4 350.4L471.0 359.6M474.4 350.4L488.3 350.0M474.4 350.4L483.3 357.4M471.0 359.6L468.0 368.8M471.0 359.6L483.3 357.4M471.0 359.6L479.0 366.8M468.0 368.8L465.5 378.5M468.0 368.8L479.0 366.8M468.0 368.8L483.5 377.7M465.5 378.5L461.4 387.3M465.5 378.5L483.5 377.7M465.5 378.5L478.9 389.1M461.4 387.3L458.0 397.0M461.4 387.3L478.9 389.1M461.4 387.3L472.4 396.6M458.0 397.0L455.0 406.7M458.0 397.0L472.4 396.6M458.0 397.0L465.9 407.4M455.0 406.7L456.0 416.8M455.0 406.7L465.9 407.4M456.0 416.8L456.7 426.9M456.0 416.8L465.9 407.4M456.0 416.8L471.4 417.2M456.7 426.9L458.4 437.0M456.7 426.9L471.4 417.2M456.7 426.9L468.6 431.0M458.4 437.0L459.3 447.0M458.4 437.0L468.6 431.0M458.4 437.0L474.2 440.7M458.4 437.0L466.1 448.9M459.3 447.0L460.4 457.0M459.3 447.0L466.1 448.9M460.4 457.0L461.8 467.0M460.4 457.0L466.1 448.9M460.4 457.0L472.5 460.9M461.8 467.0L464.3 476.4M461.8 467.0L472.5 460.9M461.8 467.0L478.7 469.1M464.3 476.4L466.8 486.4M464.3 476.4L478.7 469.1M464.3 476.4L474.3 481.5M466.8 486.4L470.0 496.0M466.8 486.4L474.3 481.5M466.8 486.4L480.1 489.3M470.0 496.0L477.7 500.7M470.0 496.0L480.1 489.3M477.7 500.7L487.0 503.2M477.7 500.7L480.1 489.3M487.0 503.2L497.9 504.4M487.0 503.2L480.1 489.3M487.0 503.2L490.2 491.0M497.9 504.4L507.0 505.7M497.9 504.4L490.2 491.0M497.9 504.4L499.3 491.5M497.9 504.4L507.7 497.5M507.0 505.7L517.0 508.8M507.0 505.7L507.7 497.5M507.0 505.7L519.4 498.9M517.0 508.8L527.0 510.8M517.0 508.8L519.4 498.9M517.0 508.8L528.5 501.3M527.0 510.8L536.5 510.0M527.0 510.8L528.5 501.3M536.5 510.0L546.5 507.4M536.5 510.0L528.5 501.3M536.5 510.0L540.7 497.2M546.5 507.4L555.8 505.4M546.5 507.4L540.7 497.2M555.8 505.4L565.4 506.0M555.8 505.4L562.3 489.5M555.8 505.4L552.4 489.8M555.8 505.4L540.7 497.2M565.4 506.0L575.0 507.5M565.4 506.0L562.3 489.5M565.4 506.0L576.3 497.8M575.0 507.5L585.3 508.0M575.0 507.5L576.3 497.8M575.0 507.5L585.9 499.8M585.3 508.0L595.0 508.5M585.3 508.0L585.9 499.8M595.0 508.5L605.0 508.8M595.0 508.5L585.9 499.8M595.0 508.5L600.3 498.3M605.0 508.8L615.0 509.4M605.0 508.8L600.3 498.3M605.0 508.8L612.4 498.8M615.0 509.4L625.0 509.7M615.0 509.4L612.4 498.8M615.0 509.4L625.5 500.3M625.0 509.7L635.0 510.0M625.0 509.7L625.5 500.3M625.0 509.7L633.5 501.2M635.0 510.0L645.0 511.8M635.0 510.0L633.5 501.2M635.0 510.0L644.0 499.2M645.0 511.8L654.9 514.4M645.0 511.8L644.0 499.2M654.9 514.4L664.6 516.4M654.9 514.4L666.3 506.0M654.9 514.4L660.8 493.8M654.9 514.4L644.0 499.2M664.6 516.4L666.3 506.0M666.3 506.0L668.0 496.8M666.3 506.0L660.8 493.8M668.0 496.8L660.8 493.8M660.8 493.8L650.9 491.9M660.8 493.8L644.0 499.2M650.9 491.9L641.0 490.6M650.9 491.9L644.0 499.2M641.0 490.6L631.4 488.9M641.0 490.6L633.5 501.2M641.0 490.6L644.0 499.2M631.4 488.9L621.8 484.9M631.4 488.9L625.5 500.3M631.4 488.9L633.5 501.2M621.8 484.9L611.8 484.5M621.8 484.9L612.4 498.8M621.8 484.9L625.5 500.3M611.8 484.5L602.0 484.9M611.8 484.5L612.4 498.8M602.0 484.9L592.5 486.6M602.0 484.9L600.3 498.3M602.0 484.9L612.4 498.8M592.5 486.6L582.2 488.2M592.5 486.6L585.9 499.8M592.5 486.6L600.3 498.3M582.2 488.2L572.3 488.9M582.2 488.2L576.3 497.8M582.2 488.2L585.9 499.8M572.3 488.9L562.3 489.5M572.3 488.9L576.3 497.8M562.3 489.5L552.4 489.8M562.3 489.5L576.3 497.8M552.4 489.8L542.3 488.6M552.4 489.8L540.7 497.2M542.3 488.6L532.3 487.0M542.3 488.6L540.7 497.2M532.3 487.0L523.0 484.0M532.3 487.0L519.4 498.9M532.3 487.0L528.5 501.3M532.3 487.0L540.7 497.2M523.0 484.0L514.7 478.5M523.0 484.0L513.7 488.4M523.0 484.0L519.4 498.9M514.7 478.5L508.4 471.8M514.7 478.5L507.2 481.3M514.7 478.5L513.7 488.4M508.4 471.8L503.0 463.4M508.4 471.8L490.5 467.8M508.4 471.8L494.0 481.4M508.4 471.8L507.2 481.3M503.0 463.4L498.7 454.0M503.0 463.4L490.5 467.8M498.7 454.0L496.0 445.0M498.7 454.0L488.1 449.6M498.7 454.0L482.0 458.7M498.7 454.0L490.5 467.8M496.0 445.0L494.5 435.0M496.0 445.0L481.6 437.4M496.0 445.0L488.1 449.6M494.5 435.0L493.7 425.0M494.5 435.0L481.6 437.4M493.7 425.0L496.0 416.0M493.7 425.0L481.4 419.7M493.7 425.0L477.0 426.3M493.7 425.0L481.6 437.4M496.0 416.0L498.4 405.7M496.0 416.0L488.7 407.5M496.0 416.0L481.4 419.7M498.4 405.7L498.7 396.0M498.4 405.7L486.4 397.2M498.4 405.7L488.7 407.5M498.7 396.0L503.0 386.4M498.7 396.0L487.8 385.8M498.7 396.0L486.4 397.2M503.0 386.4L503.0 377.2M503.0 386.4L487.8 385.8M503.0 377.2L496.0 368.0M503.0 377.2L483.5 377.7M503.0 377.2L487.8 385.8M496.0 368.0L500.4 359.0M496.0 368.0L483.3 357.4M496.0 368.0L479.0 366.8M496.0 368.0L483.5 377.7M500.4 359.0L501.7 349.5M500.4 359.0L488.3 350.0M500.4 359.0L483.3 357.4M501.7 349.5L502.0 340.3M501.7 349.5L488.3 350.0M502.0 340.3L506.8 332.2M502.0 340.3L491.8 328.2M502.0 340.3L485.2 336.1M502.0 340.3L488.3 350.0M506.8 332.2L513.0 326.0M506.8 332.2L494.4 319.8M506.8 332.2L509.7 317.7M506.8 332.2L491.8 328.2M513.0 326.0L518.3 319.3M513.0 326.0L509.7 317.7M518.3 319.3L526.0 312.0M518.3 319.3L511.4 307.2M518.3 319.3L509.7 317.7M526.0 312.0L533.6 305.4M526.0 312.0L511.4 307.2M533.6 305.4L538.0 297.0M533.6 305.4L524.1 287.1M538.0 297.0L542.4 287.3M538.0 297.0L524.1 287.1M542.4 287.3L546.3 278.0M542.4 287.3L530.7 278.4M542.4 287.3L524.1 287.1M546.3 278.0L548.8 268.8M546.3 278.0L534.9 265.9M546.3 278.0L530.7 278.4M548.8 268.8L552.5 259.6M548.8 268.8L539.8 257.7M548.8 268.8L534.9 265.9M552.5 259.6L559.0 252.0M552.5 259.6L546.1 248.2M552.5 259.6L539.8 257.7M559.0 252.0L562.0 242.8M559.0 252.0L546.1 248.2M562.0 242.8L566.4 233.6M562.0 242.8L552.8 234.3M562.0 242.8L546.1 248.2M566.4 233.6L570.6 223.5M566.4 233.6L561.1 228.5M566.4 233.6L552.8 234.3M570.6 223.5L573.7 214.8M570.6 223.5L562.8 217.4M570.6 223.5L561.1 228.5M573.7 214.8L564.4 210.9M573.7 214.8L562.8 217.4M564.4 210.9L554.7 208.4M564.4 210.9L562.8 217.4M554.7 208.4L551.8 216.4M554.7 208.4L562.8 217.4M551.8 216.4L562.8 217.4M551.8 216.4L548.1 228.6M551.8 216.4L561.1 228.5M562.8 217.4L561.1 228.5M548.1 228.6L561.1 228.5M548.1 228.6L552.8 234.3M561.1 228.5L552.8 234.3M552.8 234.3L546.1 248.2M546.1 248.2L539.8 257.7M539.8 257.7L534.9 265.9M534.9 265.9L530.7 278.4M530.7 278.4L524.1 287.1M511.4 307.2L509.7 317.7M494.4 319.8L509.7 317.7M494.4 319.8L491.8 328.2M491.8 328.2L485.2 336.1M485.2 336.1L488.3 350.0M488.3 350.0L483.3 357.4M483.3 357.4L479.0 366.8M479.0 366.8L483.5 377.7M483.5 377.7L478.9 389.1M483.5 377.7L487.8 385.8M478.9 389.1L487.8 385.8M478.9 389.1L472.4 396.6M478.9 389.1L486.4 397.2M487.8 385.8L486.4 397.2M472.4 396.6L486.4 397.2M472.4 396.6L465.9 407.4M472.4 396.6L476.5 405.7M486.4 397.2L476.5 405.7M486.4 397.2L488.7 407.5M465.9 407.4L476.5 405.7M465.9 407.4L471.4 417.2M476.5 405.7L488.7 407.5M476.5 405.7L471.4 417.2M476.5 405.7L481.4 419.7M488.7 407.5L481.4 419.7M471.4 417.2L481.4 419.7M471.4 417.2L468.6 431.0M471.4 417.2L477.0 426.3M481.4 419.7L477.0 426.3M468.6 431.0L477.0 426.3M468.6 431.0L474.2 440.7M468.6 431.0L481.6 437.4M477.0 426.3L481.6 437.4M474.2 440.7L481.6 437.4M474.2 440.7L466.1 448.9M474.2 440.7L478.9 446.5M481.6 437.4L478.9 446.5M481.6 437.4L488.1 449.6M466.1 448.9L478.9 446.5M466.1 448.9L472.5 460.9M478.9 446.5L488.1 449.6M478.9 446.5L472.5 460.9M478.9 446.5L482.0 458.7M488.1 449.6L482.0 458.7M472.5 460.9L482.0 458.7M472.5 460.9L478.7 469.1M482.0 458.7L478.7 469.1M482.0 458.7L490.5 467.8M478.7 469.1L490.5 467.8M478.7 469.1L474.3 481.5M478.7 469.1L485.2 480.5M490.5 467.8L485.2 480.5M490.5 467.8L494.0 481.4M474.3 481.5L485.2 480.5M474.3 481.5L480.1 489.3M485.2 480.5L494.0 481.4M485.2 480.5L480.1 489.3M485.2 480.5L490.2 491.0M494.0 481.4L507.2 481.3M494.0 481.4L490.2 491.0M494.0 481.4L499.3 491.5M507.2 481.3L499.3 491.5M507.2 481.3L513.7 488.4M480.1 489.3L490.2 491.0M490.2 491.0L499.3 491.5M499.3 491.5L513.7 488.4M499.3 491.5L507.7 497.5M513.7 488.4L507.7 497.5M513.7 488.4L519.4 498.9M507.7 497.5L519.4 498.9M519.4 498.9L528.5 501.3M528.5 501.3L540.7 497.2M576.3 497.8L585.9 499.8M585.9 499.8L600.3 498.3M600.3 498.3L612.4 498.8M612.4 498.8L625.5 500.3M625.5 500.3L633.5 501.2M633.5 501.2L644.0 499.2M513.5 343.3L507.4 350.0M507.4 350.0L505.4 358.7M505.4 358.7L501.0 368.0M522.2 345.3L517.5 352.4M517.5 352.4L517.0 361.8M517.0 361.8L513.0 369.7M513.0 369.7L508.0 377.2M513.5 343.3L522.2 345.3M513.5 343.3L517.5 352.4M507.4 350.0L517.5 352.4M507.4 350.0L517.0 361.8M505.4 358.7L517.0 361.8M505.4 358.7L513.0 369.7M501.0 368.0L513.0 369.7M501.0 368.0L508.0 377.2M501.0 368.0L508.0 377.2" stroke="#0000ff" stroke-width="1" fill="none" shape-rendering="crispEdges"/>
<path d="M522.8 301.8 L538.7 297 L531 300.8Z" fill="#ffee00" stroke="#ffee00" stroke-width="0.6"/>
<path d="M506.9 305.7 L515.2 315.8 L510 311.8Z" fill="#ffee00" stroke="#ffee00" stroke-width="0.6"/>
<path d="M489.5 358 L498.5 352 L494 357.5Z" fill="#ffee00" stroke="#ffee00" stroke-width="0.6"/>
<path d="M472 361 L485 363.5 L478 363.6Z" fill="#ffee00" stroke="#ffee00" stroke-width="0.6"/>
<path d="M478 384 L487 388 L482 387.5Z" fill="#ffee00" stroke="#ffee00" stroke-width="0.6"/>
<path d="M477.5 458.2 L485.5 458.8 L481 459.4Z" fill="#ffee00" stroke="#ffee00" stroke-width="0.6"/>
<path d="M495 487 L497.5 479.5 L497.2 485Z" fill="#ffee00" stroke="#ffee00" stroke-width="0.6"/>
<path d="M541.5 494 L544.5 503 L542 499Z" fill="#ffee00" stroke="#ffee00" stroke-width="0.6"/>
<g stroke="#fff" stroke-width="1" fill="none"><path d="M255 493 L260.5 498.5 L266 493 M260.5 498.5 V504"/><path d="M293 533 L303.500 542 M303.500 533 L293 542"/><path d="M257 533 H266 L257 542 H266"/></g>
<path d="M250.600 543 V520" stroke="#007a00" stroke-width="2.800"/><path d="M245.400 521 H255.800 L250.600 508 Z" fill="#007a00"/>
<path d="M256 548 H279" stroke="#ff0000" stroke-width="1.800"/><path d="M277.300 543 V552.200 L291 547.600 Z" fill="#ff0000"/>
<rect x="243.800" y="539.800" width="14.800" height="15" fill="none" stroke="#fff" stroke-width="1"/><rect x="244.900" y="543" width="11.300" height="10" fill="#0000ff"/>
</svg>
<div class="abs" style="left:735px;top:162px;width:59px;height:19px;background:#252526"></div>
<div class="abs" style="left:737px;top:165px;width:12px;height:12px;border:1px solid #8a8a8a;background:#2d2d30"></div>
<svg class="abs" style="left:738px;top:166px" width="10" height="10" viewBox="0 0 10 10"><path d="M1.5 5.200 L4 8 L8.800 1.500" stroke="#b0b0b0" stroke-width="1.300" fill="none"/></svg>
<div class="abs" style="left:753.300px;top:164px;font-size:11.900px;line-height:16px;color:#f1f1f1;white-space:nowrap">On/Off</div>
<div class="mapbtn" style="left:800px;top:160px;width:75px;height:23px;line-height:21px">위성</div>
<div class="mapbtn" style="left:881px;top:160px;width:75px;height:23px;line-height:21px">지도</div>
<div class="abs" style="left:729px;top:561px;width:235px;height:22px;background:#252526"></div>
<div class="abs" style="left:733px;top:563px;font-size:12.400px;line-height:18px;color:#f1f1f1;white-space:nowrap">EPSG:5174 - 보정된 중부원점(Bessel)</div>
<svg class="abs" style="left:952px;top:570px" width="7" height="4" viewBox="0 0 7 4"><path d="M0 0 H7 L3.500 4 Z" fill="#6a6a6a"/></svg>
<div class="panel" style="left:210px;top:592px;width:760px;height:91px"></div>
<div class="phead" style="left:211px;top:593px;width:758px;background:#2d2d30;line-height:23px">Output</div>
<svg class="abs" style="left:955px;top:599px" width="7" height="8" viewBox="0 0 7 8" shape-rendering="crispEdges"><path d="M1 0 H6 V5 H7 V6 H4 V8 H3 V6 H0 V5 H1 Z M2 1 V5 H3 V1 Z" fill="#f1f1f1" fill-rule="evenodd"/></svg>
<div class="abs" style="left:211px;top:615px;width:758px;height:1px;background:#3f3f46"></div>
<div class="out" style="top:618px">2021-02-02 17:52:10 &gt; Successfully Create Polygon</div>
<div class="out" style="top:633px">2021-02-02 17:53:16 &gt; Start Mesh Generation</div>
<div class="out" style="top:648px">2021-02-02 17:53:16 &gt; Successfully Completed Mesh Generation</div>
<div class="abs" style="left:950px;top:616px;width:18px;height:66px;background:#3e3e42"></div>
<div class="abs" style="left:954px;top:647px;width:9px;height:17px;background:#686868"></div>
<svg class="abs" style="left:954px;top:621px" width="9" height="5" viewBox="0 0 9 5"><path d="M0 5 H9 L4.500 0 Z" fill="#999"/></svg>
<svg class="abs" style="left:954px;top:671px" width="9" height="5" viewBox="0 0 9 5"><path d="M0 0 H9 L4.500 5 Z" fill="#999"/></svg>
<div class="abs" style="left:8px;top:685px;width:963px;height:21px;background:#f0f0f0"></div>
<div class="abs" style="left:9px;top:688px;width:226.500px;height:17px;background:#2d2d30;color:#f1f1f1;font-size:12.640px;line-height:18px;padding-left:3.300px;white-space:nowrap;overflow:hidden">329251.611984925 263739.982986489</div>
<svg class="abs" style="left:958px;top:694px" width="11" height="11" viewBox="0 0 11 11"><g fill="#b8b8b8"><rect x="8" y="0" width="2" height="2"/><rect x="4" y="4" width="2" height="2"/><rect x="8" y="4" width="2" height="2"/><rect x="0" y="8" width="2" height="2"/><rect x="4" y="8" width="2" height="2"/><rect x="8" y="8" width="2" height="2"/></g></svg>
</body>
</html>
